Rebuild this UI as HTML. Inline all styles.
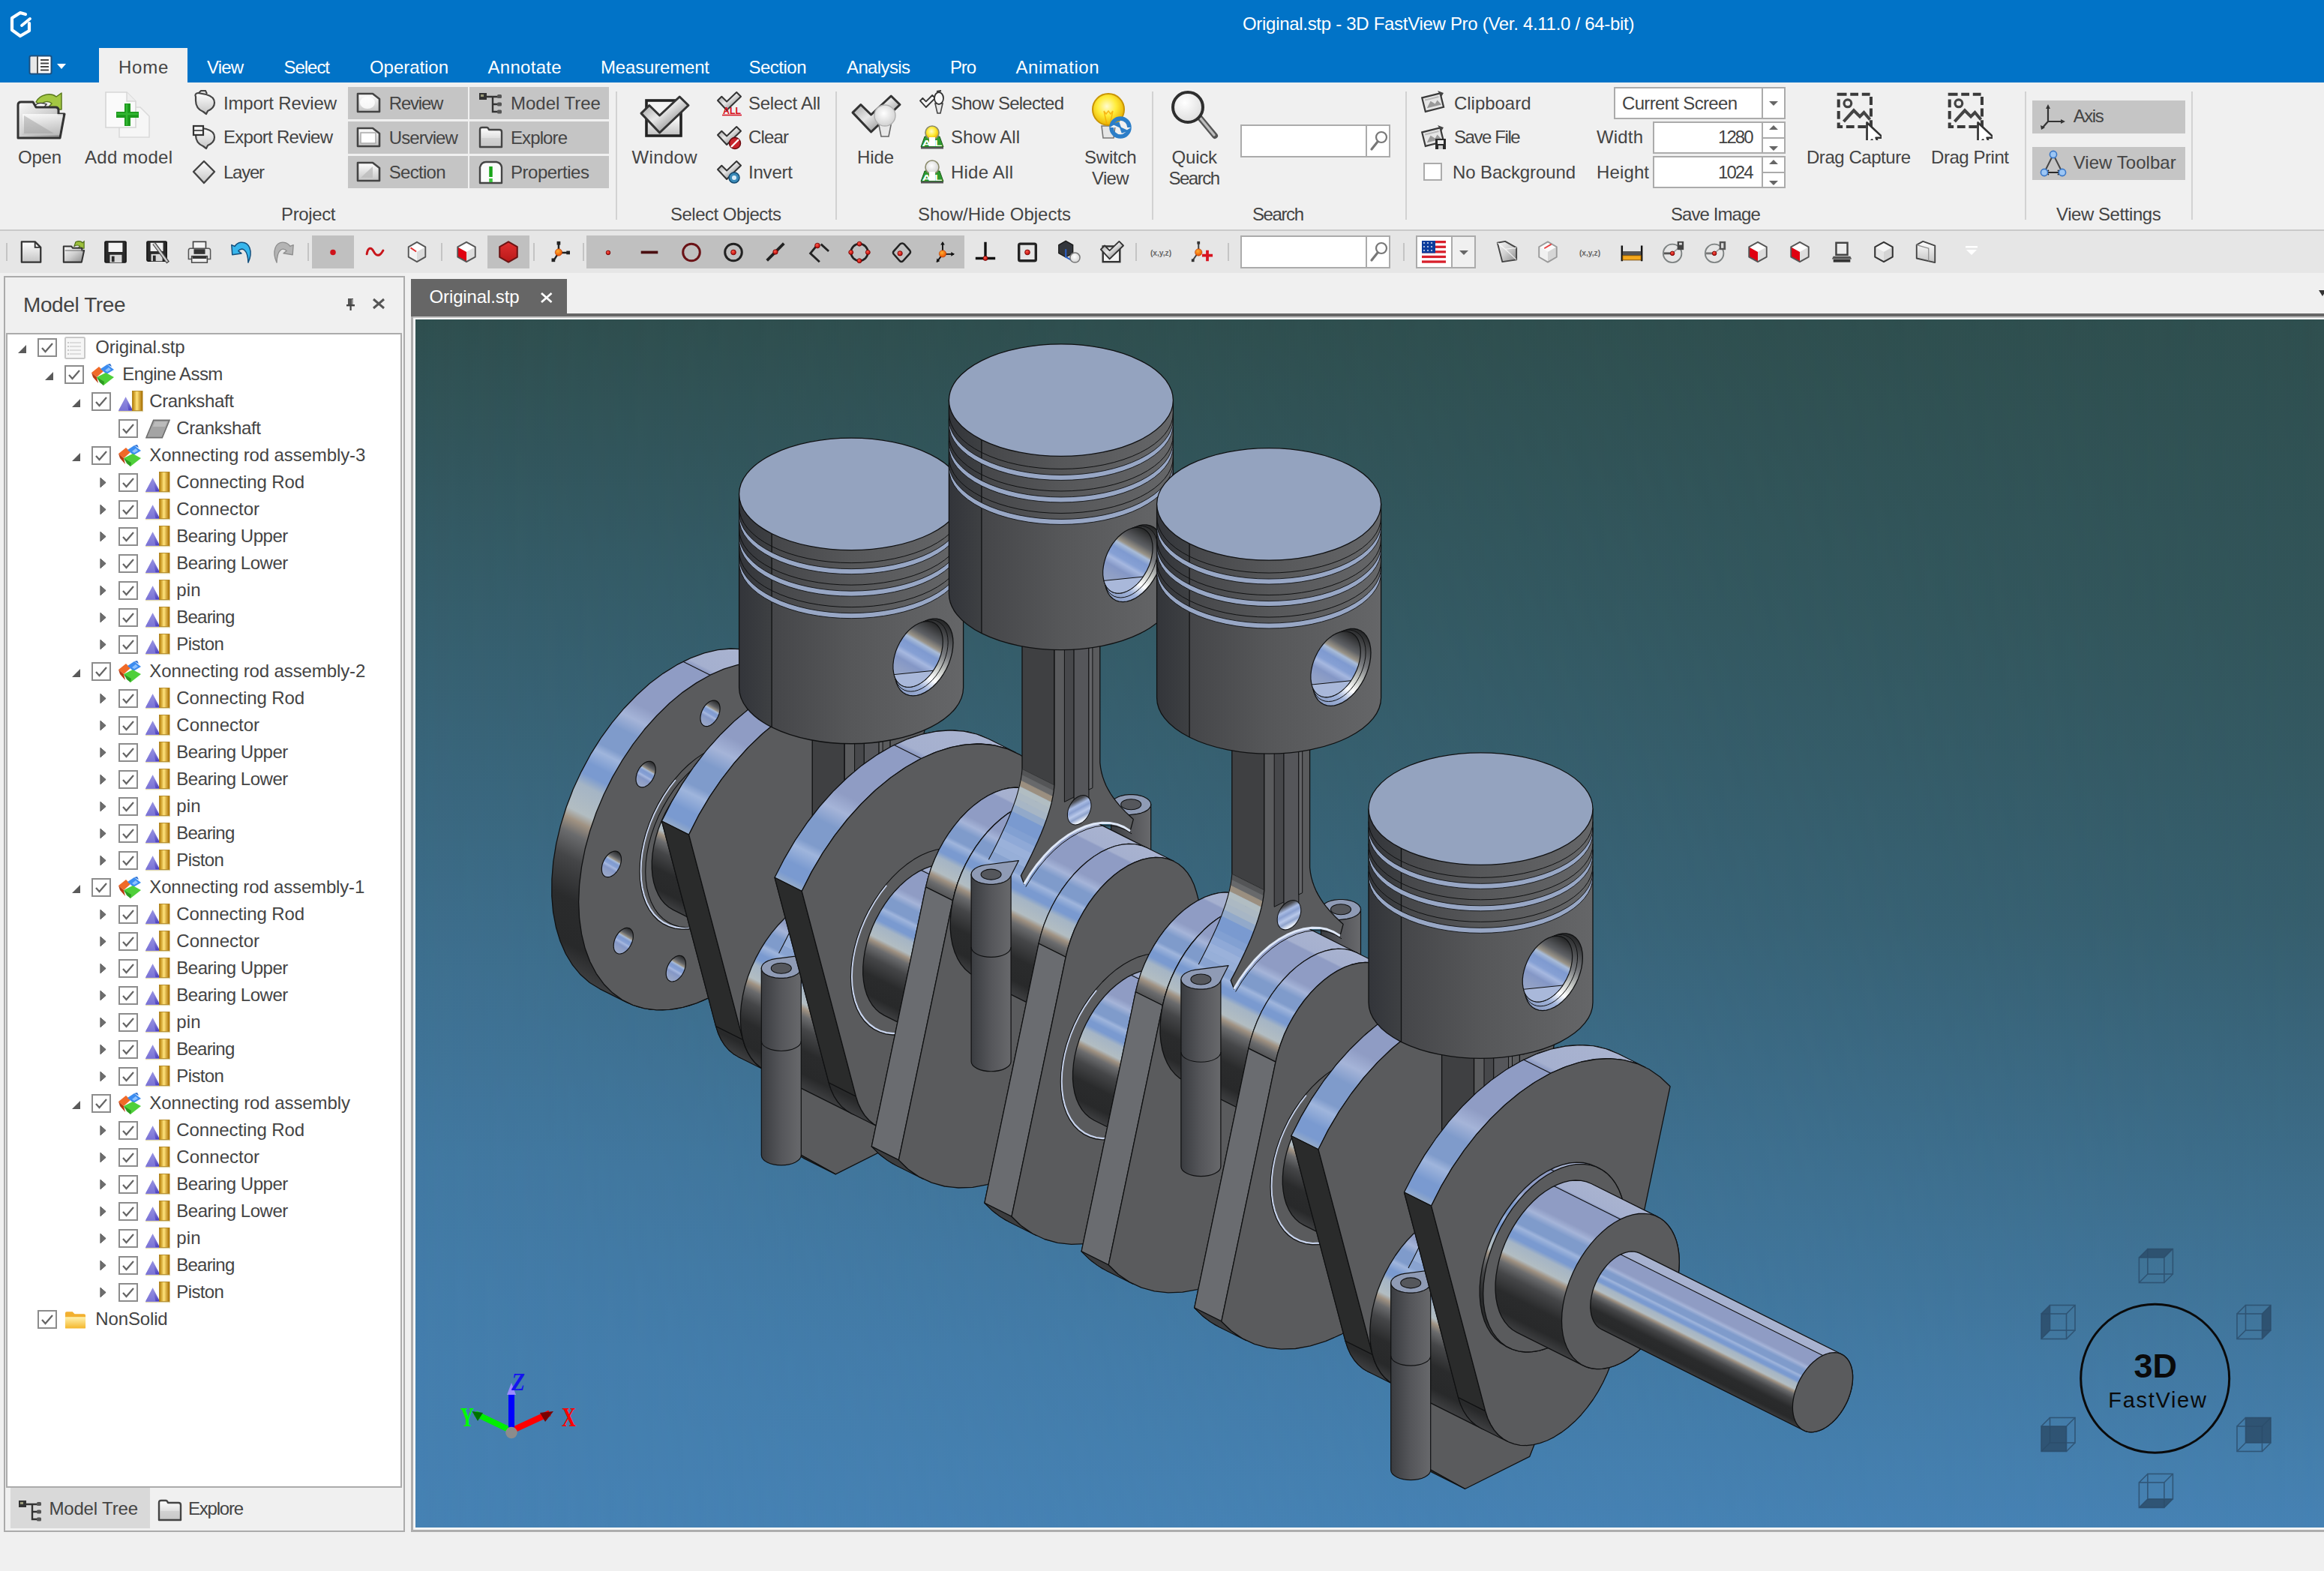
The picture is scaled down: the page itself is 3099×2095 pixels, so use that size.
<!DOCTYPE html>
<html><head><meta charset="utf-8"><title>Original.stp - 3D FastView Pro</title>
<style>
html,body{margin:0;padding:0;}
body{width:3099px;height:2095px;position:relative;overflow:hidden;background:#F0F0F0;font-family:"Liberation Sans",sans-serif;}
.t{position:absolute;white-space:nowrap;}
.r{position:absolute;display:block;}
</style></head><body>
<svg width="0" height="0" style="position:absolute"><defs>
<linearGradient id="gG" x1="0" y1="0" x2="1" y2="1"><stop offset="0" stop-color="#fafafa"/><stop offset=".5" stop-color="#cfcfcf"/><stop offset="1" stop-color="#8a8a8a"/></linearGradient>
<linearGradient id="gG2" x1="0" y1="0" x2="0" y2="1"><stop offset="0" stop-color="#ffffff"/><stop offset="1" stop-color="#c4c4c4"/></linearGradient>
<linearGradient id="gCk" x1="0" y1="0" x2="1" y2="1"><stop offset="0" stop-color="#8c8c8c"/><stop offset=".45" stop-color="#e8e8e8"/><stop offset=".75" stop-color="#9a9a9a"/><stop offset="1" stop-color="#d8d8d8"/></linearGradient>
<radialGradient id="gYB" cx=".45" cy=".4" r=".6"><stop offset="0" stop-color="#fffbd0"/><stop offset=".5" stop-color="#ffec3a"/><stop offset="1" stop-color="#e9b000"/></radialGradient>
<radialGradient id="gWB" cx=".45" cy=".4" r=".6"><stop offset="0" stop-color="#ffffff"/><stop offset="1" stop-color="#d2d2d2"/></radialGradient>
<radialGradient id="gRd" cx=".4" cy=".35" r=".7"><stop offset="0" stop-color="#ff5a4a"/><stop offset="1" stop-color="#b00000"/></radialGradient>
<radialGradient id="gOr" cx=".4" cy=".35" r=".7"><stop offset="0" stop-color="#ffb030"/><stop offset="1" stop-color="#e84a00"/></radialGradient>
<radialGradient id="gLens" cx=".4" cy=".35" r=".7"><stop offset="0" stop-color="#ffffff"/><stop offset="1" stop-color="#dcdcdc"/></radialGradient>
<linearGradient id="gFo" x1="0" y1="0" x2="0" y2="1"><stop offset="0" stop-color="#fff3b0"/><stop offset="1" stop-color="#f4b62a"/></linearGradient>
<linearGradient id="gGo" x1="0" y1="0" x2="1" y2="0"><stop offset="0" stop-color="#b07800"/><stop offset=".45" stop-color="#ffe27a"/><stop offset="1" stop-color="#a66c00"/></linearGradient>
<linearGradient id="gPu" x1="0" y1="0" x2="0" y2="1"><stop offset="0" stop-color="#a9a6e6"/><stop offset="1" stop-color="#4b3fc0"/></linearGradient>
<linearGradient id="gHexR" x1="0" y1="0" x2="0" y2="1"><stop offset="0" stop-color="#e03030"/><stop offset="1" stop-color="#b81818"/></linearGradient>
</defs></svg>
<div class="r" style="left:0px;top:0px;width:3099px;height:110px;background:#0173C7;"></div>
<div class="r" style="left:132px;top:64px;width:118px;height:46px;background:#F0F0F0;"></div>
<svg class="r" style="left:12px;top:14px;" width="34" height="38" viewBox="0 0 34 38"><g fill="none" stroke="#fff" stroke-width="4.2" stroke-linejoin="round" stroke-linecap="round">
<path d="M22 5 L15 3 L4 10 V26 L15 34 L27 27 V17"/><path d="M17 20 L28 11" stroke-width="3.8"/></g></svg>
<svg class="r" style="left:38px;top:73px;" width="52" height="28" viewBox="0 0 52 28"><rect x="1.5" y="1.5" width="29" height="24" rx="2" fill="#fff" stroke="#1D4F7E" stroke-width="2"/>
<rect x="3" y="3" width="8" height="21" fill="#e8e8e8"/><path d="M12 2V25" stroke="#555" stroke-width="2"/>
<path d="M16 7H27M16 11.5H27M16 16H27M16 20.5H27" stroke="#444" stroke-width="2"/>
<path d="M38 12H50L44 19Z" fill="#fff"/></svg>
<span class="t" style="left:158.0px;top:74.7px;font-size:24px;line-height:30px;color:#444;letter-spacing:0.79px;">Home</span>
<span class="t" style="left:276.0px;top:74.7px;font-size:24px;line-height:30px;color:#fff;letter-spacing:-0.86px;">View</span>
<span class="t" style="left:378.6px;top:74.7px;font-size:24px;line-height:30px;color:#fff;letter-spacing:-1.06px;">Select</span>
<span class="t" style="left:493.0px;top:74.7px;font-size:24px;line-height:30px;color:#fff;letter-spacing:-0.05px;">Operation</span>
<span class="t" style="left:650.6px;top:74.7px;font-size:24px;line-height:30px;color:#fff;letter-spacing:0.27px;">Annotate</span>
<span class="t" style="left:801.0px;top:74.7px;font-size:24px;line-height:30px;color:#fff;letter-spacing:-0.17px;">Measurement</span>
<span class="t" style="left:998.5px;top:74.7px;font-size:24px;line-height:30px;color:#fff;letter-spacing:-0.51px;">Section</span>
<span class="t" style="left:1129.0px;top:74.7px;font-size:24px;line-height:30px;color:#fff;letter-spacing:-0.62px;">Analysis</span>
<span class="t" style="left:1267.0px;top:74.7px;font-size:24px;line-height:30px;color:#fff;letter-spacing:-1.18px;">Pro</span>
<span class="t" style="left:1354.5px;top:74.7px;font-size:24px;line-height:30px;color:#fff;letter-spacing:0.54px;">Animation</span>
<span class="t" style="left:1657.0px;top:16.7px;font-size:24px;line-height:30px;color:#fff;letter-spacing:-0.30px;">Original.stp - 3D FastView Pro (Ver. 4.11.0 / 64-bit)</span>
<div class="r" style="left:0px;top:306px;width:3099px;height:2px;background:#C9C9C9;"></div>
<div class="r" style="left:821px;top:122px;width:2px;height:171px;background:#D2D2D2;"></div>
<div class="r" style="left:1114px;top:122px;width:2px;height:171px;background:#D2D2D2;"></div>
<div class="r" style="left:1536px;top:122px;width:2px;height:171px;background:#D2D2D2;"></div>
<div class="r" style="left:1874px;top:122px;width:2px;height:171px;background:#D2D2D2;"></div>
<div class="r" style="left:2700px;top:122px;width:2px;height:171px;background:#D2D2D2;"></div>
<div class="r" style="left:2922px;top:122px;width:2px;height:171px;background:#D2D2D2;"></div>
<span class="t" style="left:375.0px;top:270.7px;font-size:24px;line-height:30px;color:#444;letter-spacing:-0.37px;">Project</span>
<span class="t" style="left:894.0px;top:270.7px;font-size:24px;line-height:30px;color:#444;letter-spacing:-0.52px;">Select Objects</span>
<span class="t" style="left:1224.0px;top:270.7px;font-size:24px;line-height:30px;color:#444;letter-spacing:-0.00px;">Show/Hide Objects</span>
<span class="t" style="left:1670.0px;top:270.7px;font-size:24px;line-height:30px;color:#444;letter-spacing:-1.41px;">Search</span>
<span class="t" style="left:2228.0px;top:270.7px;font-size:24px;line-height:30px;color:#444;letter-spacing:-0.92px;">Save Image</span>
<span class="t" style="left:2742.0px;top:270.7px;font-size:24px;line-height:30px;color:#444;letter-spacing:-0.44px;">View Settings</span>
<span class="t" style="left:24.0px;top:194.7px;font-size:24px;line-height:30px;color:#444;letter-spacing:-0.23px;">Open</span>
<span class="t" style="left:113.0px;top:194.7px;font-size:24px;line-height:30px;color:#444;letter-spacing:0.28px;">Add model</span>
<span class="t" style="left:842.6px;top:194.7px;font-size:24px;line-height:30px;color:#444;letter-spacing:0.33px;">Window</span>
<span class="t" style="left:1143.0px;top:194.7px;font-size:24px;line-height:30px;color:#444;letter-spacing:-0.11px;">Hide</span>
<span class="t" style="left:1446.0px;top:194.7px;font-size:24px;line-height:30px;color:#444;letter-spacing:-0.22px;">Switch</span>
<span class="t" style="left:1456.0px;top:222.7px;font-size:24px;line-height:30px;color:#444;letter-spacing:-0.66px;">View</span>
<span class="t" style="left:1562.6px;top:194.7px;font-size:24px;line-height:30px;color:#444;letter-spacing:-0.24px;">Quick</span>
<span class="t" style="left:1558.5px;top:222.7px;font-size:24px;line-height:30px;color:#444;letter-spacing:-1.51px;">Search</span>
<span class="t" style="left:2409.0px;top:194.7px;font-size:24px;line-height:30px;color:#444;letter-spacing:-0.46px;">Drag Capture</span>
<span class="t" style="left:2575.0px;top:194.7px;font-size:24px;line-height:30px;color:#444;letter-spacing:-0.45px;">Drag Print</span>
<span class="t" style="left:298.0px;top:122.7px;font-size:24px;line-height:30px;color:#444;letter-spacing:-0.20px;">Import Review</span>
<span class="t" style="left:298.0px;top:168.2px;font-size:24px;line-height:30px;color:#444;letter-spacing:-0.73px;">Export Review</span>
<span class="t" style="left:298.0px;top:214.7px;font-size:24px;line-height:30px;color:#444;letter-spacing:-1.26px;">Layer</span>
<div class="r" style="left:464px;top:116px;width:160px;height:43px;background:#C5C5C5;"></div>
<div class="r" style="left:626px;top:116px;width:186px;height:43px;background:#C5C5C5;"></div>
<span class="t" style="left:518.8px;top:122.7px;font-size:24px;line-height:30px;color:#444;letter-spacing:-1.21px;">Review</span>
<span class="t" style="left:681.0px;top:122.7px;font-size:24px;line-height:30px;color:#444;letter-spacing:-0.01px;">Model Tree</span>
<div class="r" style="left:464px;top:162px;width:160px;height:43px;background:#C5C5C5;"></div>
<div class="r" style="left:626px;top:162px;width:186px;height:43px;background:#C5C5C5;"></div>
<span class="t" style="left:518.8px;top:168.7px;font-size:24px;line-height:30px;color:#444;letter-spacing:-0.95px;">Userview</span>
<span class="t" style="left:681.0px;top:168.7px;font-size:24px;line-height:30px;color:#444;letter-spacing:-0.90px;">Explore</span>
<div class="r" style="left:464px;top:208px;width:160px;height:43px;background:#C5C5C5;"></div>
<div class="r" style="left:626px;top:208px;width:186px;height:43px;background:#C5C5C5;"></div>
<span class="t" style="left:518.8px;top:214.7px;font-size:24px;line-height:30px;color:#444;letter-spacing:-0.72px;">Section</span>
<span class="t" style="left:681.0px;top:214.7px;font-size:24px;line-height:30px;color:#444;letter-spacing:-0.49px;">Properties</span>
<span class="t" style="left:998.0px;top:122.7px;font-size:24px;line-height:30px;color:#444;letter-spacing:-0.30px;">Select All</span>
<span class="t" style="left:998.0px;top:168.2px;font-size:24px;line-height:30px;color:#444;letter-spacing:-0.84px;">Clear</span>
<span class="t" style="left:998.0px;top:214.7px;font-size:24px;line-height:30px;color:#444;letter-spacing:-0.21px;">Invert</span>
<span class="t" style="left:1268.0px;top:122.7px;font-size:24px;line-height:30px;color:#444;letter-spacing:-0.76px;">Show Selected</span>
<span class="t" style="left:1268.0px;top:168.2px;font-size:24px;line-height:30px;color:#444;letter-spacing:-0.01px;">Show All</span>
<span class="t" style="left:1268.0px;top:214.7px;font-size:24px;line-height:30px;color:#444;letter-spacing:0.23px;">Hide All</span>
<span class="t" style="left:1939.0px;top:122.7px;font-size:24px;line-height:30px;color:#444;letter-spacing:-0.03px;">Clipboard</span>
<span class="t" style="left:1939.0px;top:168.2px;font-size:24px;line-height:30px;color:#444;letter-spacing:-1.42px;">Save File</span>
<span class="t" style="left:1937.0px;top:214.7px;font-size:24px;line-height:30px;color:#444;letter-spacing:-0.12px;">No Background</span>
<span class="t" style="left:2129.0px;top:168.2px;font-size:24px;line-height:30px;color:#444;letter-spacing:0.16px;">Width</span>
<span class="t" style="left:2129.0px;top:214.7px;font-size:24px;line-height:30px;color:#444;letter-spacing:0.13px;">Height</span>
<div class="r" style="left:2710px;top:134px;width:204px;height:43.5px;background:#C5C5C5;"></div>
<div class="r" style="left:2710px;top:196px;width:204px;height:43.5px;background:#C5C5C5;"></div>
<span class="t" style="left:2764.7px;top:140.4px;font-size:24px;line-height:30px;color:#444;letter-spacing:-1.45px;">Axis</span>
<span class="t" style="left:2764.7px;top:202.3px;font-size:24px;line-height:30px;color:#444;letter-spacing:0.04px;">View Toolbar</span>
<div class="r" style="left:1654px;top:166px;width:200px;height:43.5px;background:#fff;box-sizing:border-box;border:2px solid #ABABAB;"></div>
<div class="r" style="left:1821px;top:166px;width:2px;height:43.5px;background:#ABABAB;"></div>
<div class="r" style="left:2152px;top:116px;width:229px;height:43px;background:#fff;box-sizing:border-box;border:2px solid #ABABAB;"></div>
<div class="r" style="left:2349px;top:116px;width:2px;height:43px;background:#ABABAB;"></div>
<span class="t" style="left:2163.0px;top:122.7px;font-size:24px;line-height:30px;color:#444;letter-spacing:-0.67px;">Current Screen</span>
<div class="r" style="left:2204px;top:162px;width:177px;height:43px;background:#fff;box-sizing:border-box;border:2px solid #ABABAB;"></div>
<div class="r" style="left:2349px;top:162px;width:2px;height:43px;background:#ABABAB;"></div>
<div class="r" style="left:2204px;top:208px;width:177px;height:43px;background:#fff;box-sizing:border-box;border:2px solid #ABABAB;"></div>
<div class="r" style="left:2349px;top:208px;width:2px;height:43px;background:#ABABAB;"></div>
<div class="r" style="left:2349px;top:183px;width:32px;height:2px;background:#ABABAB;"></div>
<div class="r" style="left:2349px;top:229px;width:32px;height:2px;background:#ABABAB;"></div>
<span class="t" style="left:2291.0px;top:168.2px;font-size:24px;line-height:30px;color:#444;letter-spacing:-1.96px;">1280</span>
<span class="t" style="left:2291.0px;top:214.7px;font-size:24px;line-height:30px;color:#444;letter-spacing:-1.96px;">1024</span>
<div class="r" style="left:1898px;top:217px;width:25px;height:24px;background:#fff;box-sizing:border-box;border:2px solid #ABABAB;"></div>
<svg class="r" style="left:2349px;top:116px;" width="32" height="135" viewBox="0 0 32 135"><path d="M10 19 H22 L16 25 Z" fill="#666"/><path d="M10 58H22L16 52Z M10 80H22L16 86Z M10 104H22L16 98Z M10 126H22L16 132Z" fill="#666" transform="translate(0,-1)"/></svg>
<svg class="r" style="left:1823px;top:170px;" width="30" height="36" viewBox="0 0 30 36"><circle cx="19" cy="13" r="7" fill="#fdfdfd" stroke="#777" stroke-width="2.2"/><path d="M14 19L6 29" stroke="#777" stroke-width="3.2" stroke-linecap="round"/></svg>
<div class="r" style="left:0px;top:308px;width:3099px;height:56px;background:#E6E6E6;"></div>
<div class="r" style="left:416px;top:314px;width:56px;height:43.5px;background:#C0C0C0;"></div>
<div class="r" style="left:650px;top:314px;width:56px;height:43.5px;background:#C0C0C0;"></div>
<div class="r" style="left:782px;top:314px;width:504px;height:43.5px;background:#C0C0C0;"></div>
<div class="r" style="left:8px;top:324px;width:2px;height:24px;background:#C4C4C4;"></div>
<div class="r" style="left:410px;top:324px;width:2px;height:24px;background:#C4C4C4;"></div>
<div class="r" style="left:588px;top:324px;width:2px;height:24px;background:#C4C4C4;"></div>
<div class="r" style="left:711px;top:324px;width:2px;height:24px;background:#C4C4C4;"></div>
<div class="r" style="left:777px;top:324px;width:2px;height:24px;background:#C4C4C4;"></div>
<div class="r" style="left:1514px;top:324px;width:2px;height:24px;background:#C4C4C4;"></div>
<div class="r" style="left:1637px;top:324px;width:2px;height:24px;background:#C4C4C4;"></div>
<div class="r" style="left:1871px;top:324px;width:2px;height:24px;background:#C4C4C4;"></div>
<svg class="r" style="left:26px;top:320px;overflow:visible" width="32" height="32" viewBox="-1 -1 34 34"><path d="M2 1.5H21L29 9.5V30.5H2Z" fill="url(#gG2)" stroke="#333" stroke-width="2.4" stroke-linejoin="round"/><path d="M21 1.5V9.5H29" fill="none" stroke="#333" stroke-width="2"/></svg>
<svg class="r" style="left:82px;top:320px;overflow:visible" width="32" height="32" viewBox="-1 -1 34 34"><path d="M19 2C23 0 27 1 29 3L31 1V11H22L25 8C23 6 20 6 17 8Z" fill="#9CBF3C" stroke="#4a6a14" stroke-width="1.2"/><path d="M2 30.5V8H13L15 10.5H28V14H31L27.5 30.5Z" fill="url(#gG)" stroke="#333" stroke-width="2.2" stroke-linejoin="round"/><path d="M4 14H30" stroke="#777" stroke-width="1.2"/></svg>
<svg class="r" style="left:138px;top:320px;overflow:visible" width="32" height="32" viewBox="-1 -1 34 34"><rect x="1" y="1" width="30" height="30" rx="1.5" fill="#2a2a2a" stroke="#111" stroke-width="1.5"/><rect x="6" y="3" width="20" height="13" fill="#f4f4f4"/><rect x="8" y="20" width="17" height="11" fill="#d8d8d8"/><rect x="10.5" y="22" width="4" height="8" fill="#2a2a2a"/></svg>
<svg class="r" style="left:194px;top:320px;overflow:visible" width="32" height="32" viewBox="-1 -1 34 34"><rect x="1" y="1" width="28" height="28" rx="1.5" fill="#2a2a2a" stroke="#111" stroke-width="1.5"/><rect x="6" y="3" width="18" height="12" fill="#f0f0f0"/><rect x="7" y="19" width="16" height="10" fill="#d8d8d8"/><rect x="9.5" y="21" width="4" height="8" fill="#2a2a2a"/><path d="M11 4L31 31" stroke="#444" stroke-width="5"/><path d="M11 4L30 30" stroke="#cfcfcf" stroke-width="2.5"/></svg>
<svg class="r" style="left:250px;top:320px;overflow:visible" width="32" height="32" viewBox="-1 -1 34 34"><rect x="7" y="1.5" width="18" height="12" fill="#f4f4f4" stroke="#444" stroke-width="1.8"/><path d="M3 11H29Q31.5 11 31.5 14V26H0.5V14Q0.5 11 3 11Z" fill="#e2e2e2" stroke="#555" stroke-width="1.6"/><rect x="8" y="12" width="16" height="7" fill="#333"/><rect x="5" y="22" width="22" height="9" fill="#f0f0f0" stroke="#444" stroke-width="1.6"/><rect x="6" y="22" width="20" height="3.5" fill="#333"/></svg>
<svg class="r" style="left:306px;top:320px;overflow:visible" width="32" height="32" viewBox="-1 -1 34 34"><path d="M2 6L3 20L16 18L11.5 14.5C17 9 25 12 25.5 31C33 15 27 1 15 2.5C11 3 8.5 5 6.5 8Z" fill="#38B6EC" stroke="#14507E" stroke-width="1.6" stroke-linejoin="round"/></svg>
<svg class="r" style="left:362px;top:320px;overflow:visible" width="32" height="32" viewBox="-1 -1 34 34"><path d="M30 6L29 20L16 18L20.5 14.5C15 9 7 12 6.5 31C-1 15 5 1 17 2.5C21 3 23.5 5 25.5 8Z" fill="#b4b4b4" stroke="#8e8e8e" stroke-width="1.4" stroke-linejoin="round"/></svg>
<svg class="r" style="left:428px;top:320px;overflow:visible" width="32" height="32" viewBox="-1 -1 34 34"><circle cx="16" cy="16.5" r="4" fill="#D0121A"/></svg>
<svg class="r" style="left:484px;top:320px;overflow:visible" width="32" height="32" viewBox="-1 -1 34 34"><path d="M4.5 19C6 9 11 9 14 15S22 24 27.5 14" fill="none" stroke="#C8151B" stroke-width="3.2" stroke-linecap="round"/></svg>
<svg class="r" style="left:540px;top:320px;overflow:visible" width="32" height="32" viewBox="-1 -1 34 34"><polygon points="16.0,2.0 28.0,9.0 16.0,16.0 4.0,9.0" fill="#ffffff"/><polygon points="4.0,9.0 16.0,16.0 16.0,30.0 4.0,23.0" fill="#f4f4f4"/><polygon points="16.0,16.0 28.0,9.0 28.0,23.0 16.0,30.0" fill="#dcdcdc"/><polygon points="16.0,2.0 28.0,9.0 28.0,23.0 16.0,30.0 4.0,23.0 4.0,9.0" fill="none" stroke="#555" stroke-width="2" stroke-linejoin="round"/><path d="M7 10L15 15.5" stroke="#E03030" stroke-width="2"/></svg>
<svg class="r" style="left:606px;top:320px;overflow:visible" width="32" height="32" viewBox="-1 -1 34 34"><polygon points="16.0,2.0 28.5,9.0 16.0,16.0 3.5,9.0" fill="#ffffff"/><polygon points="3.5,9.0 16.0,16.0 16.0,30.0 3.5,23.0" fill="#E00010"/><polygon points="16.0,16.0 28.5,9.0 28.5,23.0 16.0,30.0" fill="#dedede"/><polygon points="16.0,2.0 28.5,9.0 28.5,23.0 16.0,30.0 3.5,23.0 3.5,9.0" fill="none" stroke="#555" stroke-width="2" stroke-linejoin="round"/></svg>
<svg class="r" style="left:662px;top:320px;overflow:visible" width="32" height="32" viewBox="-1 -1 34 34"><polygon points="16.0,1.5 28.5,8.8 28.5,23.2 16.0,30.5 3.5,23.2 3.5,8.8" fill="url(#gHexR)" stroke="#6c1414" stroke-width="2.2" stroke-linejoin="round"/></svg>
<svg class="r" style="left:728px;top:320px;overflow:visible" width="32" height="32" viewBox="-1 -1 34 34"><path d="M17 17V4M17 17H32M17 17L10 28" stroke="#222" stroke-width="2.6"/><rect x="14.5" y="1" width="5" height="5" fill="#222"/><rect x="28" y="14.5" width="5" height="5" fill="#222"/><rect x="7" y="25" width="5" height="5" fill="#222"/><circle cx="17" cy="16.5" r="5" fill="url(#gOr)" stroke="#b03000" stroke-width=".6"/></svg>
<svg class="r" style="left:795px;top:320px;overflow:visible" width="32" height="32" viewBox="-1 -1 34 34"><circle cx="16" cy="17" r="3" fill="url(#gRd)" stroke="#6a0000" stroke-width=".8"/></svg>
<svg class="r" style="left:850px;top:320px;overflow:visible" width="32" height="32" viewBox="-1 -1 34 34"><path d="M4 16.5H28" stroke="#4a0e10" stroke-width="4"/></svg>
<svg class="r" style="left:906px;top:320px;overflow:visible" width="32" height="32" viewBox="-1 -1 34 34"><circle cx="16" cy="16.5" r="12" fill="none" stroke="#6a1216" stroke-width="3.2"/></svg>
<svg class="r" style="left:962px;top:320px;overflow:visible" width="32" height="32" viewBox="-1 -1 34 34"><circle cx="16" cy="16.5" r="12" fill="none" stroke="#222" stroke-width="3.2"/><circle cx="16" cy="16.5" r="3.6" fill="url(#gRd)" stroke="#6a0000" stroke-width=".8"/></svg>
<svg class="r" style="left:1018px;top:320px;overflow:visible" width="32" height="32" viewBox="-1 -1 34 34"><path d="M4 28L28 4" stroke="#222" stroke-width="4"/><circle cx="16" cy="16" r="3.4" fill="url(#gRd)" stroke="#6a0000" stroke-width=".8"/></svg>
<svg class="r" style="left:1074px;top:320px;overflow:visible" width="32" height="32" viewBox="-1 -1 34 34"><path d="M19 30L6 18L15 7M21 5L32 15" fill="none" stroke="#222" stroke-width="3"/><circle cx="16" cy="7" r="3.6" fill="url(#gRd)" stroke="#6a0000" stroke-width=".8"/></svg>
<svg class="r" style="left:1130px;top:320px;overflow:visible" width="32" height="32" viewBox="-1 -1 34 34"><circle cx="16" cy="16.5" r="12" fill="none" stroke="#222" stroke-width="2.8"/><circle cx="16" cy="4.5" r="3.2" fill="url(#gRd)" stroke="#6a0000" stroke-width=".8"/><circle cx="16" cy="28.5" r="3.2" fill="url(#gRd)" stroke="#6a0000" stroke-width=".8"/><circle cx="4" cy="16.5" r="3.2" fill="url(#gRd)" stroke="#6a0000" stroke-width=".8"/><circle cx="28" cy="16.5" r="3.2" fill="url(#gRd)" stroke="#6a0000" stroke-width=".8"/></svg>
<svg class="r" style="left:1186px;top:320px;overflow:visible" width="32" height="32" viewBox="-1 -1 34 34"><path d="M16 4Q18 3 20 5L28 14Q29.5 16 28 18L18 29Q16 30.5 14 29L5 19Q3.5 17 5 15L14 5Q15 4 16 4Z" fill="none" stroke="#222" stroke-width="2.6"/><circle cx="14" cy="18" r="3.4" fill="url(#gRd)" stroke="#6a0000" stroke-width=".8"/></svg>
<svg class="r" style="left:1241px;top:320px;overflow:visible" width="32" height="32" viewBox="-1 -1 34 34"><path d="M16 19V3M16 19H32M16 19L8 30" stroke="#111" stroke-width="2"/><path d="M13 6L16 1L19 6M28 16L33 19L28 22M8 25L7 31L12 29" fill="#111"/><circle cx="16" cy="18.5" r="5" fill="url(#gOr)" stroke="#b03000" stroke-width=".6"/></svg>
<svg class="r" style="left:1298px;top:320px;overflow:visible" width="32" height="32" viewBox="-1 -1 34 34"><path d="M16 2V25M2 25H30" stroke="#111" stroke-width="3.6"/><circle cx="16" cy="25" r="3.2" fill="url(#gRd)" stroke="#6a0000" stroke-width=".8"/></svg>
<svg class="r" style="left:1354px;top:320px;overflow:visible" width="32" height="32" viewBox="-1 -1 34 34"><rect x="4" y="4.5" width="24" height="24" rx="2" fill="none" stroke="#222" stroke-width="3.6"/><circle cx="16" cy="16.5" r="3.6" fill="url(#gRd)" stroke="#6a0000" stroke-width=".8"/></svg>
<svg class="r" style="left:1409px;top:320px;overflow:visible" width="32" height="32" viewBox="-1 -1 34 34"><polygon points="12.0,0.5 22.0,6.2 22.0,17.8 12.0,23.5 2.0,17.8 2.0,6.2" fill="#33363c" stroke="#1b1b1b" stroke-width="1.5"/><path d="M12 12V23L24 30" fill="none" stroke="#2a60c8" stroke-width="2.2"/><circle cx="25" cy="24" r="7" fill="url(#gWB)" stroke="#777" stroke-width="1.6"/></svg>
<svg class="r" style="left:1466px;top:320px;overflow:visible" width="32" height="32" viewBox="-1 -1 34 34"><rect x="4" y="8" width="24" height="22" fill="#f4f4f4" stroke="#333" stroke-width="2.6"/><polygon points="1.0,12.5 6.5,7.0 13.5,14.0 27.0,1.0 33.0,7.0 13.5,26.0" fill="url(#gCk)" stroke="#333" stroke-width="2" stroke-linejoin="round"/></svg>
<svg class="r" style="left:1532px;top:320px;overflow:visible" width="32" height="32" viewBox="-1 -1 34 34"><text x="16" y="21" font-size="11.5" font-weight="bold" font-family="Liberation Sans,sans-serif" fill="#666" text-anchor="middle" textLength="30" lengthAdjust="spacingAndGlyphs">(x,y,z)</text></svg>
<svg class="r" style="left:1586px;top:320px;overflow:visible" width="32" height="32" viewBox="-1 -1 34 34"><path d="M12 16V2M12 16L3 29" stroke="#444" stroke-width="2.2"/><rect x="10" y="1" width="4" height="4" fill="#333"/><rect x="2" y="26" width="4" height="4" fill="#333"/><circle cx="12" cy="16.5" r="5" fill="url(#gOr)" stroke="#b03000" stroke-width=".6"/><path d="M17 21H32M24.5 13.5V29" stroke="#D81420" stroke-width="4"/></svg>
<svg class="r" style="left:1993px;top:320px;overflow:visible" width="32" height="32" viewBox="-1 -1 34 34"><path d="M3 3L14 1L30 10V27L10 30Z" fill="url(#gG)" stroke="#444" stroke-width="2" stroke-linejoin="round"/><path d="M3 3L14 12L30 27M14 12L30 10" fill="none" stroke="#fff" stroke-width="1.2" opacity=".8"/></svg>
<svg class="r" style="left:2048px;top:320px;overflow:visible" width="32" height="32" viewBox="-1 -1 34 34"><polygon points="16.0,1.5 28.5,8.8 16.0,16.0 3.5,8.8" fill="#fafafa"/><polygon points="3.5,8.8 16.0,16.0 16.0,30.5 3.5,23.2" fill="#f0f0f0"/><polygon points="16.0,16.0 28.5,8.8 28.5,23.2 16.0,30.5" fill="#d6d6d6"/><polygon points="16.0,1.5 28.5,8.8 28.5,23.2 16.0,30.5 3.5,23.2 3.5,8.8" fill="none" stroke="#9a9a9a" stroke-width="2" stroke-linejoin="round"/><path d="M11 11L21 5" stroke="#E84040" stroke-width="2"/></svg>
<svg class="r" style="left:2104px;top:320px;overflow:visible" width="32" height="32" viewBox="-1 -1 34 34"><text x="16" y="21" font-size="11.5" font-weight="bold" font-family="Liberation Sans,sans-serif" fill="#666" text-anchor="middle" textLength="30" lengthAdjust="spacingAndGlyphs">(x,y,z)</text></svg>
<svg class="r" style="left:2160px;top:320px;overflow:visible" width="32" height="32" viewBox="-1 -1 34 34"><path d="M2 7V29M30 7V29" stroke="#111" stroke-width="2.6"/><rect x="3" y="15" width="26" height="6" fill="#555"/><rect x="3" y="21" width="26" height="6.5" fill="#F5A81C" stroke="#7a4a00" stroke-width="1"/></svg>
<svg class="r" style="left:2216px;top:320px;overflow:visible" width="32" height="32" viewBox="-1 -1 34 34"><circle cx="14" cy="18" r="13" fill="none" stroke="#7d8282" stroke-width="2"/><path d="M2 18H14" stroke="#555" stroke-width="3"/><path d="M14 18L25 8" stroke="#999" stroke-width="1.5"/><circle cx="14" cy="18" r="3" fill="url(#gRd)" stroke="#6a0000" stroke-width=".8"/><rect x="21" y="1" width="9" height="12" fill="#444"/><rect x="23.5" y="3" width="4" height="3" fill="#ddd"/></svg>
<svg class="r" style="left:2272px;top:320px;overflow:visible" width="32" height="32" viewBox="-1 -1 34 34"><circle cx="14" cy="18" r="13" fill="none" stroke="#7d8282" stroke-width="2"/><path d="M2 18H14" stroke="#777" stroke-width="3"/><path d="M14 18L25 8" stroke="#999" stroke-width="1.5"/><circle cx="14" cy="18" r="3" fill="url(#gRd)" stroke="#6a0000" stroke-width=".8"/><rect x="21" y="1" width="9" height="12" fill="#555"/><rect x="23.5" y="3.5" width="3.5" height="7" fill="#ddd"/></svg>
<svg class="r" style="left:2328px;top:320px;overflow:visible" width="32" height="32" viewBox="-1 -1 34 34"><polygon points="16.0,2.0 28.5,9.0 16.0,16.0 3.5,9.0" fill="#ffffff"/><polygon points="3.5,9.0 16.0,16.0 16.0,30.0 3.5,23.0" fill="#E00010"/><polygon points="16.0,16.0 28.5,9.0 28.5,23.0 16.0,30.0" fill="#dedede"/><polygon points="16.0,2.0 28.5,9.0 28.5,23.0 16.0,30.0 3.5,23.0 3.5,9.0" fill="none" stroke="#555" stroke-width="2" stroke-linejoin="round"/></svg>
<svg class="r" style="left:2384px;top:320px;overflow:visible" width="32" height="32" viewBox="-1 -1 34 34"><polygon points="16.0,2.0 28.5,9.0 16.0,16.0 3.5,9.0" fill="#ffffff"/><polygon points="3.5,9.0 16.0,16.0 16.0,30.0 3.5,23.0" fill="#E00010"/><polygon points="16.0,16.0 28.5,9.0 28.5,23.0 16.0,30.0" fill="#dedede"/><polygon points="16.0,2.0 28.5,9.0 28.5,23.0 16.0,30.0 3.5,23.0 3.5,9.0" fill="none" stroke="#555" stroke-width="2" stroke-linejoin="round"/></svg>
<svg class="r" style="left:2440px;top:320px;overflow:visible" width="32" height="32" viewBox="-1 -1 34 34"><rect x="8" y="3" width="16" height="17" fill="#ececec" stroke="#444" stroke-width="2.6"/><path d="M4 22H28L30 26H2Z" fill="#555"/><rect x="4" y="26.500" width="24" height="4" fill="#333"/></svg>
<svg class="r" style="left:2496px;top:320px;overflow:visible" width="32" height="32" viewBox="-1 -1 34 34"><polygon points="16.0,2.0 28.5,9.0 16.0,16.0 3.5,9.0" fill="#f6f6f6"/><polygon points="3.5,9.0 16.0,16.0 16.0,30.0 3.5,23.0" fill="#e4e4e4"/><polygon points="16.0,16.0 28.5,9.0 28.5,23.0 16.0,30.0" fill="#d4d4d4"/><polygon points="16.0,2.0 28.5,9.0 28.5,23.0 16.0,30.0 3.5,23.0 3.5,9.0" fill="none" stroke="#333" stroke-width="2.2" stroke-linejoin="round"/></svg>
<svg class="r" style="left:2552px;top:320px;overflow:visible" width="32" height="32" viewBox="-1 -1 34 34"><path d="M3 6L12 1L29 7V31L3 25Z" fill="url(#gG2)" stroke="#444" stroke-width="2" stroke-linejoin="round"/><path d="M3 6L20 11V29" fill="none" stroke="#888" stroke-width="1.2"/></svg>
<div class="r" style="left:1654px;top:314px;width:200px;height:43.5px;background:#fff;box-sizing:border-box;border:2px solid #ABABAB;"></div>
<div class="r" style="left:1821px;top:314px;width:2px;height:43.5px;background:#ABABAB;"></div>
<svg class="r" style="left:1823px;top:318px;" width="30" height="36" viewBox="0 0 30 36"><circle cx="19" cy="13" r="7" fill="#fdfdfd" stroke="#777" stroke-width="2.2"/><path d="M14 19L6 29" stroke="#777" stroke-width="3.2" stroke-linecap="round"/></svg>
<div class="r" style="left:1888px;top:314px;width:80px;height:43.5px;background:#fff;box-sizing:border-box;border:2px solid #ABABAB;"></div>
<div class="r" style="left:1935px;top:314px;width:2px;height:43.5px;background:#ABABAB;"></div>
<div class="r" style="left:1937px;top:316px;width:29px;height:39.5px;background:#F0F0F0;"></div>
<svg class="r" style="left:1896px;top:321px;" width="32" height="30" viewBox="0 0 32 30"><rect x="0" y="0" width="32" height="30" fill="#fff"/><rect x="0" y="0" width="32" height="3.3" fill="#D8202C"/><rect x="0" y="6.6" width="32" height="3.3" fill="#D8202C"/><rect x="0" y="13.2" width="32" height="3.3" fill="#D8202C"/><rect x="0" y="19.8" width="32" height="3.3" fill="#D8202C"/><rect x="0" y="26.4" width="32" height="3.3" fill="#D8202C"/><rect x="0" y="0" width="18" height="16.5" fill="#0B3C9C"/><circle cx="3" cy="3" r="1.1" fill="#fff" opacity=".8"/><circle cx="3" cy="8" r="1.1" fill="#fff" opacity=".8"/><circle cx="3" cy="13" r="1.1" fill="#fff" opacity=".8"/><circle cx="8" cy="3" r="1.1" fill="#fff" opacity=".8"/><circle cx="8" cy="8" r="1.1" fill="#fff" opacity=".8"/><circle cx="8" cy="13" r="1.1" fill="#fff" opacity=".8"/><circle cx="13" cy="3" r="1.1" fill="#fff" opacity=".8"/><circle cx="13" cy="8" r="1.1" fill="#fff" opacity=".8"/><circle cx="13" cy="13" r="1.1" fill="#fff" opacity=".8"/></svg>
<svg class="r" style="left:1937px;top:316px;" width="30" height="40" viewBox="0 0 30 40"><path d="M9 18 H21 L15 24 Z" fill="#666"/></svg>
<svg class="r" style="left:2620px;top:326px;" width="18" height="16" viewBox="0 0 18 16"><path d="M1 2H17V4.5H1ZM2 7H16L9 14Z" fill="#fff"/></svg>
<svg class="r" style="left:22px;top:122px;" width="66" height="66" viewBox="0 0 66 66"><path d="M26 14C31 4 45 1 53 7L60 2V24H40L47 16C43 12 36 13 32 18Z" fill="#A4C843" stroke="#5b7a1d" stroke-width="1.5" stroke-linejoin="round"/>
<path d="M24 19Q30 13 40 17L36 22H24Z" fill="#fff" stroke="#444" stroke-width="1.5"/>
<path d="M2 62V18Q2 14 6 14H22L26 21H52Q56 21 56 25V30H64L58 62Z" fill="url(#gG)" stroke="#333" stroke-width="3" stroke-linejoin="round"/>
<path d="M8 30H62L57 58H8Z" fill="url(#gG2)" opacity=".75"/><path d="M10 32L50 56H10Z" fill="#9a9a9a" opacity=".45"/></svg>
<svg class="r" style="left:139px;top:121px;" width="64" height="64" viewBox="0 0 64 64"><path d="M20 22H48L60 34V62H20Z" fill="#f6f6f6" stroke="#dadada" stroke-width="1.6"/>
<path d="M2 2H30L42 14V49H2Z" fill="#fafafa" stroke="#d6d6d6" stroke-width="1.6"/><path d="M30 2V14H42" fill="#eee" stroke="#d6d6d6" stroke-width="1.4"/>
<path d="M16 32H46M31 17V47" stroke="#1D9A1D" stroke-width="8"/><path d="M17 31H45M30 18V46" stroke="#3CC43C" stroke-width="2.5" opacity=".7"/></svg>
<svg class="r" style="left:256px;top:120px;" width="34" height="34" viewBox="0 0 34 34"><path d="M8 5L12 1H18L20 5" fill="#ddd" stroke="#444" stroke-width="2"/><path d="M5 9Q3 5 8 4L19 6Q30 9 30 17Q30 24 21 28L19 32L15 29Q5 25 5 14Z" fill="url(#gG2)" stroke="#444" stroke-width="2.2" stroke-linejoin="round"/></svg>
<svg class="r" style="left:256px;top:166px;" width="34" height="34" viewBox="0 0 34 34"><path d="M5 9Q3 5 8 4L19 6Q30 9 30 17Q30 24 21 28L19 32L15 29Q5 25 5 14Z" fill="url(#gG2)" stroke="#444" stroke-width="2.2" stroke-linejoin="round"/><rect x="2" y="2" width="13" height="12" fill="#f4f4f4" stroke="#333" stroke-width="2.2"/><path d="M2 8H15" stroke="#333" stroke-width="1.6"/></svg>
<svg class="r" style="left:256px;top:213px;" width="34" height="34" viewBox="0 0 34 34"><path d="M16 2L30 16L16 31L2 16Z" fill="url(#gG2)" stroke="#444" stroke-width="2.4" stroke-linejoin="round"/></svg>
<svg class="r" style="left:475px;top:123px;" width="34" height="30" viewBox="0 0 34 30"><path d="M2 2H22L31 9V26H2Z" fill="url(#gG2)" stroke="#444" stroke-width="2.6" stroke-linejoin="round"/><ellipse cx="15" cy="14" rx="10" ry="8" fill="#fff" opacity=".8"/></svg>
<svg class="r" style="left:475px;top:169px;" width="34" height="30" viewBox="0 0 34 30"><path d="M2 2H22L31 9V26H2Z" fill="url(#gG2)" stroke="#444" stroke-width="2.6" stroke-linejoin="round"/><rect x="6" y="8" width="20" height="14" fill="#fff" stroke="#aaa" stroke-width="1.5"/></svg>
<svg class="r" style="left:475px;top:215px;" width="34" height="30" viewBox="0 0 34 30"><path d="M2 2H22L31 9V26H2Z" fill="url(#gG2)" stroke="#444" stroke-width="2.6" stroke-linejoin="round"/><path d="M6 22L22 7V22Z" fill="#bbb" opacity=".8"/></svg>
<svg class="r" style="left:638px;top:123px;" width="34" height="32" viewBox="0 0 34 32"><rect x="1" y="1" width="10" height="9" fill="#333"/><rect x="3" y="3" width="4" height="3" fill="#9a9a7a"/><path d="M11 6H19V26H26M19 6H26M19 16H26" fill="none" stroke="#333" stroke-width="2.4"/><rect x="25" y="3" width="6" height="5" rx="1.5" fill="#555"/><rect x="25" y="13.5" width="6" height="5" rx="1.5" fill="#555"/><rect x="25" y="23.500" width="6" height="5" rx="1.5" fill="#555"/></svg>
<svg class="r" style="left:638px;top:168px;" width="34" height="32" viewBox="0 0 34 32"><path d="M2 28V5Q2 2 5 2H11Q13 2 14 5H28Q31 5 31 8V28Z" fill="url(#gG2)" stroke="#444" stroke-width="2.4" stroke-linejoin="round"/><path d="M4 16H29V26H4Z" fill="#c9c9c9" opacity=".6"/></svg>
<svg class="r" style="left:638px;top:214px;" width="34" height="32" viewBox="0 0 34 32"><path d="M2 30V9Q4 2 10 2H24Q30 3 31 9V30Z" fill="#fbfbfb" stroke="#444" stroke-width="2.4" stroke-linejoin="round"/><path d="M16.5 8V22" stroke="#18A418" stroke-width="4.5"/><rect x="14.2" y="24" width="4.6" height="5" fill="#3CC43C"/></svg>
<svg class="r" style="left:852px;top:126px;" width="70" height="60" viewBox="0 0 70 60"><rect x="10" y="8" width="46" height="47" fill="#f2f2f2" stroke="#222" stroke-width="3.6"/><path d="M12 30H54V53H12Z" fill="url(#gG2)"/><polygon points="3.0,25.1 13.8,14.5 27.6,28.0 54.2,3.0 66.0,14.5 27.6,51.0" fill="url(#gCk)" stroke="#333" stroke-width="3" stroke-linejoin="round"/></svg>
<svg class="r" style="left:955px;top:120px;" width="36" height="36" viewBox="0 0 36 36"><polygon points="2.0,14.0 7.3,8.8 14.1,15.5 27.2,3.0 33.0,8.8 14.1,27.0" fill="url(#gCk)" stroke="#333" stroke-width="2" stroke-linejoin="round"/><text x="9" y="32" font-size="13" font-weight="bold" font-family="Liberation Sans,sans-serif" fill="#D8101C" textLength="24" lengthAdjust="spacingAndGlyphs">ALL</text><path d="M8 33.5H34" stroke="#D8101C" stroke-width="1.6"/></svg>
<svg class="r" style="left:955px;top:166px;" width="36" height="36" viewBox="0 0 36 36"><polygon points="2.0,14.0 7.3,8.8 14.1,15.5 27.2,3.0 33.0,8.8 14.1,27.0" fill="url(#gCk)" stroke="#333" stroke-width="2" stroke-linejoin="round"/><circle cx="25" cy="25" r="7.5" fill="#c8242c" stroke="#6a0a10" stroke-width="1.5"/><path d="M20 30L30 20" stroke="#fff" stroke-width="2.4"/></svg>
<svg class="r" style="left:955px;top:212px;" width="36" height="36" viewBox="0 0 36 36"><polygon points="2.0,14.0 7.3,8.8 14.1,15.5 27.2,3.0 33.0,8.8 14.1,27.0" fill="url(#gCk)" stroke="#333" stroke-width="2" stroke-linejoin="round"/><circle cx="24" cy="25" r="7" fill="#3a8ab8" stroke="#134a70" stroke-width="1.5"/><circle cx="24" cy="25" r="3" fill="#d8ecf8"/></svg>
<svg class="r" style="left:1134px;top:124px;" width="70" height="62" viewBox="0 0 70 62"><polygon points="3.0,26.1 13.8,15.5 27.6,29.0 54.2,4.0 66.0,15.5 27.6,52.0" fill="url(#gCk)" stroke="#333" stroke-width="3" stroke-linejoin="round"/><path d="M37 38L41 58H51L55 38Z" fill="#e8e8e8" stroke="#666" stroke-width="1.6"/><circle cx="46" cy="30" r="14" fill="url(#gWB)" stroke="#b0b0b0" stroke-width="1.4"/></svg>
<svg class="r" style="left:1226px;top:120px;" width="36" height="36" viewBox="0 0 36 36"><polygon points="1.0,14.4 4.4,10.8 8.8,15.3 17.2,7.0 21.0,10.8 8.8,23.0" fill="#f4f4f4" stroke="#333" stroke-width="1.8" stroke-linejoin="round"/><path d="M21 18L24 31H28L31 18Z" fill="#e8e8e8" stroke="#444" stroke-width="1.6"/><ellipse cx="26" cy="11" rx="6" ry="8" fill="#f8f8f8" stroke="#333" stroke-width="1.8"/><path d="M23 2L29 1" stroke="#333" stroke-width="2"/></svg>
<svg class="r" style="left:1225px;top:166px;" width="36" height="36" viewBox="0 0 36 36"><path d="M3 30L8 16H28L33 30Z" fill="#2E9A2E" stroke="#1a5a1a" stroke-width="1"/><rect x="3" y="30" width="30" height="2.5" fill="#555"/><circle cx="18" cy="11" r="9" fill="url(#gYB)" stroke="#8a8a6a" stroke-width="1.6"/><rect x="14" y="17" width="8" height="12" fill="#fff"/><text x="4.5" y="29" font-size="11" font-weight="bold" font-family="Liberation Sans,sans-serif" fill="#fff" textLength="27" lengthAdjust="spacingAndGlyphs">A L</text></svg>
<svg class="r" style="left:1225px;top:212px;" width="36" height="36" viewBox="0 0 36 36"><path d="M3 30L8 16H28L33 30Z" fill="#2E9A2E" stroke="#1a5a1a" stroke-width="1"/><rect x="3" y="30" width="30" height="2.5" fill="#555"/><circle cx="18" cy="11" r="9" fill="url(#gWB)" stroke="#8a8a6a" stroke-width="1.6"/><rect x="14" y="17" width="8" height="12" fill="#fff"/><text x="4.5" y="29" font-size="11" font-weight="bold" font-family="Liberation Sans,sans-serif" fill="#fff" textLength="27" lengthAdjust="spacingAndGlyphs">A L</text></svg>
<svg class="r" style="left:1452px;top:122px;" width="60" height="66" viewBox="0 0 60 66"><path d="M17 46L19 62H33L35 46Z" fill="#e6e6e6" stroke="#777" stroke-width="1.6"/><circle cx="26" cy="24" r="21" fill="url(#gYB)" stroke="#c99400" stroke-width="2"/><path d="M20 26L24 44M32 26L28 44M20 26L23 30L26 26L29 30L32 26" fill="none" stroke="#f6a800" stroke-width="1.4" opacity=".8"/><circle cx="42" cy="48" r="12" fill="none" stroke="#2C7EC8" stroke-width="5.5"/><path d="M28 48H40V40Z M56 48H44V56Z" fill="#F0F0F0"/><path d="M33 40L43 40L43 50Z" fill="#2C7EC8" transform="rotate(-20 42 48)"/><path d="M51 56L41 56L41 46Z" fill="#2C7EC8" transform="rotate(-20 42 48)"/></svg>
<svg class="r" style="left:1560px;top:119px;" width="66" height="68" viewBox="0 0 66 68"><path d="M40 38L60 62" stroke="#555" stroke-width="8" stroke-linecap="round"/><path d="M41 39L59 61" stroke="#bdbdbd" stroke-width="3.4" stroke-linecap="round"/><circle cx="24" cy="24" r="20" fill="url(#gLens)" stroke="#2e2e2e" stroke-width="4"/></svg>
<svg class="r" style="left:1895px;top:120px;" width="36" height="36" viewBox="0 0 36 36"><g transform="rotate(-14 16 16)"><rect x="3" y="7" width="25" height="19" fill="#e6e6e6" stroke="#3a3a3a" stroke-width="2.2"/><path d="M6 22L13 14L18 19L22 15L26 22Z" fill="#999"/><path d="M6 11H25" stroke="#bbb" stroke-width="2"/></g><path d="M22 1L30 4L27 9Z" fill="#444"/></svg>
<svg class="r" style="left:1895px;top:166px;" width="36" height="36" viewBox="0 0 36 36"><g transform="rotate(-14 16 16)"><rect x="3" y="7" width="25" height="19" fill="#e6e6e6" stroke="#3a3a3a" stroke-width="2.2"/><path d="M6 22L13 14L18 19L22 15L26 22Z" fill="#999"/><path d="M6 11H25" stroke="#bbb" stroke-width="2"/></g><path d="M22 1L30 4L27 9Z" fill="#444"/><rect x="19" y="19" width="14" height="14" fill="#2a2a2a"/><rect x="22" y="21" width="8" height="5" fill="#eee"/><rect x="23" y="28" width="6" height="5" fill="#ccc"/></svg>
<svg class="r" style="left:2449px;top:123px;" width="60" height="64" viewBox="0 0 44.4 47.4"><rect x="2" y="2" width="32" height="32" fill="none" stroke="#3a3a3a" stroke-width="3" stroke-dasharray="8 3.5"/><circle cx="11" cy="11" r="3.6" fill="none" stroke="#444" stroke-width="2.4"/><path d="M7 29L17 18L23 24L27 20L33 27" fill="none" stroke="#444" stroke-width="3"/><path d="M30 30V52L35 47L39 56L43 54L39 45H46Z" fill="#fff" stroke="#333" stroke-width="2" stroke-linejoin="round"/></svg>
<svg class="r" style="left:2597px;top:123px;" width="60" height="64" viewBox="0 0 44.4 47.4"><rect x="2" y="2" width="32" height="32" fill="none" stroke="#3a3a3a" stroke-width="3" stroke-dasharray="8 3.5"/><circle cx="11" cy="11" r="3.6" fill="none" stroke="#444" stroke-width="2.4"/><path d="M7 29L17 18L23 24L27 20L33 27" fill="none" stroke="#444" stroke-width="3"/><path d="M30 30V52L35 47L39 56L43 54L39 45H46Z" fill="#fff" stroke="#333" stroke-width="2" stroke-linejoin="round"/></svg>
<svg class="r" style="left:2720px;top:138px;" width="36" height="36" viewBox="0 0 36 36"><path d="M11 24V4M11 24H32M11 24L3 33" fill="none" stroke="#333" stroke-width="2.2"/><path d="M8 7L11 1L14 7ZM28 21L34 24L28 27ZM1 29L2 35L7 32Z" fill="#333"/></svg>
<svg class="r" style="left:2720px;top:200px;" width="36" height="36" viewBox="0 0 36 36"><path d="M18 6L6 30H30Z" fill="none" stroke="#444" stroke-width="2"/><path d="M10 30H26M12 27L8 30L12 33M24 27L28 30L24 33" fill="none" stroke="#222" stroke-width="1.6"/><circle cx="18" cy="6" r="4.6" fill="#9CC6F4" stroke="#3A78C8" stroke-width="1.6"/><circle cx="6" cy="30" r="4.6" fill="#9CC6F4" stroke="#3A78C8" stroke-width="1.6"/><circle cx="30" cy="30" r="4.6" fill="#9CC6F4" stroke="#3A78C8" stroke-width="1.6"/></svg>
<div class="r" style="left:5px;top:368px;width:535px;height:1675px;background:#F0F0F0;box-sizing:border-box;border:2px solid #ABABAB;"></div>
<span class="t" style="left:31.0px;top:388.8px;font-size:28px;line-height:35px;color:#444;letter-spacing:-0.39px;">Model Tree</span>
<svg class="r" style="left:460px;top:397px;" width="16" height="18" viewBox="0 0 16 18"><path d="M4 1H11V9H4Z" fill="#555"/><rect x="2" y="9" width="11" height="2.4" fill="#444"/><rect x="6.5" y="11" width="2.2" height="6" fill="#444"/><rect x="9" y="2" width="2" height="7" fill="#999"/></svg>
<svg class="r" style="left:496px;top:397px;" width="19" height="16" viewBox="0 0 19 16"><path d="M2 2L16 14M16 2L2 14" stroke="#555" stroke-width="3"/></svg>
<div class="r" style="left:8px;top:444px;width:528px;height:1540px;background:#fff;box-sizing:border-box;border:2px solid #ABABAB;"></div>
<svg width="0" height="0" style="position:absolute"><defs>
<symbol id="cb" viewBox="0 0 26 25"><rect x="1" y="1" width="24" height="23" fill="#fff" stroke="#8c8c8c" stroke-width="2"/><path d="M6 13L10.500 18L20 7" fill="none" stroke="#666" stroke-width="2.3"/></symbol>
<symbol id="exo" viewBox="0 0 14 14"><path d="M12 1V12H1Z" fill="#5a5a5a"/></symbol>
<symbol id="exc" viewBox="0 0 10 16"><path d="M1 1L9 8L1 15Z" fill="#6e6e6e" stroke="#555" stroke-width="1"/></symbol>
<symbol id="idoc" viewBox="0 0 28 30"><rect x="1" y="1" width="26" height="28" rx="1.5" fill="#f6f6f6" stroke="#c8c8c8" stroke-width="2"/><path d="M7 8H22M7 13H22M7 18H22M7 23H22" stroke="#d4d4d4" stroke-width="1.6"/><path d="M4 8H6M4 13H6M4 18H6M4 23H6" stroke="#bbb" stroke-width="1.6"/></symbol>
<symbol id="iasm" viewBox="0 0 32 30"><path d="M1 12L11 4L17 10L8 18Z" fill="#F06A28"/><path d="M1 12L8 18L10 26L3 18Z" fill="#B83A10"/><path d="M13 7L22 1L31 8L21 14Z" fill="#3B8CF0"/><path d="M22 1L26 0L28 4" fill="#2a6ed0"/><path d="M8 18L20 12L31 18L17 29Z" fill="#4FD03A"/><path d="M17 29L12 25L8 18L18 24Z" fill="#2C9A20"/><path d="M19 9L24 5L27 8L22 11Z" fill="#8EC2FF"/></symbol>
<symbol id="iprt" viewBox="0 0 34 30"><path d="M10 8L20 27H0Z" fill="url(#gPu)"/><path d="M10 8L14 27H0Z" fill="#8d88de" opacity=".7"/><rect x="19" y="0" width="14" height="27" fill="url(#gGo)"/><rect x="19" y="0" width="14" height="27" fill="none" stroke="#a87a10" stroke-width=".8"/><path d="M0 28H34" stroke="#e0d8b0" stroke-width="1.5"/></symbol>
<symbol id="ibody" viewBox="0 0 34 28"><path d="M11 2H33L23 26H1Z" fill="#a4a4a4" stroke="#6e6e6e" stroke-width="1.6"/><path d="M13 4H30L27 11H10Z" fill="#c4c4c4" opacity=".7"/></symbol>
<symbol id="ifold" viewBox="0 0 30 26"><path d="M1 24V4Q1 2 3 2H11L14 5H27Q29 5 29 7V24Z" fill="#F2B030"/><path d="M1 9H29V24Q29 25 28 25H2Q1 25 1 24Z" fill="url(#gFo)"/></symbol>
</defs></svg>
<span class="t" style="left:127.3px;top:447.7px;font-size:24px;line-height:30px;color:#444;letter-spacing:-0.18px;">Original.stp</span>
<span class="t" style="left:163.3px;top:483.7px;font-size:24px;line-height:30px;color:#444;letter-spacing:-0.61px;">Engine Assm</span>
<span class="t" style="left:199.3px;top:519.7px;font-size:24px;line-height:30px;color:#444;letter-spacing:-0.39px;">Crankshaft</span>
<span class="t" style="left:235.3px;top:555.7px;font-size:24px;line-height:30px;color:#444;letter-spacing:-0.39px;">Crankshaft</span>
<span class="t" style="left:199.3px;top:591.7px;font-size:24px;line-height:30px;color:#444;letter-spacing:-0.12px;">Xonnecting rod assembly-3</span>
<span class="t" style="left:235.3px;top:627.7px;font-size:24px;line-height:30px;color:#444;letter-spacing:-0.10px;">Connecting Rod</span>
<span class="t" style="left:235.3px;top:663.7px;font-size:24px;line-height:30px;color:#444;letter-spacing:-0.00px;">Connector</span>
<span class="t" style="left:235.3px;top:699.7px;font-size:24px;line-height:30px;color:#444;letter-spacing:-0.48px;">Bearing Upper</span>
<span class="t" style="left:235.3px;top:735.7px;font-size:24px;line-height:30px;color:#444;letter-spacing:-0.48px;">Bearing Lower</span>
<span class="t" style="left:235.3px;top:771.7px;font-size:24px;line-height:30px;color:#444;letter-spacing:0.14px;">pin</span>
<span class="t" style="left:235.3px;top:807.7px;font-size:24px;line-height:30px;color:#444;letter-spacing:-0.79px;">Bearing</span>
<span class="t" style="left:235.3px;top:843.7px;font-size:24px;line-height:30px;color:#444;letter-spacing:-0.62px;">Piston</span>
<span class="t" style="left:199.3px;top:879.7px;font-size:24px;line-height:30px;color:#444;letter-spacing:-0.12px;">Xonnecting rod assembly-2</span>
<span class="t" style="left:235.3px;top:915.7px;font-size:24px;line-height:30px;color:#444;letter-spacing:-0.10px;">Connecting Rod</span>
<span class="t" style="left:235.3px;top:951.7px;font-size:24px;line-height:30px;color:#444;letter-spacing:-0.00px;">Connector</span>
<span class="t" style="left:235.3px;top:987.7px;font-size:24px;line-height:30px;color:#444;letter-spacing:-0.48px;">Bearing Upper</span>
<span class="t" style="left:235.3px;top:1023.7px;font-size:24px;line-height:30px;color:#444;letter-spacing:-0.48px;">Bearing Lower</span>
<span class="t" style="left:235.3px;top:1059.7px;font-size:24px;line-height:30px;color:#444;letter-spacing:0.14px;">pin</span>
<span class="t" style="left:235.3px;top:1095.7px;font-size:24px;line-height:30px;color:#444;letter-spacing:-0.79px;">Bearing</span>
<span class="t" style="left:235.3px;top:1131.7px;font-size:24px;line-height:30px;color:#444;letter-spacing:-0.62px;">Piston</span>
<span class="t" style="left:199.3px;top:1167.7px;font-size:24px;line-height:30px;color:#444;letter-spacing:-0.16px;">Xonnecting rod assembly-1</span>
<span class="t" style="left:235.3px;top:1203.7px;font-size:24px;line-height:30px;color:#444;letter-spacing:-0.10px;">Connecting Rod</span>
<span class="t" style="left:235.3px;top:1239.7px;font-size:24px;line-height:30px;color:#444;letter-spacing:-0.00px;">Connector</span>
<span class="t" style="left:235.3px;top:1275.7px;font-size:24px;line-height:30px;color:#444;letter-spacing:-0.48px;">Bearing Upper</span>
<span class="t" style="left:235.3px;top:1311.7px;font-size:24px;line-height:30px;color:#444;letter-spacing:-0.48px;">Bearing Lower</span>
<span class="t" style="left:235.3px;top:1347.7px;font-size:24px;line-height:30px;color:#444;letter-spacing:0.14px;">pin</span>
<span class="t" style="left:235.3px;top:1383.7px;font-size:24px;line-height:30px;color:#444;letter-spacing:-0.79px;">Bearing</span>
<span class="t" style="left:235.3px;top:1419.7px;font-size:24px;line-height:30px;color:#444;letter-spacing:-0.62px;">Piston</span>
<span class="t" style="left:199.3px;top:1455.7px;font-size:24px;line-height:30px;color:#444;letter-spacing:-0.08px;">Xonnecting rod assembly</span>
<span class="t" style="left:235.3px;top:1491.7px;font-size:24px;line-height:30px;color:#444;letter-spacing:-0.10px;">Connecting Rod</span>
<span class="t" style="left:235.3px;top:1527.7px;font-size:24px;line-height:30px;color:#444;letter-spacing:-0.00px;">Connector</span>
<span class="t" style="left:235.3px;top:1563.7px;font-size:24px;line-height:30px;color:#444;letter-spacing:-0.48px;">Bearing Upper</span>
<span class="t" style="left:235.3px;top:1599.7px;font-size:24px;line-height:30px;color:#444;letter-spacing:-0.48px;">Bearing Lower</span>
<span class="t" style="left:235.3px;top:1635.7px;font-size:24px;line-height:30px;color:#444;letter-spacing:0.14px;">pin</span>
<span class="t" style="left:235.3px;top:1671.7px;font-size:24px;line-height:30px;color:#444;letter-spacing:-0.79px;">Bearing</span>
<span class="t" style="left:235.3px;top:1707.7px;font-size:24px;line-height:30px;color:#444;letter-spacing:-0.62px;">Piston</span>
<span class="t" style="left:127.3px;top:1743.7px;font-size:24px;line-height:30px;color:#444;letter-spacing:-0.14px;">NonSolid</span>
<svg class="r" style="left:0px;top:440px;" width="540" height="1545" viewBox="0 440 540 1545"><use href="#exo" x="23" y="459" width="14" height="14"/><use href="#cb" x="50" y="451" width="26" height="25"/><use href="#idoc" x="86" y="449.0" width="28" height="30"/><use href="#exo" x="59" y="495" width="14" height="14"/><use href="#cb" x="86" y="487" width="26" height="25"/><use href="#iasm" x="121" y="485.0" width="32" height="30"/><use href="#exo" x="95" y="531" width="14" height="14"/><use href="#cb" x="122" y="523" width="26" height="25"/><use href="#iprt" x="158" y="521.0" width="33" height="30"/><use href="#cb" x="158" y="559" width="26" height="25"/><use href="#ibody" x="194" y="558.0" width="33" height="28"/><use href="#exo" x="95" y="603" width="14" height="14"/><use href="#cb" x="122" y="595" width="26" height="25"/><use href="#iasm" x="157" y="593.0" width="32" height="30"/><use href="#exc" x="133" y="636" width="9" height="15"/><use href="#cb" x="158" y="631" width="26" height="25"/><use href="#iprt" x="194" y="629.0" width="33" height="30"/><use href="#exc" x="133" y="672" width="9" height="15"/><use href="#cb" x="158" y="667" width="26" height="25"/><use href="#iprt" x="194" y="665.0" width="33" height="30"/><use href="#exc" x="133" y="708" width="9" height="15"/><use href="#cb" x="158" y="703" width="26" height="25"/><use href="#iprt" x="194" y="701.0" width="33" height="30"/><use href="#exc" x="133" y="744" width="9" height="15"/><use href="#cb" x="158" y="739" width="26" height="25"/><use href="#iprt" x="194" y="737.0" width="33" height="30"/><use href="#exc" x="133" y="780" width="9" height="15"/><use href="#cb" x="158" y="775" width="26" height="25"/><use href="#iprt" x="194" y="773.0" width="33" height="30"/><use href="#exc" x="133" y="816" width="9" height="15"/><use href="#cb" x="158" y="811" width="26" height="25"/><use href="#iprt" x="194" y="809.0" width="33" height="30"/><use href="#exc" x="133" y="852" width="9" height="15"/><use href="#cb" x="158" y="847" width="26" height="25"/><use href="#iprt" x="194" y="845.0" width="33" height="30"/><use href="#exo" x="95" y="891" width="14" height="14"/><use href="#cb" x="122" y="883" width="26" height="25"/><use href="#iasm" x="157" y="881.0" width="32" height="30"/><use href="#exc" x="133" y="924" width="9" height="15"/><use href="#cb" x="158" y="919" width="26" height="25"/><use href="#iprt" x="194" y="917.0" width="33" height="30"/><use href="#exc" x="133" y="960" width="9" height="15"/><use href="#cb" x="158" y="955" width="26" height="25"/><use href="#iprt" x="194" y="953.0" width="33" height="30"/><use href="#exc" x="133" y="996" width="9" height="15"/><use href="#cb" x="158" y="991" width="26" height="25"/><use href="#iprt" x="194" y="989.0" width="33" height="30"/><use href="#exc" x="133" y="1032" width="9" height="15"/><use href="#cb" x="158" y="1027" width="26" height="25"/><use href="#iprt" x="194" y="1025.0" width="33" height="30"/><use href="#exc" x="133" y="1068" width="9" height="15"/><use href="#cb" x="158" y="1063" width="26" height="25"/><use href="#iprt" x="194" y="1061.0" width="33" height="30"/><use href="#exc" x="133" y="1104" width="9" height="15"/><use href="#cb" x="158" y="1099" width="26" height="25"/><use href="#iprt" x="194" y="1097.0" width="33" height="30"/><use href="#exc" x="133" y="1140" width="9" height="15"/><use href="#cb" x="158" y="1135" width="26" height="25"/><use href="#iprt" x="194" y="1133.0" width="33" height="30"/><use href="#exo" x="95" y="1179" width="14" height="14"/><use href="#cb" x="122" y="1171" width="26" height="25"/><use href="#iasm" x="157" y="1169.0" width="32" height="30"/><use href="#exc" x="133" y="1212" width="9" height="15"/><use href="#cb" x="158" y="1207" width="26" height="25"/><use href="#iprt" x="194" y="1205.0" width="33" height="30"/><use href="#exc" x="133" y="1248" width="9" height="15"/><use href="#cb" x="158" y="1243" width="26" height="25"/><use href="#iprt" x="194" y="1241.0" width="33" height="30"/><use href="#exc" x="133" y="1284" width="9" height="15"/><use href="#cb" x="158" y="1279" width="26" height="25"/><use href="#iprt" x="194" y="1277.0" width="33" height="30"/><use href="#exc" x="133" y="1320" width="9" height="15"/><use href="#cb" x="158" y="1315" width="26" height="25"/><use href="#iprt" x="194" y="1313.0" width="33" height="30"/><use href="#exc" x="133" y="1356" width="9" height="15"/><use href="#cb" x="158" y="1351" width="26" height="25"/><use href="#iprt" x="194" y="1349.0" width="33" height="30"/><use href="#exc" x="133" y="1392" width="9" height="15"/><use href="#cb" x="158" y="1387" width="26" height="25"/><use href="#iprt" x="194" y="1385.0" width="33" height="30"/><use href="#exc" x="133" y="1428" width="9" height="15"/><use href="#cb" x="158" y="1423" width="26" height="25"/><use href="#iprt" x="194" y="1421.0" width="33" height="30"/><use href="#exo" x="95" y="1467" width="14" height="14"/><use href="#cb" x="122" y="1459" width="26" height="25"/><use href="#iasm" x="157" y="1457.0" width="32" height="30"/><use href="#exc" x="133" y="1500" width="9" height="15"/><use href="#cb" x="158" y="1495" width="26" height="25"/><use href="#iprt" x="194" y="1493.0" width="33" height="30"/><use href="#exc" x="133" y="1536" width="9" height="15"/><use href="#cb" x="158" y="1531" width="26" height="25"/><use href="#iprt" x="194" y="1529.0" width="33" height="30"/><use href="#exc" x="133" y="1572" width="9" height="15"/><use href="#cb" x="158" y="1567" width="26" height="25"/><use href="#iprt" x="194" y="1565.0" width="33" height="30"/><use href="#exc" x="133" y="1608" width="9" height="15"/><use href="#cb" x="158" y="1603" width="26" height="25"/><use href="#iprt" x="194" y="1601.0" width="33" height="30"/><use href="#exc" x="133" y="1644" width="9" height="15"/><use href="#cb" x="158" y="1639" width="26" height="25"/><use href="#iprt" x="194" y="1637.0" width="33" height="30"/><use href="#exc" x="133" y="1680" width="9" height="15"/><use href="#cb" x="158" y="1675" width="26" height="25"/><use href="#iprt" x="194" y="1673.0" width="33" height="30"/><use href="#exc" x="133" y="1716" width="9" height="15"/><use href="#cb" x="158" y="1711" width="26" height="25"/><use href="#iprt" x="194" y="1709.0" width="33" height="30"/><use href="#cb" x="50" y="1747" width="26" height="25"/><use href="#ifold" x="86" y="1747" width="29" height="26"/></svg>
<div class="r" style="left:14px;top:1984px;width:186px;height:54px;background:#D9D9D9;"></div>
<svg class="r" style="left:24px;top:2000px;" width="34" height="32" viewBox="0 0 34 32"><rect x="1" y="1" width="10" height="9" fill="#333"/><rect x="3" y="3" width="4" height="3" fill="#9a9a7a"/><path d="M11 6H19V26H26M19 6H26M19 16H26" fill="none" stroke="#333" stroke-width="2.4"/><rect x="25" y="3" width="6" height="5" rx="1.5" fill="#555"/><rect x="25" y="13.5" width="6" height="5" rx="1.5" fill="#555"/><rect x="25" y="23.500" width="6" height="5" rx="1.5" fill="#555"/></svg>
<span class="t" style="left:65.4px;top:1997.3px;font-size:24px;line-height:30px;color:#444;letter-spacing:-0.16px;">Model Tree</span>
<svg class="r" style="left:210px;top:1999px;" width="34" height="32" viewBox="0 0 34 32"><path d="M2 28V5Q2 2 5 2H11Q13 2 14 5H28Q31 5 31 8V28Z" fill="url(#gG2)" stroke="#444" stroke-width="2.4" stroke-linejoin="round"/><path d="M4 16H29V26H4Z" fill="#c9c9c9" opacity=".6"/></svg>
<span class="t" style="left:251.0px;top:1997.3px;font-size:24px;line-height:30px;color:#444;letter-spacing:-1.23px;">Explore</span>
<div class="r" style="left:548px;top:372px;width:208px;height:46px;background:#666;"></div>
<span class="t" style="left:572.5px;top:380.7px;font-size:24px;line-height:30px;color:#fff;letter-spacing:-0.12px;">Original.stp</span>
<svg class="r" style="left:720px;top:389px;" width="19" height="17" viewBox="0 0 19 17"><path d="M2 2L15.500 14M15.500 2L2 14" stroke="#fff" stroke-width="2.8"/></svg>
<div class="r" style="left:548px;top:418px;width:2551px;height:4px;background:#666;"></div>
<div class="r" style="left:548px;top:422px;width:2551px;height:1621px;background:#ADADAD;"></div>
<div class="r" style="left:551px;top:422px;width:2548px;height:2px;background:#C4C4C4;"></div>
<div class="r" style="left:551px;top:424px;width:2548px;height:1616px;background:#F6F6F6;"></div>
<svg class="r" style="left:3088px;top:384px;" width="11" height="12" viewBox="0 0 11 12"><path d="M4 3H14L9 11Z" fill="#333"/></svg>
<svg class="r" style="left:554px;top:426px;" width="2545" height="1611" viewBox="554 426 2545 1611"><defs>
<linearGradient id="bgL" x1="0" y1="0" x2="0" y2="1"><stop offset="0" stop-color="#2f4f4f"/><stop offset="0.25" stop-color="#365f6e"/><stop offset="0.5" stop-color="#3d6e8c"/><stop offset="0.7" stop-color="#4279a2"/><stop offset="0.85" stop-color="#447ead"/><stop offset="1" stop-color="#4682b4"/></linearGradient>
<linearGradient id="bgR" x1="0" y1="0" x2="0" y2="1"><stop offset="0" stop-color="#2f4f4f"/><stop offset="0.25" stop-color="#32555a"/><stop offset="0.5" stop-color="#365e6d"/><stop offset="0.75" stop-color="#3e7090"/><stop offset="0.9" stop-color="#437ba6"/><stop offset="1" stop-color="#4682b4"/></linearGradient>
<linearGradient id="bgM" x1="0" y1="0" x2="1" y2="0"><stop offset="0" stop-color="#000"/><stop offset="1" stop-color="#fff"/></linearGradient>
<mask id="mR" maskUnits="userSpaceOnUse" x="554" y="426" width="2545" height="1611"><rect x="554" y="426" width="2545" height="1611" fill="url(#bgM)"/></mask>
</defs>
<rect x="554" y="426" width="2545" height="1611" fill="url(#bgL)"/>
<rect x="554" y="426" width="2545" height="1611" fill="url(#bgR)" mask="url(#mR)"/><defs><linearGradient id="gHole" x1="0" y1="0" x2="1" y2="1"><stop offset="0" stop-color="#3a3b3d"/><stop offset=".3" stop-color="#8ea4d2"/><stop offset=".5" stop-color="#dfe8f8"/><stop offset=".62" stop-color="#8ea4d2"/><stop offset="1" stop-color="#5a6478"/></linearGradient><linearGradient id="gV" gradientUnits="objectBoundingBox" x1="0" y1="0" x2="1" y2="0"><stop offset="0" stop-color="#33353a"/><stop offset=".145" stop-color="#3e4043"/><stop offset=".146" stop-color="#454649"/><stop offset=".5" stop-color="#565759"/><stop offset="1" stop-color="#656668"/></linearGradient>
<linearGradient id="gT" x1="0" y1="0" x2="1" y2="0"><stop offset="0" stop-color="#3a3c40"/><stop offset=".5" stop-color="#55565a"/><stop offset="1" stop-color="#68696c"/></linearGradient>
<linearGradient id="gPin" x1="0" y1="0" x2="1" y2="1"><stop offset="0" stop-color="#2c2d2f"/><stop offset=".22" stop-color="#4a4c52"/><stop offset=".36" stop-color="#a9bce4"/><stop offset=".46" stop-color="#8aa0d0"/><stop offset=".58" stop-color="#b8c8ea"/><stop offset=".68" stop-color="#8fa3cc"/><stop offset=".8" stop-color="#e8eef8"/><stop offset="1" stop-color="#9aa9c8"/></linearGradient><linearGradient id="gHoC" x1=".75" y1="0" x2=".3" y2="1"><stop offset="0" stop-color="#252627"/><stop offset=".35" stop-color="#77797d"/><stop offset=".55" stop-color="#c9ccc8"/><stop offset=".7" stop-color="#ffffff"/><stop offset=".85" stop-color="#9fb2da"/><stop offset="1" stop-color="#8fa1c8"/></linearGradient>
<linearGradient id="gHoB" x1=".72" y1="0" x2=".28" y2="1"><stop offset="0" stop-color="#2a2b2c"/><stop offset=".2" stop-color="#5e6064"/><stop offset=".3" stop-color="#9a9488"/><stop offset=".34" stop-color="#a9bcd8"/><stop offset=".42" stop-color="#7f9ad0"/><stop offset=".52" stop-color="#86a0d4"/><stop offset=".58" stop-color="#a6b8e0"/><stop offset=".68" stop-color="#8497c6"/><stop offset=".8" stop-color="#8f9fc6"/><stop offset="1" stop-color="#9aa8c8"/></linearGradient><linearGradient id="ag0" gradientUnits="userSpaceOnUse" x1="1057.9" y1="893.2" x2="836.1" y2="1336.8"><stop offset="0" stop-color="#a9b3d0"/><stop offset="0.1" stop-color="#a5b0cf"/><stop offset="0.11" stop-color="#8f9cc4"/><stop offset="0.27" stop-color="#8f9cc4"/><stop offset="0.31" stop-color="#a5b4d8"/><stop offset="0.35" stop-color="#7f9bcb"/><stop offset="0.41" stop-color="#7f9bcb"/><stop offset="0.43" stop-color="#9fb5dc"/><stop offset="0.47" stop-color="#7a9ad0"/><stop offset="0.5" stop-color="#7a9ad0"/><stop offset="0.53" stop-color="#a5b5c5"/><stop offset="0.6" stop-color="#b2bdc2"/><stop offset="0.625" stop-color="#a09282"/><stop offset="0.66" stop-color="#6a6b6d"/><stop offset="0.72" stop-color="#454648"/><stop offset="0.82" stop-color="#2a2b2c"/><stop offset="0.93" stop-color="#28292a"/><stop offset="1" stop-color="#3e3f41"/></linearGradient><linearGradient id="ag1" gradientUnits="userSpaceOnUse" x1="996.2" y1="1016.6" x2="897.8" y2="1213.4"><stop offset="0" stop-color="#a9b3d0"/><stop offset="0.1" stop-color="#a5b0cf"/><stop offset="0.11" stop-color="#8f9cc4"/><stop offset="0.27" stop-color="#8f9cc4"/><stop offset="0.31" stop-color="#a5b4d8"/><stop offset="0.35" stop-color="#7f9bcb"/><stop offset="0.41" stop-color="#7f9bcb"/><stop offset="0.43" stop-color="#9fb5dc"/><stop offset="0.47" stop-color="#7a9ad0"/><stop offset="0.5" stop-color="#7a9ad0"/><stop offset="0.53" stop-color="#a5b5c5"/><stop offset="0.6" stop-color="#b2bdc2"/><stop offset="0.625" stop-color="#a09282"/><stop offset="0.66" stop-color="#6a6b6d"/><stop offset="0.72" stop-color="#454648"/><stop offset="0.82" stop-color="#2a2b2c"/><stop offset="0.93" stop-color="#28292a"/><stop offset="1" stop-color="#3e3f41"/></linearGradient><linearGradient id="ag2" gradientUnits="userSpaceOnUse" x1="1073.1" y1="862.8" x2="820.9" y2="1367.2"><stop offset="0" stop-color="#a9b3d0"/><stop offset="0.1" stop-color="#a5b0cf"/><stop offset="0.11" stop-color="#8f9cc4"/><stop offset="0.27" stop-color="#8f9cc4"/><stop offset="0.31" stop-color="#a5b4d8"/><stop offset="0.35" stop-color="#7f9bcb"/><stop offset="0.41" stop-color="#7f9bcb"/><stop offset="0.43" stop-color="#9fb5dc"/><stop offset="0.47" stop-color="#7a9ad0"/><stop offset="0.5" stop-color="#7a9ad0"/><stop offset="0.53" stop-color="#a5b5c5"/><stop offset="0.6" stop-color="#b2bdc2"/><stop offset="0.625" stop-color="#a09282"/><stop offset="0.66" stop-color="#6a6b6d"/><stop offset="0.72" stop-color="#454648"/><stop offset="0.82" stop-color="#2a2b2c"/><stop offset="0.93" stop-color="#28292a"/><stop offset="1" stop-color="#3e3f41"/></linearGradient><linearGradient id="ag3" gradientUnits="userSpaceOnUse" x1="1004.2" y1="1133.0" x2="889.8" y2="1362.0"><stop offset="0" stop-color="#a9b3d0"/><stop offset="0.1" stop-color="#a5b0cf"/><stop offset="0.11" stop-color="#8f9cc4"/><stop offset="0.27" stop-color="#8f9cc4"/><stop offset="0.31" stop-color="#a5b4d8"/><stop offset="0.35" stop-color="#7f9bcb"/><stop offset="0.41" stop-color="#7f9bcb"/><stop offset="0.43" stop-color="#9fb5dc"/><stop offset="0.47" stop-color="#7a9ad0"/><stop offset="0.5" stop-color="#7a9ad0"/><stop offset="0.53" stop-color="#a5b5c5"/><stop offset="0.6" stop-color="#b2bdc2"/><stop offset="0.625" stop-color="#a09282"/><stop offset="0.66" stop-color="#6a6b6d"/><stop offset="0.72" stop-color="#454648"/><stop offset="0.82" stop-color="#2a2b2c"/><stop offset="0.93" stop-color="#28292a"/><stop offset="1" stop-color="#3e3f41"/></linearGradient><linearGradient id="ag4" gradientUnits="userSpaceOnUse" x1="1004.2" y1="868.0" x2="889.8" y2="1097.0"><stop offset="0" stop-color="#a9b3d0"/><stop offset="0.1" stop-color="#a5b0cf"/><stop offset="0.11" stop-color="#8f9cc4"/><stop offset="0.27" stop-color="#8f9cc4"/><stop offset="0.31" stop-color="#a5b4d8"/><stop offset="0.35" stop-color="#7f9bcb"/><stop offset="0.41" stop-color="#7f9bcb"/><stop offset="0.43" stop-color="#9fb5dc"/><stop offset="0.47" stop-color="#7a9ad0"/><stop offset="0.5" stop-color="#7a9ad0"/><stop offset="0.53" stop-color="#a5b5c5"/><stop offset="0.6" stop-color="#b2bdc2"/><stop offset="0.625" stop-color="#a09282"/><stop offset="0.66" stop-color="#6a6b6d"/><stop offset="0.72" stop-color="#454648"/><stop offset="0.82" stop-color="#2a2b2c"/><stop offset="0.93" stop-color="#28292a"/><stop offset="1" stop-color="#3e3f41"/></linearGradient><linearGradient id="ag5" gradientUnits="userSpaceOnUse" x1="1006.9" y1="995.1" x2="887.1" y2="1234.9"><stop offset="0" stop-color="#a9b3d0"/><stop offset="0.1" stop-color="#a5b0cf"/><stop offset="0.11" stop-color="#8f9cc4"/><stop offset="0.27" stop-color="#8f9cc4"/><stop offset="0.31" stop-color="#a5b4d8"/><stop offset="0.35" stop-color="#7f9bcb"/><stop offset="0.41" stop-color="#7f9bcb"/><stop offset="0.43" stop-color="#9fb5dc"/><stop offset="0.47" stop-color="#7a9ad0"/><stop offset="0.5" stop-color="#7a9ad0"/><stop offset="0.53" stop-color="#a5b5c5"/><stop offset="0.6" stop-color="#b2bdc2"/><stop offset="0.625" stop-color="#a09282"/><stop offset="0.66" stop-color="#6a6b6d"/><stop offset="0.72" stop-color="#454648"/><stop offset="0.82" stop-color="#2a2b2c"/><stop offset="0.93" stop-color="#28292a"/><stop offset="1" stop-color="#3e3f41"/></linearGradient><linearGradient id="ag6" gradientUnits="userSpaceOnUse" x1="996.6" y1="1015.8" x2="897.4" y2="1214.2"><stop offset="0" stop-color="#a9b3d0"/><stop offset="0.1" stop-color="#a5b0cf"/><stop offset="0.11" stop-color="#8f9cc4"/><stop offset="0.27" stop-color="#8f9cc4"/><stop offset="0.31" stop-color="#a5b4d8"/><stop offset="0.35" stop-color="#7f9bcb"/><stop offset="0.41" stop-color="#7f9bcb"/><stop offset="0.43" stop-color="#9fb5dc"/><stop offset="0.47" stop-color="#7a9ad0"/><stop offset="0.5" stop-color="#7a9ad0"/><stop offset="0.53" stop-color="#a5b5c5"/><stop offset="0.6" stop-color="#b2bdc2"/><stop offset="0.625" stop-color="#a09282"/><stop offset="0.66" stop-color="#6a6b6d"/><stop offset="0.72" stop-color="#454648"/><stop offset="0.82" stop-color="#2a2b2c"/><stop offset="0.93" stop-color="#28292a"/><stop offset="1" stop-color="#3e3f41"/></linearGradient><linearGradient id="ag7" gradientUnits="userSpaceOnUse" x1="972.4" y1="1064.3" x2="921.6" y2="1165.7"><stop offset="0" stop-color="#a9b3d0"/><stop offset="0.1" stop-color="#a5b0cf"/><stop offset="0.11" stop-color="#8f9cc4"/><stop offset="0.27" stop-color="#8f9cc4"/><stop offset="0.31" stop-color="#a5b4d8"/><stop offset="0.35" stop-color="#7f9bcb"/><stop offset="0.41" stop-color="#7f9bcb"/><stop offset="0.43" stop-color="#9fb5dc"/><stop offset="0.47" stop-color="#7a9ad0"/><stop offset="0.5" stop-color="#7a9ad0"/><stop offset="0.53" stop-color="#a5b5c5"/><stop offset="0.6" stop-color="#b2bdc2"/><stop offset="0.625" stop-color="#a09282"/><stop offset="0.66" stop-color="#6a6b6d"/><stop offset="0.72" stop-color="#454648"/><stop offset="0.82" stop-color="#2a2b2c"/><stop offset="0.93" stop-color="#28292a"/><stop offset="1" stop-color="#3e3f41"/></linearGradient></defs><g><path d="M1021.8 875.1L1007.0 869.3L991.2 865.9L974.4 865.0L957.0 866.7L939.1 870.9L920.8 877.6L902.5 886.7L884.2 898.1L866.2 911.6L848.8 927.2L832.0 944.7L816.0 963.8L801.1 984.4L787.4 1006.2L775.1 1029.1L764.2 1052.6L755.0 1076.7L747.5 1100.9L741.7 1125.1L737.8 1149.1L735.9 1172.4L735.8 1194.9L737.6 1216.4L741.4 1236.5L747.0 1255.1L754.4 1272.0L763.5 1286.9L774.2 1299.8L786.4 1310.5L800.0 1318.8L836.1 1336.8L850.9 1342.7L866.8 1346.1L883.5 1346.9L900.9 1345.3L918.9 1341.1L937.1 1334.4L955.5 1325.3L973.7 1313.9L991.7 1300.3L1009.2 1284.7L1026.0 1267.3L1041.9 1248.1L1056.8 1227.5L1070.5 1205.7L1082.8 1182.9L1093.7 1159.4L1102.9 1135.3L1110.5 1111.0L1116.2 1086.8L1120.1 1062.9L1122.1 1039.6L1122.2 1017.0L1120.3 995.6L1116.6 975.5L1111.0 956.9L1103.6 940.0L1094.5 925.0L1083.7 912.1L1071.5 901.5L1057.9 893.2Z" fill="url(#ag0)" stroke="#101112" stroke-width="1.3" stroke-linejoin="round" /><path d="M910.9 882.2L947.0 900.2" fill="none" stroke="#101112" stroke-width="1.1" stroke-linejoin="round" /><path d="M1122.4 1027.3L1121.4 1005.3L1118.5 984.6L1113.8 965.2L1107.2 947.5L1098.9 931.7L1088.9 917.8L1077.3 906.1L1064.3 896.7L1050.1 889.7L1034.7 885.2L1018.3 883.1L1001.2 883.6L983.5 886.7L965.3 892.2L947.0 900.2L928.7 910.6L910.5 923.1L892.8 937.8L875.7 954.5L859.3 972.8L843.9 992.8L829.7 1014.1L816.7 1036.4L805.1 1059.7L795.1 1083.5L786.8 1107.7L780.2 1132.0L775.5 1156.1L772.6 1179.7L771.6 1202.7L772.6 1224.7L775.5 1245.4L780.2 1264.8L786.8 1282.5L795.1 1298.3L805.1 1312.2L816.7 1323.9L829.7 1333.3L843.9 1340.3L859.3 1344.8L875.7 1346.9L892.8 1346.4L910.5 1343.3L928.7 1337.8L947.0 1329.8L965.3 1319.4L983.5 1306.9L1001.2 1292.2L1018.3 1275.5L1034.7 1257.2L1050.1 1237.2L1064.3 1215.9L1077.3 1193.6L1088.9 1170.3L1098.9 1146.5L1107.2 1122.3L1113.8 1098.0L1118.5 1073.9L1121.4 1050.3Z" fill="#5a5b5d" stroke="#101112" stroke-width="1.3" stroke-linejoin="round" /><path d="M960.1 944.8L960.0 943.1L959.8 941.6L959.4 940.1L959.0 938.8L958.3 937.6L957.6 936.6L956.7 935.7L955.8 935.0L954.7 934.5L953.5 934.2L952.3 934.0L951.0 934.1L949.7 934.3L948.4 934.7L947.0 935.3L945.6 936.1L944.3 937.0L943.0 938.1L941.7 939.3L940.5 940.7L939.3 942.2L938.2 943.8L937.3 945.5L936.4 947.2L935.7 949.0L935.0 950.8L934.6 952.6L934.2 954.4L934.0 956.2L933.9 957.9L934.0 959.5L934.2 961.0L934.6 962.5L935.0 963.8L935.7 965.0L936.4 966.0L937.3 966.9L938.2 967.6L939.3 968.1L940.5 968.5L941.7 968.6L943.0 968.6L944.3 968.4L945.6 967.9L947.0 967.3L948.4 966.6L949.7 965.6L951.0 964.5L952.3 963.3L953.5 961.9L954.7 960.4L955.8 958.9L956.7 957.2L957.6 955.4L958.3 953.7L959.0 951.9L959.4 950.1L959.8 948.3L960.0 946.5Z" fill="url(#gHoB)" stroke="#101112" stroke-width="1.2" stroke-linejoin="round" /><path d="M874.2 1026.0L874.1 1024.4L873.9 1022.8L873.5 1021.4L873.0 1020.1L872.4 1018.9L871.7 1017.9L870.8 1017.0L869.8 1016.3L868.8 1015.8L867.6 1015.4L866.4 1015.3L865.1 1015.3L863.8 1015.5L862.5 1015.9L861.1 1016.5L859.7 1017.3L858.4 1018.3L857.1 1019.3L855.8 1020.6L854.6 1022.0L853.4 1023.4L852.3 1025.0L851.4 1026.7L850.5 1028.4L849.8 1030.2L849.1 1032.0L848.7 1033.8L848.3 1035.6L848.1 1037.4L848.0 1039.1L848.1 1040.7L848.3 1042.3L848.7 1043.7L849.1 1045.1L849.8 1046.2L850.5 1047.3L851.4 1048.1L852.3 1048.8L853.4 1049.4L854.6 1049.7L855.8 1049.9L857.1 1049.8L858.4 1049.6L859.7 1049.2L861.1 1048.6L862.5 1047.8L863.8 1046.9L865.1 1045.8L866.4 1044.5L867.6 1043.2L868.8 1041.7L869.8 1040.1L870.8 1038.4L871.7 1036.7L872.4 1034.9L873.0 1033.1L873.5 1031.3L873.9 1029.5L874.1 1027.7Z" fill="url(#gHoB)" stroke="#101112" stroke-width="1.2" stroke-linejoin="round" /><path d="M828.5 1145.8L828.4 1144.2L828.2 1142.7L827.8 1141.2L827.3 1139.9L826.7 1138.7L826.0 1137.7L825.1 1136.8L824.1 1136.1L823.1 1135.6L821.9 1135.2L820.7 1135.1L819.4 1135.1L818.1 1135.4L816.8 1135.8L815.4 1136.4L814.0 1137.1L812.7 1138.1L811.3 1139.2L810.1 1140.4L808.8 1141.8L807.7 1143.3L806.6 1144.9L805.7 1146.5L804.8 1148.3L804.1 1150.0L803.4 1151.8L802.9 1153.7L802.6 1155.4L802.4 1157.2L802.3 1158.9L802.4 1160.6L802.6 1162.1L802.9 1163.6L803.4 1164.9L804.1 1166.1L804.8 1167.1L805.7 1168.0L806.6 1168.7L807.7 1169.2L808.8 1169.5L810.1 1169.7L811.3 1169.6L812.7 1169.4L814.0 1169.0L815.4 1168.4L816.8 1167.6L818.1 1166.7L819.4 1165.6L820.7 1164.4L821.9 1163.0L823.1 1161.5L824.1 1159.9L825.1 1158.2L826.0 1156.5L826.7 1154.7L827.3 1152.9L827.8 1151.1L828.2 1149.3L828.4 1147.6Z" fill="url(#gHoB)" stroke="#101112" stroke-width="1.2" stroke-linejoin="round" /><path d="M844.3 1248.2L844.3 1246.5L844.1 1245.0L843.7 1243.5L843.2 1242.2L842.6 1241.0L841.8 1240.0L841.0 1239.1L840.0 1238.4L839.0 1237.9L837.8 1237.6L836.6 1237.4L835.3 1237.4L834.0 1237.7L832.6 1238.1L831.3 1238.7L829.9 1239.5L828.5 1240.4L827.2 1241.5L825.9 1242.7L824.7 1244.1L823.6 1245.6L822.5 1247.2L821.5 1248.8L820.7 1250.6L819.9 1252.4L819.3 1254.2L818.8 1256.0L818.5 1257.8L818.3 1259.5L818.2 1261.2L818.3 1262.9L818.5 1264.4L818.8 1265.9L819.3 1267.2L819.9 1268.4L820.7 1269.4L821.5 1270.3L822.5 1271.0L823.6 1271.5L824.7 1271.9L825.9 1272.0L827.2 1272.0L828.5 1271.7L829.9 1271.3L831.3 1270.7L832.6 1270.0L834.0 1269.0L835.3 1267.9L836.6 1266.7L837.8 1265.3L839.0 1263.8L840.0 1262.2L841.0 1260.6L841.8 1258.8L842.6 1257.1L843.2 1255.2L843.7 1253.4L844.1 1251.6L844.3 1249.9Z" fill="url(#gHoB)" stroke="#101112" stroke-width="1.2" stroke-linejoin="round" /><path d="M914.4 1285.1L914.3 1283.5L914.1 1281.9L913.7 1280.5L913.2 1279.2L912.6 1278.0L911.9 1277.0L911.0 1276.1L910.0 1275.4L909.0 1274.9L907.8 1274.5L906.6 1274.4L905.3 1274.4L904.0 1274.6L902.7 1275.0L901.3 1275.6L899.9 1276.4L898.6 1277.4L897.2 1278.4L896.0 1279.7L894.8 1281.1L893.6 1282.5L892.5 1284.1L891.6 1285.8L890.7 1287.5L890.0 1289.3L889.3 1291.1L888.8 1292.9L888.5 1294.7L888.3 1296.5L888.2 1298.2L888.3 1299.8L888.5 1301.4L888.8 1302.8L889.3 1304.2L890.0 1305.3L890.7 1306.4L891.6 1307.2L892.5 1307.9L893.6 1308.5L894.8 1308.8L896.0 1309.0L897.2 1308.9L898.6 1308.7L899.9 1308.3L901.3 1307.7L902.7 1306.9L904.0 1306.0L905.3 1304.9L906.6 1303.6L907.8 1302.3L909.0 1300.8L910.0 1299.2L911.0 1297.5L911.9 1295.8L912.6 1294.0L913.2 1292.2L913.7 1290.4L914.1 1288.6L914.3 1286.8Z" fill="url(#gHoB)" stroke="#101112" stroke-width="1.2" stroke-linejoin="round" /><path d="M1005.8 1239.4L1005.7 1237.8L1005.5 1236.2L1005.2 1234.8L1004.7 1233.5L1004.0 1232.3L1003.3 1231.2L1002.4 1230.4L1001.5 1229.7L1000.4 1229.1L999.2 1228.8L998.0 1228.7L996.8 1228.7L995.4 1228.9L994.1 1229.3L992.7 1229.9L991.3 1230.7L990.0 1231.6L988.7 1232.7L987.4 1234.0L986.2 1235.3L985.0 1236.8L984.0 1238.4L983.0 1240.1L982.1 1241.8L981.4 1243.6L980.8 1245.4L980.3 1247.2L979.9 1249.0L979.7 1250.8L979.6 1252.5L979.7 1254.1L979.9 1255.7L980.3 1257.1L980.8 1258.4L981.4 1259.6L982.1 1260.7L983.0 1261.5L984.0 1262.2L985.0 1262.8L986.2 1263.1L987.4 1263.3L988.7 1263.2L990.0 1263.0L991.3 1262.6L992.7 1262.0L994.1 1261.2L995.4 1260.3L996.8 1259.2L998.0 1257.9L999.2 1256.6L1000.4 1255.1L1001.5 1253.5L1002.4 1251.8L1003.3 1250.1L1004.0 1248.3L1004.7 1246.5L1005.2 1244.7L1005.5 1242.9L1005.7 1241.1Z" fill="url(#gHoB)" stroke="#101112" stroke-width="1.2" stroke-linejoin="round" /><path d="M1075.8 1132.4L1075.7 1130.8L1075.5 1129.2L1075.2 1127.8L1074.7 1126.5L1074.1 1125.3L1073.3 1124.3L1072.5 1123.4L1071.5 1122.7L1070.4 1122.2L1069.3 1121.8L1068.1 1121.7L1066.8 1121.7L1065.5 1121.9L1064.1 1122.4L1062.7 1122.9L1061.4 1123.7L1060.0 1124.7L1058.7 1125.8L1057.4 1127.0L1056.2 1128.4L1055.0 1129.9L1054.0 1131.4L1053.0 1133.1L1052.2 1134.8L1051.4 1136.6L1050.8 1138.4L1050.3 1140.2L1049.9 1142.0L1049.7 1143.8L1049.7 1145.5L1049.7 1147.2L1049.9 1148.7L1050.3 1150.1L1050.8 1151.5L1051.4 1152.6L1052.2 1153.7L1053.0 1154.6L1054.0 1155.3L1055.0 1155.8L1056.2 1156.1L1057.4 1156.3L1058.7 1156.2L1060.0 1156.0L1061.4 1155.6L1062.7 1155.0L1064.1 1154.2L1065.5 1153.3L1066.8 1152.2L1068.1 1150.9L1069.3 1149.6L1070.4 1148.1L1071.5 1146.5L1072.5 1144.8L1073.3 1143.1L1074.1 1141.3L1074.7 1139.5L1075.2 1137.7L1075.5 1135.9L1075.7 1134.1Z" fill="url(#gHoB)" stroke="#101112" stroke-width="1.2" stroke-linejoin="round" /><path d="M1091.7 1014.2L1091.6 1012.6L1091.4 1011.0L1091.1 1009.6L1090.6 1008.3L1089.9 1007.1L1089.2 1006.1L1088.3 1005.2L1087.4 1004.5L1086.3 1004.0L1085.2 1003.6L1083.9 1003.5L1082.7 1003.5L1081.3 1003.7L1080.0 1004.2L1078.6 1004.7L1077.2 1005.5L1075.9 1006.5L1074.6 1007.6L1073.3 1008.8L1072.1 1010.2L1070.9 1011.7L1069.9 1013.2L1068.9 1014.9L1068.0 1016.6L1067.3 1018.4L1066.7 1020.2L1066.2 1022.0L1065.8 1023.8L1065.6 1025.6L1065.5 1027.3L1065.6 1029.0L1065.8 1030.5L1066.2 1031.9L1066.7 1033.3L1067.3 1034.4L1068.0 1035.5L1068.9 1036.4L1069.9 1037.1L1070.9 1037.6L1072.1 1037.9L1073.3 1038.1L1074.6 1038.0L1075.9 1037.8L1077.2 1037.4L1078.6 1036.8L1080.0 1036.0L1081.3 1035.1L1082.7 1034.0L1083.9 1032.7L1085.2 1031.4L1086.3 1029.9L1087.4 1028.3L1088.3 1026.6L1089.2 1024.9L1089.9 1023.1L1090.6 1021.3L1091.1 1019.5L1091.4 1017.7L1091.6 1015.9Z" fill="url(#gHoB)" stroke="#101112" stroke-width="1.2" stroke-linejoin="round" /><path d="M1046.0 940.1L1045.9 938.5L1045.7 936.9L1045.3 935.5L1044.9 934.2L1044.2 933.0L1043.5 932.0L1042.6 931.1L1041.7 930.4L1040.6 929.9L1039.4 929.5L1038.2 929.4L1036.9 929.4L1035.6 929.6L1034.3 930.0L1032.9 930.6L1031.5 931.4L1030.2 932.4L1028.9 933.4L1027.6 934.7L1026.4 936.1L1025.2 937.5L1024.2 939.1L1023.2 940.8L1022.3 942.5L1021.6 944.3L1021.0 946.1L1020.5 947.9L1020.1 949.7L1019.9 951.5L1019.8 953.2L1019.9 954.8L1020.1 956.4L1020.5 957.8L1021.0 959.2L1021.6 960.3L1022.3 961.4L1023.2 962.2L1024.2 962.9L1025.2 963.5L1026.4 963.8L1027.6 964.0L1028.9 963.9L1030.2 963.7L1031.5 963.3L1032.9 962.7L1034.3 961.9L1035.6 961.0L1036.9 959.9L1038.2 958.6L1039.4 957.3L1040.6 955.8L1041.7 954.2L1042.6 952.5L1043.5 950.8L1044.2 949.0L1044.9 947.2L1045.3 945.4L1045.7 943.6L1045.9 941.8Z" fill="url(#gHoB)" stroke="#101112" stroke-width="1.2" stroke-linejoin="round" /><path d="M900.7 1039.9L892.6 1050.4L885.0 1061.7L878.2 1073.5L872.1 1085.8L866.8 1098.4L862.4 1111.2L858.9 1124.0L856.4 1136.7L854.9 1149.2L854.4 1161.3L854.9 1172.9L856.4 1183.9L858.9 1194.1L862.4 1203.5L866.8 1211.8L872.1 1219.2L878.2 1225.3L885.0 1230.3L892.6 1234.0L900.7 1236.4L909.3 1237.5L918.4 1237.2L927.7 1235.6L937.3 1232.7L947.0 1228.4L956.7 1223.0L966.3 1216.3L975.6 1208.6L984.7 1199.8L993.3 1190.1L1001.4 1179.6L1009.0 1168.3L1015.8 1156.5L1021.9 1144.2L1027.2 1131.6" fill="none" stroke="#c8d4ee" stroke-width="2.2" stroke-linejoin="round" /><path d="M1041.0 1068.0L1040.5 1056.2L1039.0 1045.1L1036.4 1034.7L1032.9 1025.2L1028.4 1016.7L1023.1 1009.3L1016.9 1003.0L1009.9 997.9L1002.3 994.2L994.0 991.7L985.3 990.7L976.1 990.9L966.6 992.6L956.8 995.5L947.0 999.8L937.2 1005.4L927.4 1012.1L917.9 1020.0L908.7 1028.9L900.0 1038.8L891.7 1049.5L884.1 1060.9L877.1 1072.9L870.9 1085.3L865.6 1098.1L861.1 1111.1L857.6 1124.1L855.0 1137.0L853.5 1149.7L853.0 1162.0L853.5 1173.8L855.0 1184.9L857.6 1195.3L861.1 1204.8L865.6 1213.3L870.9 1220.7L877.1 1227.0L884.1 1232.1L891.7 1235.8L900.0 1238.3L908.7 1239.3L917.9 1239.1L927.4 1237.4L937.2 1234.5L947.0 1230.2L956.8 1224.6L966.6 1217.9L976.1 1210.0L985.3 1201.1L994.0 1191.2L1002.3 1180.5L1009.9 1169.1L1016.9 1157.1L1023.1 1144.7L1028.4 1131.9L1032.9 1118.9L1036.4 1105.9L1039.0 1093.0L1040.5 1080.3L1041.0 1068.0" fill="none" stroke="#101112" stroke-width="1.1" stroke-linejoin="round" /><path d="M1041.8 1071.9L1041.3 1060.5L1039.8 1049.8L1037.3 1039.8L1033.9 1030.7L1029.6 1022.5L1024.5 1015.4L1018.5 1009.3L1011.8 1004.5L1004.4 1000.8L996.5 998.5L988.1 997.4L979.2 997.7L970.1 999.3L960.7 1002.1L951.2 1006.3L941.8 1011.6L932.4 1018.1L923.3 1025.7L914.4 1034.3L906.0 1043.7L898.0 1054.0L890.7 1065.0L884.0 1076.6L878.0 1088.6L872.9 1100.9L868.6 1113.4L865.2 1125.9L862.7 1138.3L861.2 1150.5L860.7 1162.4L861.2 1173.7L862.7 1184.4L865.2 1194.4L868.6 1203.6L872.9 1211.7L878.0 1218.9L884.0 1224.9L890.7 1229.8L898.0 1233.4L906.0 1235.7L914.4 1236.8L923.3 1236.5L932.4 1235.0L941.8 1232.1L951.2 1228.0L960.7 1222.6L970.1 1216.1L979.2 1208.6L988.1 1200.0L996.5 1190.5L1004.4 1180.2L1011.8 1169.2L1018.5 1157.7L1024.5 1145.7L1029.6 1133.4L1033.9 1120.9L1037.3 1108.3L1039.8 1095.9L1041.3 1083.7L1041.8 1071.9" fill="none" stroke="#101112" stroke-width="1.1" stroke-linejoin="round" /><path d="M996.2 1016.6L989.6 1014.0L982.6 1012.5L975.2 1012.1L967.4 1012.9L959.5 1014.7L951.4 1017.7L943.2 1021.7L935.1 1026.8L927.2 1032.8L919.4 1039.7L912.0 1047.5L904.9 1055.9L898.3 1065.1L892.2 1074.8L886.7 1084.9L881.9 1095.3L877.8 1106.0L874.5 1116.8L871.9 1127.5L870.2 1138.1L869.3 1148.5L869.3 1158.4L870.1 1168.0L871.8 1176.9L874.3 1185.1L877.6 1192.6L881.6 1199.3L886.4 1205.0L891.8 1209.7L897.8 1213.4L992.6 1260.8L999.1 1263.4L1006.2 1264.9L1013.6 1265.3L1021.3 1264.5L1029.3 1262.6L1037.4 1259.7L1045.5 1255.6L1053.6 1250.6L1061.6 1244.6L1069.3 1237.7L1076.8 1229.9L1083.9 1221.4L1090.5 1212.3L1096.5 1202.6L1102.0 1192.5L1106.8 1182.0L1110.9 1171.4L1114.3 1160.6L1116.8 1149.9L1118.5 1139.3L1119.4 1128.9L1119.4 1118.9L1118.6 1109.4L1117.0 1100.5L1114.5 1092.2L1111.2 1084.7L1107.2 1078.1L1102.4 1072.4L1097.0 1067.7L1090.9 1064.0Z" fill="url(#ag1)" stroke="#101112" stroke-width="1.3" stroke-linejoin="round" /><path d="M947.0 1019.7L1041.8 1067.1" fill="none" stroke="#101112" stroke-width="1.1" stroke-linejoin="round" /><path d="M1201.0 935.8L1187.9 923.1L1173.2 913.0L1157.1 905.5L1139.8 900.7L1121.4 898.7L1102.3 899.4L1082.5 902.9L1062.2 909.2L1041.8 918.2L1021.3 929.7L1001.1 943.6L981.2 959.9L962.1 978.3L943.7 998.7L926.4 1020.8L910.3 1044.4L895.7 1069.2L882.5 1095.0L882.5 1095.0L954.7 1368.8L954.7 1368.8L957.7 1378.1L961.7 1386.6L966.5 1394.0L972.0 1400.4L978.4 1405.7L985.4 1409.8L993.0 1412.7L1001.1 1414.2L1009.7 1414.6L1018.6 1413.6L1027.8 1411.4L1037.1 1407.9L1046.4 1403.2L1055.7 1397.4L1064.9 1390.5L1073.8 1382.5L1082.4 1373.6L1090.5 1363.9L1098.1 1353.4L1105.1 1342.3L1111.5 1330.7L1117.0 1318.7L1121.8 1306.5L1125.8 1294.1L1128.8 1281.8L1128.8 1281.8L1201.0 935.8Z" fill="none" stroke="#101112" stroke-width="1.3" stroke-linejoin="round" /><path d="M1167.9 910.1L1151.7 903.7L1134.4 899.8L1116.2 898.6L1097.3 900.0L1077.8 904.2L1057.9 910.9L1037.9 920.2L1017.8 931.9L998.1 945.9L978.8 962.2L960.1 980.4L942.2 1000.5L925.4 1022.3L909.7 1045.4L895.4 1069.7L882.5 1095.0L918.6 1113.1L931.4 1087.8L945.8 1063.4L961.4 1040.3L978.3 1018.5L996.1 998.4L1014.8 980.2L1034.1 963.9L1053.9 949.9L1073.9 938.2L1094.0 928.9L1113.8 922.2L1133.4 918.1L1152.3 916.6L1170.5 917.8L1187.8 921.7L1203.9 928.2Z" fill="url(#ag2)" stroke="#101112" stroke-width="1.1" stroke-linejoin="round" /><path d="M1041.8 918.2L1077.8 936.2" fill="none" stroke="#101112" stroke-width="1.1" stroke-linejoin="round" /><path d="M882.5 1095.0L954.7 1368.8L990.8 1386.8L918.6 1113.1Z" fill="#2a2b2b" stroke="#101112" stroke-width="1.2" stroke-linejoin="round" /><path d="M954.7 1368.8L957.7 1378.0L961.5 1386.3L966.1 1393.6L971.6 1400.0L977.7 1405.2L984.5 1409.4L1020.6 1427.4L1013.8 1423.3L1007.6 1418.0L1002.2 1411.7L997.6 1404.3L993.7 1396.0L990.8 1386.8Z" fill="url(#ag3)" stroke="#101112" stroke-width="1.1" stroke-linejoin="round" /><path d="M1237.1 953.8L1223.9 941.1L1209.2 931.0L1193.1 923.5L1175.8 918.7L1157.5 916.7L1138.3 917.4L1118.5 921.0L1098.3 927.2L1077.8 936.2L1057.4 947.7L1037.1 961.7L1017.3 978.0L998.1 996.4L979.8 1016.7L962.5 1038.8L946.4 1062.4L931.7 1087.2L918.6 1113.1L918.6 1113.1L990.8 1386.8L990.8 1386.8L993.8 1396.2L997.7 1404.6L1002.5 1412.1L1008.1 1418.5L1014.4 1423.7L1021.5 1427.8L1029.1 1430.7L1037.2 1432.3L1045.8 1432.6L1054.7 1431.6L1063.8 1429.4L1073.1 1426.0L1082.5 1421.3L1091.8 1415.4L1101.0 1408.5L1109.9 1400.6L1118.4 1391.7L1126.6 1381.9L1134.2 1371.5L1141.2 1360.4L1147.5 1348.8L1153.1 1336.8L1157.9 1324.5L1161.8 1312.2L1164.9 1299.8L1164.9 1299.8L1237.1 953.8Z" fill="#5a5b5d" stroke="#101112" stroke-width="1.3" stroke-linejoin="round" /><path d="M1201.9 1197.9V1447.3A26.5 13.25 0 0 0 1254.9 1447.3V1197.9Z" fill="url(#gT)" stroke="#101112" stroke-width="1.2"/><path d="M1191.7 1216.3L1202.5 1195.1L1204.2 1192.5L1207.0 1190.1L1210.7 1188.0L1215.2 1186.4L1220.2 1185.3L1225.7 1184.7L1231.2 1184.7L1236.6 1185.3L1241.7 1186.4L1246.2 1188.0L1249.9 1190.1L1252.6 1192.5L1254.4 1195.1L1254.9 1197.9L1254.4 1200.6L1252.6 1203.3L1249.9 1205.7L1246.2 1207.7L1241.7 1209.4L1236.6 1210.5Z" fill="#8f9bb5" stroke="#101112" stroke-width="1.2" stroke-linejoin="round" /><ellipse cx="1228.4" cy="1197.9" rx="13.5" ry="7" fill="#55575c" stroke="#101112" stroke-width="1.1"/><path d="M1201.9 1294.9A26.5 13.25 0 0 0 1254.9 1294.9" fill="none" stroke="#101112" stroke-width="1.1"/><path d="M1063.2 1399.0L1063.2 1537.5L1114.2 1565.8L1200.4 1522.6L1209.6 1499.0L1234.4 1443.3L1249.9 1305.6Z" fill="#5a5b5d" stroke="#101112" stroke-width="1.3" stroke-linejoin="round" /><path d="M1020.3 1516.0L1071.2 1544.3L1114.2 1565.8L1063.2 1537.5Z" fill="#2a2b2b" stroke="#101112" stroke-width="1.3" stroke-linejoin="round" /><path d="M1135.1 1198.4L1127.4 1195.4L1119.2 1193.6L1110.6 1193.2L1101.6 1194.1L1092.3 1196.2L1082.9 1199.7L1073.4 1204.4L1064.0 1210.3L1054.7 1217.3L1045.7 1225.3L1037.0 1234.3L1028.8 1244.2L1021.1 1254.8L1014.1 1266.1L1007.7 1277.9L1002.1 1290.0L997.3 1302.4L993.4 1315.0L990.5 1327.5L988.5 1339.8L987.4 1351.8L987.4 1363.5L988.4 1374.5L990.3 1384.9L993.2 1394.5L997.0 1403.2L1001.7 1411.0L1007.2 1417.6L1013.6 1423.1L1020.6 1427.4L1135.1 1484.7L1142.8 1487.7L1151.0 1489.5L1159.6 1489.9L1168.6 1489.0L1177.8 1486.9L1187.3 1483.4L1196.7 1478.7L1206.2 1472.8L1215.4 1465.8L1224.5 1457.8L1233.1 1448.8L1241.4 1438.9L1249.0 1428.3L1256.1 1417.0L1262.5 1405.2L1268.1 1393.1L1272.8 1380.7L1276.7 1368.1L1279.7 1355.6L1281.7 1343.3L1282.7 1331.2L1282.8 1319.6L1281.8 1308.6L1279.9 1298.2L1277.0 1288.6L1273.2 1279.9L1268.5 1272.1L1262.9 1265.5L1256.6 1260.0L1249.6 1255.7Z" fill="url(#ag3)" stroke="#101112" stroke-width="1.3" stroke-linejoin="round" /><path d="M1083.2 886.8L1083.2 1151.1L1126.2 1172.6L1126.2 908.3Z" fill="#3f4042" stroke="#101112" stroke-width="1.3" stroke-linejoin="round" /><path d="M1083.2 1151.1L1082.4 1158.5L1125.4 1180.0L1126.2 1172.6Z" fill="#545557" stroke="#545557" stroke-width="0.8" stroke-linejoin="round" /><path d="M1082.4 1158.5L1081.2 1166.0L1124.1 1187.5L1125.4 1180.0Z" fill="#68696b" stroke="#68696b" stroke-width="0.8" stroke-linejoin="round" /><path d="M1081.2 1166.0L1079.5 1173.8L1122.5 1195.3L1124.1 1187.5Z" fill="#9b8f80" stroke="#9b8f80" stroke-width="0.8" stroke-linejoin="round" /><path d="M1079.5 1173.8L1077.4 1181.7L1120.4 1203.2L1122.5 1195.3Z" fill="#b1bdc2" stroke="#b1bdc2" stroke-width="0.8" stroke-linejoin="round" /><path d="M1077.4 1181.7L1074.9 1189.9L1117.9 1211.4L1120.4 1203.2Z" fill="#acb9c3" stroke="#acb9c3" stroke-width="0.8" stroke-linejoin="round" /><path d="M1074.9 1189.9L1072.1 1198.3L1115.1 1219.7L1117.9 1211.4Z" fill="#a7b6c5" stroke="#a7b6c5" stroke-width="0.8" stroke-linejoin="round" /><path d="M1072.1 1198.3L1068.9 1206.8L1111.9 1228.3L1115.1 1219.7Z" fill="#92a9ca" stroke="#92a9ca" stroke-width="0.8" stroke-linejoin="round" /><path d="M1068.9 1206.8L1065.5 1215.4L1108.4 1236.9L1111.9 1228.3Z" fill="#7a9ad0" stroke="#7a9ad0" stroke-width="0.8" stroke-linejoin="round" /><path d="M1065.5 1215.4L1061.7 1224.3L1104.7 1245.8L1108.4 1236.9Z" fill="#7a9ad0" stroke="#7a9ad0" stroke-width="0.8" stroke-linejoin="round" /><path d="M1061.7 1224.3L1057.6 1233.2L1100.6 1254.7L1104.7 1245.8Z" fill="#82a0d2" stroke="#82a0d2" stroke-width="0.8" stroke-linejoin="round" /><path d="M1057.6 1233.2L1053.3 1242.3L1096.3 1263.8L1100.6 1254.7Z" fill="#8fa9d7" stroke="#8fa9d7" stroke-width="0.8" stroke-linejoin="round" /><path d="M1053.3 1242.3L1048.8 1251.5L1091.8 1273.0L1096.3 1263.8Z" fill="#9ab1da" stroke="#9ab1da" stroke-width="0.8" stroke-linejoin="round" /><path d="M1048.8 1251.5L1044.1 1260.8L1087.1 1282.3L1091.8 1273.0Z" fill="#97afd8" stroke="#97afd8" stroke-width="0.8" stroke-linejoin="round" /><path d="M1044.1 1260.8L1039.2 1270.1L1082.2 1291.6L1087.1 1282.3Z" fill="#89a3d0" stroke="#89a3d0" stroke-width="0.8" stroke-linejoin="round" /><path d="M1039.2 1270.1L1038.6 1271.3L1081.6 1292.8L1082.2 1291.6Z" fill="#8ea9d7" stroke="#8ea9d7" stroke-width="0.8" stroke-linejoin="round" /><path d="M1083.2 1151.1L1082.4 1158.5L1081.2 1166.0L1079.5 1173.8L1077.4 1181.7L1074.9 1189.9L1072.1 1198.3L1068.9 1206.8L1065.5 1215.4L1061.7 1224.3L1057.6 1233.2L1053.3 1242.3L1048.8 1251.5L1044.1 1260.8L1039.2 1270.1L1038.6 1271.3" fill="none" stroke="#101112" stroke-width="1.1" stroke-linejoin="round" /><path d="M1126.2 908.3L1126.2 1172.6L1125.4 1180.0L1124.1 1187.5L1122.5 1195.3L1120.4 1203.2L1117.9 1211.4L1115.1 1219.7L1111.9 1228.3L1108.4 1236.9L1104.7 1245.8L1100.6 1254.7L1096.3 1263.8L1091.8 1273.0L1087.1 1282.3L1082.2 1291.6L1081.6 1292.8L1085.9 1304.0L1094.2 1290.5L1103.3 1277.8L1113.1 1266.1L1123.4 1255.6L1134.2 1246.2L1145.3 1238.3L1156.6 1231.9L1167.8 1227.1L1178.9 1223.9L1189.7 1222.4L1200.1 1222.6L1209.9 1224.5L1219.0 1228.1L1227.3 1233.3L1231.5 1217.8L1231.0 1217.2L1226.1 1212.7L1221.4 1208.2L1216.9 1203.5L1212.6 1198.7L1208.5 1193.8L1204.7 1188.8L1201.2 1183.6L1198.1 1178.3L1195.2 1172.8L1192.8 1167.1L1190.7 1161.2L1189.0 1155.1L1187.8 1148.8L1187.0 1142.2L1187.0 877.9Z" fill="#5a5b5d" stroke="#101112" stroke-width="1.3" stroke-linejoin="round" /><path d="M1085.9 1304.0L1094.2 1290.5L1103.3 1277.8L1113.1 1266.1L1123.4 1255.6L1134.2 1246.2L1145.3 1238.3L1156.6 1231.9L1167.8 1227.1L1178.9 1223.9L1189.7 1222.4L1200.1 1222.6L1209.9 1224.5L1219.0 1228.1L1227.3 1233.3" fill="none" stroke="#dfe8f8" stroke-width="3" stroke-linejoin="round" /><path d="M1088.0 1307.7L1096.3 1294.2L1105.4 1281.5L1115.2 1269.8L1125.5 1259.2L1136.4 1249.9L1147.5 1242.0L1158.7 1235.6L1170.0 1230.7L1181.1 1227.6L1191.9 1226.1L1202.2 1226.3L1212.0 1228.2L1221.1 1231.8L1229.4 1237.0" fill="none" stroke="#101112" stroke-width="1" stroke-linejoin="round" /><path d="M1139.6 901.6L1139.6 1194.5L1152.3 1188.1L1152.3 895.2Z" fill="#47484b" stroke="#101112" stroke-width="1" stroke-linejoin="round" /><path d="M1152.3 895.2L1152.3 1205.5L1162.2 1216.1L1172.1 1195.6L1172.1 885.3Z" fill="#55565a" stroke="#101112" stroke-width="1" stroke-linejoin="round" /><path d="M1172.1 885.3L1172.1 1178.2L1177.1 1175.8L1177.1 882.9Z" fill="#636467" stroke="#101112" stroke-width="1" stroke-linejoin="round" /><ellipse cx="1159.4" cy="1205.4" rx="14" ry="21" fill="url(#gPin)" stroke="#101112" stroke-width="1" transform="rotate(28 1159.4 1205.4)"/><path d="M1015.3 1291.2V1540.6A26.5 13.25 0 0 0 1068.3 1540.6V1291.2Z" fill="url(#gT)" stroke="#101112" stroke-width="1.2"/><path d="M1015.3 1291.2L1015.8 1288.5L1017.5 1285.8L1020.3 1283.4L1024.0 1281.4L1028.5 1279.7L1033.6 1278.6L1078.5 1272.8L1067.7 1294.0L1066.0 1296.6L1063.2 1299.0L1059.5 1301.1L1055.0 1302.7L1049.9 1303.8L1044.5 1304.4L1039.0 1304.4L1033.6 1303.8L1028.5 1302.7L1024.0 1301.1L1020.3 1299.0L1017.5 1296.6L1015.8 1294.0Z" fill="#8f9bb5" stroke="#101112" stroke-width="1.2" stroke-linejoin="round" /><ellipse cx="1041.8" cy="1291.2" rx="13.5" ry="7" fill="#55575c" stroke="#101112" stroke-width="1.1"/><path d="M1015.3 1388.2A26.5 13.25 0 0 0 1068.3 1388.2" fill="none" stroke="#101112" stroke-width="1.1"/><path d="M1351.6 1011.1L1338.5 998.4L1323.8 988.3L1307.7 980.8L1290.4 976.0L1272.1 974.0L1252.9 974.7L1233.1 978.3L1212.8 984.5L1192.4 993.5L1171.9 1005.0L1151.7 1019.0L1131.9 1035.2L1112.7 1053.7L1094.3 1074.0L1077.0 1096.1L1061.0 1119.7L1046.3 1144.5L1033.1 1170.3L1033.1 1170.3L1105.3 1444.1L1105.3 1444.1L1108.4 1453.5L1112.3 1461.9L1117.1 1469.3L1122.7 1475.7L1129.0 1481.0L1136.0 1485.1L1143.6 1488.0L1151.7 1489.6L1160.3 1489.9L1169.2 1488.9L1178.4 1486.7L1187.7 1483.2L1197.0 1478.5L1206.4 1472.7L1215.5 1465.8L1224.4 1457.8L1233.0 1448.9L1241.1 1439.2L1248.7 1428.7L1255.7 1417.6L1262.1 1406.0L1267.7 1394.1L1272.4 1381.8L1276.4 1369.4L1279.4 1357.1L1279.4 1357.1L1351.6 1011.1Z" fill="none" stroke="#101112" stroke-width="1.3" stroke-linejoin="round" /><path d="M1318.5 985.5L1302.3 979.0L1285.1 975.1L1266.9 973.9L1247.9 975.4L1228.4 979.5L1208.5 986.2L1188.5 995.5L1168.5 1007.2L1148.7 1021.2L1129.4 1037.5L1110.7 1055.7L1092.8 1075.8L1076.0 1097.6L1060.3 1120.7L1046.0 1145.1L1033.1 1170.3L1069.2 1188.4L1082.0 1163.1L1096.4 1138.7L1112.0 1115.6L1128.9 1093.9L1146.8 1073.8L1165.4 1055.5L1184.8 1039.3L1204.5 1025.2L1224.5 1013.5L1244.6 1004.2L1264.5 997.5L1284.0 993.4L1302.9 991.9L1321.1 993.1L1338.4 997.0L1354.5 1003.5Z" fill="url(#ag2)" stroke="#101112" stroke-width="1.1" stroke-linejoin="round" /><path d="M1192.4 993.5L1228.4 1011.5" fill="none" stroke="#101112" stroke-width="1.1" stroke-linejoin="round" /><path d="M1033.1 1170.3L1105.3 1444.1L1141.4 1462.2L1069.2 1188.4Z" fill="#2a2b2b" stroke="#101112" stroke-width="1.2" stroke-linejoin="round" /><path d="M1105.3 1444.1L1108.3 1453.3L1112.1 1461.6L1116.8 1468.9L1122.2 1475.3L1128.3 1480.5L1135.1 1484.7L1171.2 1502.7L1164.4 1498.6L1158.2 1493.3L1152.8 1487.0L1148.2 1479.6L1144.4 1471.3L1141.4 1462.2Z" fill="url(#ag3)" stroke="#101112" stroke-width="1.1" stroke-linejoin="round" /><path d="M1387.7 1029.1L1374.5 1016.5L1359.8 1006.3L1343.8 998.8L1326.5 994.0L1308.1 992.0L1288.9 992.8L1269.1 996.3L1248.9 1002.6L1228.4 1011.5L1208.0 1023.0L1187.7 1037.0L1167.9 1053.3L1148.7 1071.7L1130.4 1092.0L1113.1 1114.1L1097.0 1137.7L1082.3 1162.6L1069.2 1188.4L1069.2 1188.4L1141.4 1462.2L1141.4 1462.2L1144.4 1471.5L1148.4 1479.9L1153.1 1487.4L1158.7 1493.8L1165.1 1499.0L1172.1 1503.1L1179.7 1506.0L1187.8 1507.6L1196.4 1507.9L1205.3 1507.0L1214.4 1504.7L1223.8 1501.3L1233.1 1496.6L1242.4 1490.7L1251.6 1483.8L1260.5 1475.9L1269.0 1467.0L1277.2 1457.2L1284.8 1446.8L1291.8 1435.7L1298.1 1424.1L1303.7 1412.1L1308.5 1399.8L1312.4 1387.5L1315.5 1375.1L1315.5 1375.1L1387.7 1029.1Z" fill="#5a5b5d" stroke="#101112" stroke-width="1.3" stroke-linejoin="round" /><path d="M1182.1 1180.6L1174.0 1191.2L1166.4 1202.4L1159.6 1214.2L1153.5 1226.5L1148.2 1239.1L1143.8 1251.9L1140.3 1264.7L1137.8 1277.4L1136.3 1289.9L1135.8 1302.0L1136.3 1313.6L1137.8 1324.6L1140.3 1334.8L1143.8 1344.2L1148.2 1352.5L1153.5 1359.9L1159.6 1366.0L1166.4 1371.0L1174.0 1374.7L1182.1 1377.1L1190.8 1378.2L1199.8 1377.9L1209.2 1376.3L1218.7 1373.4L1228.4 1369.2L1238.1 1363.7L1247.7 1357.1L1257.1 1349.3L1266.1 1340.5L1274.7 1330.8L1282.9 1320.3L1290.4 1309.0L1297.3 1297.2L1303.4 1284.9L1308.7 1272.3" fill="none" stroke="#c8d4ee" stroke-width="2.2" stroke-linejoin="round" /><path d="M1322.5 1208.7L1322.0 1196.9L1320.4 1185.8L1317.9 1175.4L1314.3 1165.9L1309.9 1157.4L1304.5 1150.0L1298.3 1143.7L1291.4 1138.7L1283.7 1134.9L1275.5 1132.5L1266.7 1131.4L1257.5 1131.6L1248.0 1133.3L1238.3 1136.2L1228.4 1140.5L1218.6 1146.1L1208.9 1152.8L1199.4 1160.7L1190.2 1169.6L1181.4 1179.5L1173.2 1190.2L1165.5 1201.6L1158.5 1213.6L1152.3 1226.1L1147.0 1238.8L1142.5 1251.8L1139.0 1264.8L1136.4 1277.8L1134.9 1290.4L1134.4 1302.7L1134.9 1314.5L1136.4 1325.7L1139.0 1336.0L1142.5 1345.5L1147.0 1354.0L1152.3 1361.5L1158.5 1367.7L1165.5 1372.8L1173.2 1376.5L1181.4 1379.0L1190.2 1380.1L1199.4 1379.8L1208.9 1378.2L1218.6 1375.2L1228.4 1370.9L1238.3 1365.3L1248.0 1358.6L1257.5 1350.7L1266.7 1341.8L1275.5 1332.0L1283.7 1321.3L1291.4 1309.8L1298.3 1297.8L1304.5 1285.4L1309.9 1272.6L1314.3 1259.6L1317.9 1246.6L1320.4 1233.7L1322.0 1221.0L1322.5 1208.7" fill="none" stroke="#101112" stroke-width="1.1" stroke-linejoin="round" /><path d="M1277.6 1157.3L1271.1 1154.7L1264.0 1153.2L1256.6 1152.8L1248.9 1153.6L1240.9 1155.4L1232.8 1158.4L1224.7 1162.4L1216.6 1167.5L1208.6 1173.5L1200.8 1180.4L1193.4 1188.2L1186.3 1196.7L1179.7 1205.8L1173.7 1215.5L1168.2 1225.6L1163.4 1236.0L1159.3 1246.7L1155.9 1257.5L1153.4 1268.2L1151.7 1278.8L1150.8 1289.2L1150.7 1299.2L1151.6 1308.7L1153.2 1317.6L1155.7 1325.9L1159.0 1333.3L1163.0 1340.0L1167.8 1345.7L1173.2 1350.4L1179.2 1354.1L1272.4 1400.7L1278.9 1403.3L1286.0 1404.8L1293.4 1405.2L1301.1 1404.4L1309.1 1402.5L1317.2 1399.6L1325.3 1395.5L1333.4 1390.5L1341.4 1384.5L1349.1 1377.6L1356.6 1369.8L1363.7 1361.3L1370.3 1352.2L1376.3 1342.5L1381.8 1332.4L1386.6 1321.9L1390.7 1311.3L1394.1 1300.5L1396.6 1289.8L1398.3 1279.2L1399.2 1268.8L1399.2 1258.8L1398.4 1249.3L1396.8 1240.4L1394.3 1232.1L1391.0 1224.6L1387.0 1218.0L1382.2 1212.3L1376.8 1207.6L1370.7 1203.9Z" fill="url(#ag1)" stroke="#101112" stroke-width="1.3" stroke-linejoin="round" /><path d="M1228.4 1160.4L1321.6 1207.0" fill="none" stroke="#101112" stroke-width="1.1" stroke-linejoin="round" /><path d="M1480.8 1369.6L1408.6 1095.8L1408.6 1095.8L1405.6 1086.5L1401.6 1078.1L1396.9 1070.6L1391.3 1064.2L1384.9 1058.9L1377.9 1054.9L1370.3 1052.0L1362.2 1050.4L1353.6 1050.1L1344.7 1051.0L1335.5 1053.3L1326.2 1056.7L1316.9 1061.4L1307.6 1067.2L1298.4 1074.2L1289.5 1082.1L1280.9 1091.0L1272.8 1100.8L1265.2 1111.2L1258.2 1122.3L1251.8 1133.9L1246.3 1145.9L1241.5 1158.1L1237.6 1170.5L1234.5 1182.9L1234.5 1182.9L1162.3 1528.9L1162.3 1528.9L1175.5 1541.5L1190.2 1551.7L1206.2 1559.2L1223.5 1564.0L1241.9 1566.0L1261.0 1565.2L1280.9 1561.7L1301.1 1555.4L1321.6 1546.5L1342.0 1535.0L1362.3 1521.0L1382.1 1504.7L1401.2 1486.3L1419.6 1465.9L1436.9 1443.9L1453.0 1420.3L1467.7 1395.4L1480.8 1369.6Z" fill="none" stroke="#101112" stroke-width="1.3" stroke-linejoin="round" /><path d="M1378.8 1055.3L1371.2 1052.3L1363.1 1050.5L1354.5 1050.1L1345.6 1050.9L1336.4 1053.0L1327.0 1056.4L1317.6 1061.0L1308.2 1066.8L1299.0 1073.7L1290.0 1081.7L1281.4 1090.5L1273.2 1100.3L1265.5 1110.8L1258.4 1122.0L1252.0 1133.6L1246.4 1145.7L1241.5 1158.0L1237.6 1170.4L1234.5 1182.9L1270.6 1200.9L1273.6 1188.5L1277.6 1176.0L1282.4 1163.7L1288.1 1151.7L1294.5 1140.0L1301.5 1128.8L1309.2 1118.3L1317.4 1108.6L1326.1 1099.7L1335.1 1091.7L1344.3 1084.8L1353.7 1079.0L1363.1 1074.4L1372.4 1071.0L1381.6 1068.9L1390.6 1068.1L1399.1 1068.5L1407.3 1070.3L1414.9 1073.3Z" fill="url(#ag4)" stroke="#101112" stroke-width="1.1" stroke-linejoin="round" /><path d="M1234.5 1182.9L1162.3 1528.9L1198.4 1546.9L1270.6 1200.9Z" fill="#6a6c70" stroke="#101112" stroke-width="1.2" stroke-linejoin="round" /><path d="M1162.3 1528.9L1172.4 1539.0L1183.5 1547.5L1195.4 1554.5L1231.5 1572.5L1219.6 1565.5L1208.5 1557.0L1198.4 1546.9Z" fill="url(#ag2)" stroke="#101112" stroke-width="1.1" stroke-linejoin="round" /><path d="M1516.9 1387.7L1444.7 1113.9L1444.7 1113.9L1441.6 1104.5L1437.7 1096.1L1432.9 1088.6L1427.3 1082.2L1421.0 1077.0L1414.0 1072.9L1406.4 1070.0L1398.2 1068.4L1389.7 1068.1L1380.8 1069.1L1371.6 1071.3L1362.3 1074.8L1352.9 1079.4L1343.6 1085.3L1334.5 1092.2L1325.6 1100.2L1317.0 1109.1L1308.9 1118.8L1301.3 1129.3L1294.2 1140.3L1287.9 1152.0L1282.3 1163.9L1277.5 1176.2L1273.6 1188.5L1270.6 1200.9L1270.6 1200.9L1198.4 1546.9L1198.4 1546.9L1211.5 1559.6L1226.2 1569.7L1242.3 1577.2L1259.6 1582.0L1277.9 1584.0L1297.1 1583.3L1316.9 1579.7L1337.2 1573.5L1357.6 1564.5L1378.1 1553.0L1398.3 1539.0L1418.1 1522.8L1437.3 1504.3L1455.6 1484.0L1472.9 1461.9L1489.0 1438.3L1503.7 1413.5L1516.9 1387.7Z" fill="#5a5b5d" stroke="#101112" stroke-width="1.3" stroke-linejoin="round" /><path d="M1481.7 1072.8V1322.2A26.5 13.25 0 0 0 1534.7 1322.2V1072.8Z" fill="url(#gT)" stroke="#101112" stroke-width="1.2"/><path d="M1471.5 1091.2L1482.3 1070.0L1484.0 1067.4L1486.8 1065.0L1490.5 1062.9L1495.0 1061.3L1500.0 1060.2L1505.5 1059.6L1511.0 1059.6L1516.4 1060.2L1521.5 1061.3L1526.0 1062.9L1529.7 1065.0L1532.4 1067.4L1534.2 1070.0L1534.7 1072.8L1534.2 1075.5L1532.4 1078.2L1529.7 1080.6L1526.0 1082.6L1521.5 1084.3L1516.4 1085.4Z" fill="#8f9bb5" stroke="#101112" stroke-width="1.2" stroke-linejoin="round" /><ellipse cx="1508.2" cy="1072.8" rx="13.5" ry="7" fill="#55575c" stroke="#101112" stroke-width="1.1"/><path d="M1481.7 1169.8A26.5 13.25 0 0 0 1534.7 1169.8" fill="none" stroke="#101112" stroke-width="1.1"/><path d="M1414.9 1073.3L1407.2 1070.3L1399.0 1068.5L1390.4 1068.1L1381.4 1069.0L1372.1 1071.1L1362.7 1074.6L1353.2 1079.3L1343.8 1085.1L1334.5 1092.2L1325.5 1100.2L1316.9 1109.2L1308.6 1119.1L1300.9 1129.7L1293.9 1141.0L1287.5 1152.8L1281.9 1164.9L1277.1 1177.3L1273.3 1189.8L1270.3 1202.3L1268.3 1214.7L1267.3 1226.7L1267.2 1238.4L1268.2 1249.4L1270.1 1259.8L1273.0 1269.4L1276.8 1278.1L1281.5 1285.9L1287.1 1292.5L1293.4 1298.0L1300.4 1302.3L1414.9 1359.6L1422.6 1362.6L1430.8 1364.4L1439.4 1364.8L1448.4 1363.9L1457.7 1361.8L1467.1 1358.3L1476.5 1353.6L1486.0 1347.7L1495.2 1340.7L1504.3 1332.7L1512.9 1323.7L1521.2 1313.8L1528.8 1303.2L1535.9 1291.9L1542.3 1280.1L1547.9 1268.0L1552.7 1255.6L1556.5 1243.0L1559.5 1230.5L1561.5 1218.2L1562.5 1206.1L1562.6 1194.5L1561.6 1183.5L1559.7 1173.1L1556.8 1163.5L1553.0 1154.7L1548.3 1147.0L1542.7 1140.4L1536.4 1134.9L1529.4 1130.6Z" fill="url(#ag4)" stroke="#101112" stroke-width="1.3" stroke-linejoin="round" /><path d="M1363.0 761.6L1363.0 1026.0L1406.0 1047.5L1406.0 783.1Z" fill="#3f4042" stroke="#101112" stroke-width="1.3" stroke-linejoin="round" /><path d="M1363.0 1026.0L1362.2 1033.4L1405.2 1054.9L1406.0 1047.5Z" fill="#545557" stroke="#545557" stroke-width="0.8" stroke-linejoin="round" /><path d="M1362.2 1033.4L1361.0 1040.9L1403.9 1062.4L1405.2 1054.9Z" fill="#68696b" stroke="#68696b" stroke-width="0.8" stroke-linejoin="round" /><path d="M1361.0 1040.9L1359.3 1048.7L1402.3 1070.2L1403.9 1062.4Z" fill="#9b8f80" stroke="#9b8f80" stroke-width="0.8" stroke-linejoin="round" /><path d="M1359.3 1048.7L1357.2 1056.6L1400.2 1078.1L1402.3 1070.2Z" fill="#b1bdc2" stroke="#b1bdc2" stroke-width="0.8" stroke-linejoin="round" /><path d="M1357.2 1056.6L1354.8 1064.8L1397.7 1086.3L1400.2 1078.1Z" fill="#acb9c3" stroke="#acb9c3" stroke-width="0.8" stroke-linejoin="round" /><path d="M1354.8 1064.8L1351.9 1073.1L1394.9 1094.6L1397.7 1086.3Z" fill="#a7b6c5" stroke="#a7b6c5" stroke-width="0.8" stroke-linejoin="round" /><path d="M1351.9 1073.1L1348.7 1081.7L1391.7 1103.2L1394.9 1094.6Z" fill="#92a9ca" stroke="#92a9ca" stroke-width="0.8" stroke-linejoin="round" /><path d="M1348.7 1081.7L1345.3 1090.3L1388.3 1111.8L1391.7 1103.2Z" fill="#7a9ad0" stroke="#7a9ad0" stroke-width="0.8" stroke-linejoin="round" /><path d="M1345.3 1090.3L1341.5 1099.2L1384.5 1120.6L1388.3 1111.8Z" fill="#7a9ad0" stroke="#7a9ad0" stroke-width="0.8" stroke-linejoin="round" /><path d="M1341.5 1099.2L1337.4 1108.1L1380.4 1129.6L1384.5 1120.6Z" fill="#82a0d2" stroke="#82a0d2" stroke-width="0.8" stroke-linejoin="round" /><path d="M1337.4 1108.1L1333.1 1117.2L1376.1 1138.7L1380.4 1129.6Z" fill="#8fa9d7" stroke="#8fa9d7" stroke-width="0.8" stroke-linejoin="round" /><path d="M1333.1 1117.2L1328.6 1126.4L1371.6 1147.9L1376.1 1138.7Z" fill="#9ab1da" stroke="#9ab1da" stroke-width="0.8" stroke-linejoin="round" /><path d="M1328.6 1126.4L1323.9 1135.7L1366.9 1157.2L1371.6 1147.9Z" fill="#97afd8" stroke="#97afd8" stroke-width="0.8" stroke-linejoin="round" /><path d="M1323.9 1135.7L1319.0 1145.0L1362.0 1166.5L1366.9 1157.2Z" fill="#89a3d0" stroke="#89a3d0" stroke-width="0.8" stroke-linejoin="round" /><path d="M1319.0 1145.0L1318.4 1146.2L1361.4 1167.7L1362.0 1166.5Z" fill="#8ea9d7" stroke="#8ea9d7" stroke-width="0.8" stroke-linejoin="round" /><path d="M1363.0 1026.0L1362.2 1033.4L1361.0 1040.9L1359.3 1048.7L1357.2 1056.6L1354.8 1064.8L1351.9 1073.1L1348.7 1081.7L1345.3 1090.3L1341.5 1099.2L1337.4 1108.1L1333.1 1117.2L1328.6 1126.4L1323.9 1135.7L1319.0 1145.0L1318.4 1146.2" fill="none" stroke="#101112" stroke-width="1.1" stroke-linejoin="round" /><path d="M1406.0 783.1L1406.0 1047.5L1405.2 1054.9L1403.9 1062.4L1402.3 1070.2L1400.2 1078.1L1397.7 1086.3L1394.9 1094.6L1391.7 1103.2L1388.3 1111.8L1384.5 1120.6L1380.4 1129.6L1376.1 1138.7L1371.6 1147.9L1366.9 1157.2L1362.0 1166.5L1361.4 1167.7L1365.7 1178.9L1374.0 1165.4L1383.1 1152.7L1392.9 1141.0L1403.2 1130.4L1414.0 1121.1L1425.1 1113.2L1436.4 1106.8L1447.6 1102.0L1458.7 1098.8L1469.6 1097.3L1479.9 1097.5L1489.7 1099.4L1498.8 1103.0L1507.1 1108.2L1511.3 1092.7L1510.8 1092.1L1505.9 1087.6L1501.2 1083.1L1496.7 1078.4L1492.4 1073.6L1488.3 1068.7L1484.5 1063.7L1481.0 1058.5L1477.9 1053.2L1475.0 1047.7L1472.6 1042.0L1470.5 1036.1L1468.8 1030.0L1467.6 1023.7L1466.8 1017.1L1466.8 752.7Z" fill="#5a5b5d" stroke="#101112" stroke-width="1.3" stroke-linejoin="round" /><path d="M1365.7 1178.9L1374.0 1165.4L1383.1 1152.7L1392.9 1141.0L1403.2 1130.4L1414.0 1121.1L1425.1 1113.2L1436.4 1106.8L1447.6 1102.0L1458.7 1098.8L1469.6 1097.3L1479.9 1097.5L1489.7 1099.4L1498.8 1103.0L1507.1 1108.2" fill="none" stroke="#dfe8f8" stroke-width="3" stroke-linejoin="round" /><path d="M1367.8 1182.6L1376.1 1169.1L1385.2 1156.4L1395.0 1144.7L1405.4 1134.1L1416.2 1124.8L1427.3 1116.9L1438.5 1110.5L1449.8 1105.6L1460.9 1102.4L1471.7 1100.9L1482.0 1101.2L1491.8 1103.1L1500.9 1106.7L1509.2 1111.9" fill="none" stroke="#101112" stroke-width="1" stroke-linejoin="round" /><path d="M1419.4 776.4L1419.4 1069.4L1432.1 1063.0L1432.1 770.1Z" fill="#47484b" stroke="#101112" stroke-width="1" stroke-linejoin="round" /><path d="M1432.1 770.1L1432.1 1080.4L1442.0 1091.0L1451.9 1070.5L1451.9 760.2Z" fill="#55565a" stroke="#101112" stroke-width="1" stroke-linejoin="round" /><path d="M1451.9 760.2L1451.9 1053.1L1456.9 1050.7L1456.9 757.7Z" fill="#636467" stroke="#101112" stroke-width="1" stroke-linejoin="round" /><ellipse cx="1439.2" cy="1080.3" rx="14" ry="21" fill="url(#gPin)" stroke="#101112" stroke-width="1" transform="rotate(28 1439.2 1080.3)"/><path d="M1295.1 1166.1V1415.5A26.5 13.25 0 0 0 1348.1 1415.5V1166.1Z" fill="url(#gT)" stroke="#101112" stroke-width="1.2"/><path d="M1295.1 1166.1L1295.6 1163.4L1297.3 1160.7L1300.1 1158.3L1303.8 1156.3L1308.3 1154.6L1313.4 1153.5L1358.3 1147.7L1347.5 1168.9L1345.8 1171.5L1343.0 1173.9L1339.3 1176.0L1334.8 1177.6L1329.7 1178.7L1324.3 1179.3L1318.8 1179.3L1313.4 1178.7L1308.3 1177.6L1303.8 1176.0L1300.1 1173.9L1297.3 1171.5L1295.6 1168.9Z" fill="#8f9bb5" stroke="#101112" stroke-width="1.2" stroke-linejoin="round" /><ellipse cx="1321.6" cy="1166.1" rx="13.5" ry="7" fill="#55575c" stroke="#101112" stroke-width="1.1"/><path d="M1295.1 1263.1A26.5 13.25 0 0 0 1348.1 1263.1" fill="none" stroke="#101112" stroke-width="1.1"/><path d="M1631.4 1444.9L1559.2 1171.1L1559.2 1171.1L1556.2 1161.8L1552.2 1153.4L1547.5 1145.9L1541.9 1139.5L1535.5 1134.2L1528.5 1130.2L1520.9 1127.3L1512.8 1125.7L1504.2 1125.4L1495.3 1126.3L1486.2 1128.6L1476.8 1132.0L1467.5 1136.7L1458.2 1142.6L1449.0 1149.5L1440.1 1157.4L1431.6 1166.3L1423.4 1176.1L1415.8 1186.5L1408.8 1197.6L1402.5 1209.2L1396.9 1221.2L1392.1 1233.5L1388.2 1245.8L1385.1 1258.2L1385.1 1258.2L1312.9 1604.2L1312.9 1604.2L1326.1 1616.8L1340.8 1627.0L1356.8 1634.5L1374.1 1639.3L1392.5 1641.3L1411.7 1640.5L1431.5 1637.0L1451.7 1630.7L1472.2 1621.8L1492.6 1610.3L1512.9 1596.3L1532.7 1580.0L1551.9 1561.6L1570.2 1541.2L1587.5 1519.2L1603.6 1495.6L1618.3 1470.7L1631.4 1444.9Z" fill="none" stroke="#101112" stroke-width="1.3" stroke-linejoin="round" /><path d="M1529.4 1130.6L1521.8 1127.6L1513.7 1125.8L1505.1 1125.4L1496.2 1126.2L1487.0 1128.3L1477.6 1131.7L1468.2 1136.3L1458.8 1142.1L1449.6 1149.0L1440.6 1157.0L1432.0 1165.9L1423.8 1175.6L1416.1 1186.1L1409.0 1197.3L1402.6 1208.9L1397.0 1221.0L1392.1 1233.3L1388.2 1245.7L1385.1 1258.2L1421.2 1276.2L1424.3 1263.8L1428.2 1251.3L1433.0 1239.0L1438.7 1227.0L1445.1 1215.3L1452.1 1204.1L1459.8 1193.6L1468.0 1183.9L1476.7 1175.0L1485.7 1167.0L1494.9 1160.1L1504.3 1154.3L1513.7 1149.7L1523.0 1146.3L1532.2 1144.2L1541.2 1143.4L1549.8 1143.8L1557.9 1145.6L1565.5 1148.6Z" fill="url(#ag4)" stroke="#101112" stroke-width="1.1" stroke-linejoin="round" /><path d="M1385.1 1258.2L1312.9 1604.2L1349.0 1622.2L1421.2 1276.2Z" fill="#6a6c70" stroke="#101112" stroke-width="1.2" stroke-linejoin="round" /><path d="M1312.9 1604.2L1323.0 1614.3L1334.1 1622.8L1346.1 1629.8L1382.1 1647.8L1370.2 1640.9L1359.1 1632.3L1349.0 1622.2Z" fill="url(#ag2)" stroke="#101112" stroke-width="1.1" stroke-linejoin="round" /><path d="M1667.5 1463.0L1595.3 1189.2L1595.3 1189.2L1592.2 1179.8L1588.3 1171.4L1583.5 1163.9L1577.9 1157.5L1571.6 1152.3L1564.6 1148.2L1557.0 1145.3L1548.9 1143.7L1540.3 1143.4L1531.4 1144.4L1522.2 1146.6L1512.9 1150.1L1503.6 1154.7L1494.2 1160.6L1485.1 1167.5L1476.2 1175.5L1467.6 1184.4L1459.5 1194.1L1451.9 1204.6L1444.9 1215.7L1438.5 1227.3L1432.9 1239.2L1428.2 1251.5L1424.2 1263.8L1421.2 1276.2L1421.2 1276.2L1349.0 1622.2L1349.0 1622.2L1362.1 1634.9L1376.8 1645.0L1392.9 1652.5L1410.2 1657.3L1428.5 1659.3L1447.7 1658.6L1467.5 1655.0L1487.8 1648.8L1508.2 1639.8L1528.7 1628.3L1548.9 1614.3L1568.7 1598.1L1587.9 1579.6L1606.3 1559.3L1623.6 1537.2L1639.6 1513.6L1654.3 1488.8L1667.5 1463.0Z" fill="#5a5b5d" stroke="#101112" stroke-width="1.3" stroke-linejoin="round" /><path d="M1461.9 1320.5L1453.8 1331.1L1446.3 1342.3L1439.4 1354.1L1433.3 1366.4L1428.0 1379.0L1423.6 1391.8L1420.1 1404.6L1417.6 1417.3L1416.1 1429.8L1415.6 1441.9L1416.1 1453.5L1417.6 1464.5L1420.1 1474.7L1423.6 1484.1L1428.0 1492.4L1433.3 1499.8L1439.4 1505.9L1446.3 1510.9L1453.8 1514.6L1461.9 1517.0L1470.6 1518.1L1479.6 1517.8L1489.0 1516.2L1498.6 1513.3L1508.2 1509.1L1517.9 1503.6L1527.5 1497.0L1536.9 1489.2L1545.9 1480.4L1554.5 1470.7L1562.7 1460.2L1570.2 1448.9L1577.1 1437.1L1583.2 1424.8L1588.5 1412.2" fill="none" stroke="#c8d4ee" stroke-width="2.2" stroke-linejoin="round" /><path d="M1602.3 1348.6L1601.8 1336.8L1600.2 1325.7L1597.7 1315.3L1594.1 1305.8L1589.7 1297.3L1584.3 1289.9L1578.1 1283.6L1571.2 1278.6L1563.5 1274.8L1555.3 1272.4L1546.5 1271.3L1537.3 1271.5L1527.8 1273.2L1518.1 1276.1L1508.2 1280.4L1498.4 1286.0L1488.7 1292.7L1479.2 1300.6L1470.0 1309.5L1461.2 1319.4L1453.0 1330.1L1445.3 1341.5L1438.3 1353.5L1432.1 1366.0L1426.8 1378.7L1422.3 1391.7L1418.8 1404.7L1416.2 1417.7L1414.7 1430.3L1414.2 1442.6L1414.7 1454.4L1416.2 1465.6L1418.8 1475.9L1422.3 1485.4L1426.8 1493.9L1432.1 1501.4L1438.3 1507.6L1445.3 1512.7L1453.0 1516.4L1461.2 1518.9L1470.0 1520.0L1479.2 1519.7L1488.7 1518.1L1498.4 1515.1L1508.2 1510.8L1518.1 1505.2L1527.8 1498.5L1537.3 1490.6L1546.5 1481.7L1555.3 1471.9L1563.5 1461.2L1571.2 1449.7L1578.1 1437.7L1584.3 1425.3L1589.7 1412.5L1594.1 1399.5L1597.7 1386.5L1600.2 1373.6L1601.8 1360.9L1602.3 1348.6" fill="none" stroke="#101112" stroke-width="1.1" stroke-linejoin="round" /><path d="M1557.4 1297.2L1550.9 1294.6L1543.8 1293.1L1536.4 1292.7L1528.7 1293.5L1520.7 1295.3L1512.6 1298.3L1504.5 1302.3L1496.4 1307.4L1488.4 1313.4L1480.7 1320.3L1473.2 1328.1L1466.1 1336.6L1459.5 1345.7L1453.5 1355.4L1448.0 1365.5L1443.2 1375.9L1439.1 1386.6L1435.7 1397.4L1433.2 1408.1L1431.5 1418.7L1430.6 1429.1L1430.5 1439.1L1431.4 1448.6L1433.0 1457.5L1435.5 1465.8L1438.8 1473.2L1442.8 1479.9L1447.6 1485.6L1453.0 1490.3L1459.0 1494.0L1552.2 1540.6L1558.7 1543.2L1565.8 1544.7L1573.2 1545.1L1580.9 1544.3L1588.9 1542.4L1597.0 1539.5L1605.1 1535.4L1613.2 1530.4L1621.2 1524.4L1628.9 1517.5L1636.4 1509.7L1643.5 1501.2L1650.1 1492.1L1656.1 1482.4L1661.6 1472.3L1666.4 1461.8L1670.5 1451.2L1673.9 1440.4L1676.4 1429.7L1678.1 1419.1L1679.0 1408.7L1679.1 1398.7L1678.2 1389.2L1676.6 1380.3L1674.1 1372.0L1670.8 1364.5L1666.8 1357.9L1662.0 1352.2L1656.6 1347.5L1650.6 1343.8Z" fill="url(#ag1)" stroke="#101112" stroke-width="1.3" stroke-linejoin="round" /><path d="M1508.2 1300.3L1601.4 1346.9" fill="none" stroke="#101112" stroke-width="1.1" stroke-linejoin="round" /><path d="M1760.6 1509.5L1688.4 1235.7L1688.4 1235.7L1685.4 1226.4L1681.4 1218.0L1676.7 1210.5L1671.1 1204.1L1664.7 1198.8L1657.7 1194.8L1650.1 1191.9L1642.0 1190.3L1633.4 1190.0L1624.5 1190.9L1615.3 1193.2L1606.0 1196.6L1596.7 1201.3L1587.4 1207.1L1578.2 1214.1L1569.3 1222.0L1560.7 1230.9L1552.6 1240.7L1545.0 1251.1L1538.0 1262.2L1531.7 1273.8L1526.1 1285.8L1521.3 1298.0L1517.4 1310.4L1514.3 1322.8L1514.3 1322.8L1442.1 1668.8L1442.1 1668.8L1455.3 1681.4L1470.0 1691.6L1486.0 1699.1L1503.3 1703.9L1521.7 1705.9L1540.8 1705.1L1560.7 1701.6L1580.9 1695.3L1601.4 1686.4L1621.8 1674.9L1642.1 1660.9L1661.9 1644.6L1681.0 1626.2L1699.4 1605.8L1716.7 1583.8L1732.8 1560.2L1747.5 1535.3L1760.6 1509.5Z" fill="none" stroke="#101112" stroke-width="1.3" stroke-linejoin="round" /><path d="M1658.6 1195.2L1651.0 1192.2L1642.9 1190.4L1634.3 1190.0L1625.4 1190.8L1616.2 1192.9L1606.8 1196.3L1597.4 1200.9L1588.0 1206.7L1578.8 1213.6L1569.8 1221.6L1561.2 1230.4L1553.0 1240.2L1545.3 1250.7L1538.2 1261.9L1531.8 1273.5L1526.2 1285.6L1521.3 1297.9L1517.4 1310.3L1514.3 1322.8L1550.4 1340.8L1553.4 1328.4L1557.4 1315.9L1562.2 1303.6L1567.9 1291.6L1574.3 1279.9L1581.3 1268.7L1589.0 1258.2L1597.2 1248.5L1605.9 1239.6L1614.9 1231.6L1624.1 1224.7L1633.5 1218.9L1642.9 1214.3L1652.2 1210.9L1661.4 1208.8L1670.4 1208.0L1678.9 1208.4L1687.1 1210.2L1694.7 1213.2Z" fill="url(#ag4)" stroke="#101112" stroke-width="1.1" stroke-linejoin="round" /><path d="M1514.3 1322.8L1442.1 1668.8L1478.2 1686.8L1550.4 1340.8Z" fill="#6a6c70" stroke="#101112" stroke-width="1.2" stroke-linejoin="round" /><path d="M1442.1 1668.8L1452.2 1678.9L1463.3 1687.4L1475.2 1694.4L1511.3 1712.4L1499.4 1705.4L1488.3 1696.9L1478.2 1686.8Z" fill="url(#ag2)" stroke="#101112" stroke-width="1.1" stroke-linejoin="round" /><path d="M1796.7 1527.6L1724.5 1253.8L1724.5 1253.8L1721.4 1244.4L1717.5 1236.0L1712.7 1228.5L1707.1 1222.1L1700.8 1216.9L1693.8 1212.8L1686.2 1209.9L1678.0 1208.3L1669.5 1208.0L1660.6 1209.0L1651.4 1211.2L1642.1 1214.7L1632.7 1219.3L1623.4 1225.2L1614.3 1232.1L1605.4 1240.1L1596.8 1249.0L1588.7 1258.7L1581.1 1269.2L1574.0 1280.2L1567.7 1291.8L1562.1 1303.8L1557.3 1316.1L1553.4 1328.4L1550.4 1340.8L1550.4 1340.8L1478.2 1686.8L1478.2 1686.8L1491.3 1699.5L1506.0 1709.6L1522.1 1717.1L1539.4 1721.9L1557.7 1723.9L1576.9 1723.2L1596.7 1719.6L1617.0 1713.4L1637.4 1704.4L1657.9 1692.9L1678.1 1678.9L1697.9 1662.7L1717.1 1644.2L1735.4 1623.9L1752.7 1601.8L1768.8 1578.2L1783.5 1553.4L1796.7 1527.6Z" fill="#5a5b5d" stroke="#101112" stroke-width="1.3" stroke-linejoin="round" /><path d="M1761.5 1212.7V1462.1A26.5 13.25 0 0 0 1814.5 1462.1V1212.7Z" fill="url(#gT)" stroke="#101112" stroke-width="1.2"/><path d="M1751.3 1231.1L1762.1 1209.9L1763.8 1207.3L1766.6 1204.9L1770.3 1202.8L1774.8 1201.2L1779.8 1200.1L1785.3 1199.5L1790.8 1199.5L1796.2 1200.1L1801.3 1201.2L1805.8 1202.8L1809.5 1204.9L1812.2 1207.3L1814.0 1209.9L1814.5 1212.7L1814.0 1215.4L1812.2 1218.1L1809.5 1220.5L1805.8 1222.5L1801.3 1224.2L1796.2 1225.3Z" fill="#8f9bb5" stroke="#101112" stroke-width="1.2" stroke-linejoin="round" /><ellipse cx="1788.0" cy="1212.7" rx="13.5" ry="7" fill="#55575c" stroke="#101112" stroke-width="1.1"/><path d="M1761.5 1309.7A26.5 13.25 0 0 0 1814.5 1309.7" fill="none" stroke="#101112" stroke-width="1.1"/><path d="M1694.7 1213.2L1687.0 1210.2L1678.8 1208.4L1670.2 1208.0L1661.2 1208.9L1651.9 1211.0L1642.5 1214.5L1633.0 1219.2L1623.6 1225.0L1614.3 1232.1L1605.3 1240.1L1596.7 1249.1L1588.4 1259.0L1580.7 1269.6L1573.7 1280.9L1567.3 1292.7L1561.7 1304.8L1556.9 1317.2L1553.1 1329.7L1550.1 1342.2L1548.1 1354.6L1547.1 1366.6L1547.0 1378.3L1548.0 1389.3L1549.9 1399.7L1552.8 1409.3L1556.6 1418.0L1561.3 1425.8L1566.9 1432.4L1573.2 1437.9L1580.2 1442.2L1694.7 1499.5L1702.4 1502.5L1710.6 1504.3L1719.2 1504.7L1728.2 1503.8L1737.5 1501.7L1746.9 1498.2L1756.3 1493.5L1765.8 1487.6L1775.0 1480.6L1784.1 1472.6L1792.7 1463.6L1801.0 1453.7L1808.7 1443.1L1815.7 1431.8L1822.1 1420.0L1827.7 1407.9L1832.5 1395.5L1836.3 1382.9L1839.3 1370.4L1841.3 1358.1L1842.3 1346.0L1842.4 1334.4L1841.4 1323.4L1839.5 1313.0L1836.6 1303.4L1832.8 1294.6L1828.1 1286.9L1822.5 1280.3L1816.2 1274.8L1809.2 1270.5Z" fill="url(#ag4)" stroke="#101112" stroke-width="1.3" stroke-linejoin="round" /><path d="M1642.8 901.5L1642.8 1165.9L1685.8 1187.4L1685.8 923.0Z" fill="#3f4042" stroke="#101112" stroke-width="1.3" stroke-linejoin="round" /><path d="M1642.8 1165.9L1642.0 1173.3L1685.0 1194.8L1685.8 1187.4Z" fill="#545557" stroke="#545557" stroke-width="0.8" stroke-linejoin="round" /><path d="M1642.0 1173.3L1640.8 1180.8L1683.8 1202.3L1685.0 1194.8Z" fill="#68696b" stroke="#68696b" stroke-width="0.8" stroke-linejoin="round" /><path d="M1640.8 1180.8L1639.1 1188.6L1682.1 1210.1L1683.8 1202.3Z" fill="#9b8f80" stroke="#9b8f80" stroke-width="0.8" stroke-linejoin="round" /><path d="M1639.1 1188.6L1637.0 1196.5L1680.0 1218.0L1682.1 1210.1Z" fill="#b1bdc2" stroke="#b1bdc2" stroke-width="0.8" stroke-linejoin="round" /><path d="M1637.0 1196.5L1634.6 1204.7L1677.5 1226.2L1680.0 1218.0Z" fill="#acb9c3" stroke="#acb9c3" stroke-width="0.8" stroke-linejoin="round" /><path d="M1634.6 1204.7L1631.7 1213.0L1674.7 1234.5L1677.5 1226.2Z" fill="#a7b6c5" stroke="#a7b6c5" stroke-width="0.8" stroke-linejoin="round" /><path d="M1631.7 1213.0L1628.6 1221.6L1671.5 1243.1L1674.7 1234.5Z" fill="#92a9ca" stroke="#92a9ca" stroke-width="0.8" stroke-linejoin="round" /><path d="M1628.6 1221.6L1625.1 1230.2L1668.1 1251.7L1671.5 1243.1Z" fill="#7a9ad0" stroke="#7a9ad0" stroke-width="0.8" stroke-linejoin="round" /><path d="M1625.1 1230.2L1621.3 1239.1L1664.3 1260.5L1668.1 1251.7Z" fill="#7a9ad0" stroke="#7a9ad0" stroke-width="0.8" stroke-linejoin="round" /><path d="M1621.3 1239.1L1617.2 1248.0L1660.2 1269.5L1664.3 1260.5Z" fill="#82a0d2" stroke="#82a0d2" stroke-width="0.8" stroke-linejoin="round" /><path d="M1617.2 1248.0L1612.9 1257.1L1655.9 1278.6L1660.2 1269.5Z" fill="#8fa9d7" stroke="#8fa9d7" stroke-width="0.8" stroke-linejoin="round" /><path d="M1612.9 1257.1L1608.4 1266.3L1651.4 1287.8L1655.9 1278.6Z" fill="#9ab1da" stroke="#9ab1da" stroke-width="0.8" stroke-linejoin="round" /><path d="M1608.4 1266.3L1603.7 1275.6L1646.7 1297.1L1651.4 1287.8Z" fill="#97afd8" stroke="#97afd8" stroke-width="0.8" stroke-linejoin="round" /><path d="M1603.7 1275.6L1598.8 1284.9L1641.8 1306.4L1646.7 1297.1Z" fill="#89a3d0" stroke="#89a3d0" stroke-width="0.8" stroke-linejoin="round" /><path d="M1598.8 1284.9L1598.2 1286.1L1641.2 1307.6L1641.8 1306.4Z" fill="#8ea9d7" stroke="#8ea9d7" stroke-width="0.8" stroke-linejoin="round" /><path d="M1642.8 1165.9L1642.0 1173.3L1640.8 1180.8L1639.1 1188.6L1637.0 1196.5L1634.6 1204.7L1631.7 1213.0L1628.6 1221.6L1625.1 1230.2L1621.3 1239.1L1617.2 1248.0L1612.9 1257.1L1608.4 1266.3L1603.7 1275.6L1598.8 1284.9L1598.2 1286.1" fill="none" stroke="#101112" stroke-width="1.1" stroke-linejoin="round" /><path d="M1685.8 923.0L1685.8 1187.4L1685.0 1194.8L1683.8 1202.3L1682.1 1210.1L1680.0 1218.0L1677.5 1226.2L1674.7 1234.5L1671.5 1243.1L1668.1 1251.7L1664.3 1260.5L1660.2 1269.5L1655.9 1278.6L1651.4 1287.8L1646.7 1297.1L1641.8 1306.4L1641.2 1307.6L1645.5 1318.8L1653.8 1305.3L1662.9 1292.6L1672.7 1280.9L1683.0 1270.3L1693.8 1261.0L1704.9 1253.1L1716.2 1246.7L1727.4 1241.9L1738.5 1238.7L1749.4 1237.2L1759.7 1237.4L1769.5 1239.3L1778.6 1242.9L1786.9 1248.1L1791.1 1232.6L1790.6 1232.0L1785.7 1227.5L1781.0 1223.0L1776.5 1218.3L1772.2 1213.5L1768.1 1208.6L1764.3 1203.6L1760.8 1198.4L1757.7 1193.1L1754.8 1187.6L1752.4 1181.9L1750.3 1176.0L1748.6 1169.9L1747.4 1163.6L1746.6 1157.0L1746.6 892.6Z" fill="#5a5b5d" stroke="#101112" stroke-width="1.3" stroke-linejoin="round" /><path d="M1645.5 1318.8L1653.8 1305.3L1662.9 1292.6L1672.7 1280.9L1683.0 1270.3L1693.8 1261.0L1704.9 1253.1L1716.2 1246.7L1727.4 1241.9L1738.5 1238.7L1749.4 1237.2L1759.7 1237.4L1769.5 1239.3L1778.6 1242.9L1786.9 1248.1" fill="none" stroke="#dfe8f8" stroke-width="3" stroke-linejoin="round" /><path d="M1647.6 1322.5L1655.9 1309.0L1665.0 1296.3L1674.8 1284.6L1685.2 1274.0L1696.0 1264.7L1707.1 1256.8L1718.3 1250.4L1729.6 1245.5L1740.7 1242.3L1751.5 1240.8L1761.8 1241.1L1771.6 1243.0L1780.7 1246.6L1789.0 1251.8" fill="none" stroke="#101112" stroke-width="1" stroke-linejoin="round" /><path d="M1699.2 916.3L1699.2 1209.3L1712.0 1202.9L1712.0 910.0Z" fill="#47484b" stroke="#101112" stroke-width="1" stroke-linejoin="round" /><path d="M1712.0 910.0L1712.0 1220.3L1721.9 1230.9L1731.8 1210.4L1731.8 900.1Z" fill="#55565a" stroke="#101112" stroke-width="1" stroke-linejoin="round" /><path d="M1731.8 900.1L1731.8 1193.0L1736.7 1190.6L1736.7 897.6Z" fill="#636467" stroke="#101112" stroke-width="1" stroke-linejoin="round" /><ellipse cx="1719.0" cy="1220.2" rx="14" ry="21" fill="url(#gPin)" stroke="#101112" stroke-width="1" transform="rotate(28 1719.0 1220.2)"/><path d="M1574.9 1306.0V1555.4A26.5 13.25 0 0 0 1627.9 1555.4V1306.0Z" fill="url(#gT)" stroke="#101112" stroke-width="1.2"/><path d="M1574.9 1306.0L1575.4 1303.3L1577.2 1300.6L1579.9 1298.2L1583.6 1296.2L1588.1 1294.5L1593.2 1293.4L1638.1 1287.6L1627.3 1308.8L1625.6 1311.4L1622.8 1313.8L1619.1 1315.9L1614.6 1317.5L1609.5 1318.6L1604.1 1319.2L1598.6 1319.2L1593.2 1318.6L1588.1 1317.5L1583.6 1315.9L1579.9 1313.8L1577.2 1311.4L1575.4 1308.8Z" fill="#8f9bb5" stroke="#101112" stroke-width="1.2" stroke-linejoin="round" /><ellipse cx="1601.4" cy="1306.0" rx="13.5" ry="7" fill="#55575c" stroke="#101112" stroke-width="1.1"/><path d="M1574.9 1403.0A26.5 13.25 0 0 0 1627.9 1403.0" fill="none" stroke="#101112" stroke-width="1.1"/><path d="M1911.2 1584.8L1839.0 1311.0L1839.0 1311.0L1836.0 1301.7L1832.1 1293.3L1827.3 1285.8L1821.7 1279.4L1815.3 1274.1L1808.3 1270.1L1800.7 1267.2L1792.6 1265.6L1784.0 1265.3L1775.1 1266.2L1766.0 1268.5L1756.7 1271.9L1747.3 1276.6L1738.0 1282.5L1728.8 1289.4L1719.9 1297.3L1711.4 1306.2L1703.2 1316.0L1695.6 1326.4L1688.6 1337.5L1682.3 1349.1L1676.7 1361.1L1671.9 1373.4L1668.0 1385.7L1664.9 1398.1L1664.9 1398.1L1592.7 1744.1L1592.7 1744.1L1605.9 1756.7L1620.6 1766.9L1636.7 1774.4L1654.0 1779.2L1672.3 1781.2L1691.5 1780.4L1711.3 1776.9L1731.5 1770.6L1752.0 1761.7L1772.4 1750.2L1792.7 1736.2L1812.5 1719.9L1831.7 1701.5L1850.0 1681.1L1867.3 1659.1L1883.4 1635.5L1898.1 1610.6L1911.2 1584.8Z" fill="none" stroke="#101112" stroke-width="1.3" stroke-linejoin="round" /><path d="M1809.2 1270.5L1801.6 1267.5L1793.5 1265.7L1784.9 1265.3L1776.0 1266.1L1766.8 1268.2L1757.4 1271.6L1748.0 1276.2L1738.6 1282.0L1729.4 1288.9L1720.4 1296.9L1711.8 1305.8L1703.6 1315.5L1695.9 1326.0L1688.8 1337.2L1682.4 1348.8L1676.8 1360.9L1672.0 1373.2L1668.0 1385.6L1664.9 1398.1L1701.0 1416.1L1704.1 1403.7L1708.0 1391.2L1712.8 1378.9L1718.5 1366.9L1724.9 1355.2L1732.0 1344.0L1739.6 1333.5L1747.8 1323.8L1756.5 1314.9L1765.5 1306.9L1774.7 1300.0L1784.1 1294.2L1793.5 1289.6L1802.8 1286.2L1812.0 1284.1L1821.0 1283.3L1829.6 1283.7L1837.7 1285.5L1845.3 1288.5Z" fill="url(#ag4)" stroke="#101112" stroke-width="1.1" stroke-linejoin="round" /><path d="M1664.9 1398.1L1592.7 1744.1L1628.8 1762.1L1701.0 1416.1Z" fill="#6a6c70" stroke="#101112" stroke-width="1.2" stroke-linejoin="round" /><path d="M1592.7 1744.1L1602.8 1754.2L1613.9 1762.7L1625.9 1769.7L1661.9 1787.7L1650.0 1780.8L1638.9 1772.2L1628.8 1762.1Z" fill="url(#ag2)" stroke="#101112" stroke-width="1.1" stroke-linejoin="round" /><path d="M1947.3 1602.9L1875.1 1329.1L1875.1 1329.1L1872.0 1319.7L1868.1 1311.3L1863.3 1303.8L1857.7 1297.4L1851.4 1292.2L1844.4 1288.1L1836.8 1285.2L1828.7 1283.6L1820.1 1283.3L1811.2 1284.3L1802.0 1286.5L1792.7 1290.0L1783.4 1294.6L1774.1 1300.5L1764.9 1307.4L1756.0 1315.4L1747.4 1324.3L1739.3 1334.0L1731.7 1344.5L1724.7 1355.6L1718.3 1367.2L1712.7 1379.1L1708.0 1391.4L1704.0 1403.7L1701.0 1416.1L1701.0 1416.1L1628.8 1762.1L1628.8 1762.1L1641.9 1774.8L1656.6 1784.9L1672.7 1792.4L1690.0 1797.2L1708.3 1799.2L1727.5 1798.5L1747.3 1794.9L1767.6 1788.7L1788.0 1779.7L1808.5 1768.2L1828.7 1754.2L1848.6 1738.0L1867.7 1719.5L1886.1 1699.2L1903.4 1677.1L1919.4 1653.5L1934.1 1628.7L1947.3 1602.9Z" fill="#5a5b5d" stroke="#101112" stroke-width="1.3" stroke-linejoin="round" /><path d="M1741.7 1460.4L1733.6 1471.0L1726.1 1482.2L1719.2 1494.0L1713.1 1506.3L1707.8 1518.9L1703.4 1531.7L1699.9 1544.5L1697.4 1557.2L1695.9 1569.7L1695.4 1581.8L1695.9 1593.4L1697.4 1604.4L1699.9 1614.6L1703.4 1624.0L1707.8 1632.3L1713.1 1639.7L1719.2 1645.8L1726.1 1650.8L1733.6 1654.5L1741.7 1656.9L1750.4 1658.0L1759.4 1657.7L1768.8 1656.1L1778.4 1653.2L1788.0 1649.0L1797.7 1643.5L1807.3 1636.9L1816.7 1629.1L1825.7 1620.3L1834.4 1610.6L1842.5 1600.1L1850.0 1588.8L1856.9 1577.0L1863.0 1564.7L1868.3 1552.1" fill="none" stroke="#c8d4ee" stroke-width="2.2" stroke-linejoin="round" /><path d="M1882.1 1488.5L1881.6 1476.7L1880.0 1465.6L1877.5 1455.2L1874.0 1445.7L1869.5 1437.2L1864.1 1429.8L1857.9 1423.5L1851.0 1418.5L1843.3 1414.7L1835.1 1412.3L1826.3 1411.2L1817.1 1411.4L1807.6 1413.1L1797.9 1416.0L1788.0 1420.3L1778.2 1425.9L1768.5 1432.6L1759.0 1440.5L1749.8 1449.4L1741.0 1459.3L1732.8 1470.0L1725.1 1481.4L1718.1 1493.4L1712.0 1505.9L1706.6 1518.6L1702.1 1531.6L1698.6 1544.6L1696.0 1557.6L1694.5 1570.2L1694.0 1582.5L1694.5 1594.3L1696.0 1605.5L1698.6 1615.8L1702.1 1625.3L1706.6 1633.8L1712.0 1641.3L1718.1 1647.5L1725.1 1652.6L1732.8 1656.3L1741.0 1658.8L1749.8 1659.9L1759.0 1659.6L1768.5 1658.0L1778.2 1655.0L1788.0 1650.7L1797.9 1645.1L1807.6 1638.4L1817.1 1630.5L1826.3 1621.6L1835.1 1611.8L1843.3 1601.1L1851.0 1589.6L1857.9 1577.6L1864.1 1565.2L1869.5 1552.4L1874.0 1539.4L1877.5 1526.4L1880.0 1513.5L1881.6 1500.8L1882.1 1488.5" fill="none" stroke="#101112" stroke-width="1.1" stroke-linejoin="round" /><path d="M1837.2 1437.1L1830.7 1434.5L1823.6 1433.0L1816.2 1432.6L1808.5 1433.4L1800.5 1435.2L1792.4 1438.2L1784.3 1442.2L1776.2 1447.3L1768.2 1453.3L1760.5 1460.2L1753.0 1468.0L1745.9 1476.5L1739.3 1485.6L1733.3 1495.3L1727.8 1505.4L1723.0 1515.8L1718.9 1526.5L1715.5 1537.3L1713.0 1548.0L1711.3 1558.6L1710.4 1569.0L1710.3 1579.0L1711.2 1588.5L1712.8 1597.4L1715.3 1605.7L1718.6 1613.1L1722.6 1619.8L1727.4 1625.5L1732.8 1630.2L1738.8 1633.9L1832.0 1680.5L1838.5 1683.1L1845.6 1684.6L1853.0 1685.0L1860.7 1684.2L1868.7 1682.3L1876.8 1679.4L1884.9 1675.3L1893.0 1670.3L1901.0 1664.3L1908.7 1657.4L1916.2 1649.6L1923.3 1641.1L1929.9 1632.0L1935.9 1622.3L1941.4 1612.2L1946.2 1601.7L1950.3 1591.1L1953.7 1580.3L1956.2 1569.6L1957.9 1559.0L1958.8 1548.6L1958.9 1538.6L1958.0 1529.1L1956.4 1520.2L1953.9 1511.9L1950.6 1504.4L1946.6 1497.8L1941.8 1492.1L1936.4 1487.4L1930.4 1483.7Z" fill="url(#ag1)" stroke="#101112" stroke-width="1.3" stroke-linejoin="round" /><path d="M1788.0 1440.2L1881.2 1486.8" fill="none" stroke="#101112" stroke-width="1.1" stroke-linejoin="round" /><path d="M2040.4 1355.5L2027.3 1342.8L2012.6 1332.7L1996.5 1325.2L1979.2 1320.4L1960.9 1318.4L1941.7 1319.1L1921.9 1322.6L1901.6 1328.9L1881.2 1337.9L1860.7 1349.4L1840.5 1363.3L1820.6 1379.6L1801.5 1398.0L1783.1 1418.4L1765.8 1440.5L1749.8 1464.1L1735.1 1488.9L1721.9 1514.7L1721.9 1514.7L1794.1 1788.5L1794.1 1788.5L1797.2 1797.8L1801.1 1806.3L1805.9 1813.7L1811.5 1820.1L1817.8 1825.4L1824.8 1829.5L1832.4 1832.3L1840.5 1833.9L1849.1 1834.3L1858.0 1833.3L1867.2 1831.1L1876.5 1827.6L1885.8 1822.9L1895.1 1817.1L1904.3 1810.2L1913.2 1802.2L1921.8 1793.3L1929.9 1783.6L1937.5 1773.1L1944.5 1762.0L1950.9 1750.4L1956.5 1738.4L1961.2 1726.2L1965.2 1713.8L1968.2 1701.5L1968.2 1701.5L2040.4 1355.5Z" fill="none" stroke="#101112" stroke-width="1.3" stroke-linejoin="round" /><path d="M2007.3 1329.8L1991.1 1323.4L1973.9 1319.5L1955.7 1318.3L1936.7 1319.7L1917.2 1323.9L1897.3 1330.6L1877.3 1339.9L1857.3 1351.6L1837.5 1365.6L1818.2 1381.9L1799.5 1400.1L1781.6 1420.2L1764.8 1442.0L1749.1 1465.1L1734.8 1489.4L1721.9 1514.7L1758.0 1532.8L1770.8 1507.5L1785.2 1483.1L1800.8 1460.0L1817.7 1438.2L1835.6 1418.1L1854.2 1399.9L1873.6 1383.6L1893.3 1369.6L1913.3 1357.9L1933.4 1348.6L1953.2 1341.9L1972.8 1337.8L1991.7 1336.3L2009.9 1337.5L2027.2 1341.4L2043.3 1347.9Z" fill="url(#ag2)" stroke="#101112" stroke-width="1.1" stroke-linejoin="round" /><path d="M1881.2 1337.9L1917.2 1355.9" fill="none" stroke="#101112" stroke-width="1.1" stroke-linejoin="round" /><path d="M1721.9 1514.7L1794.1 1788.5L1830.2 1806.5L1758.0 1532.8Z" fill="#2a2b2b" stroke="#101112" stroke-width="1.2" stroke-linejoin="round" /><path d="M1794.1 1788.5L1797.1 1797.7L1800.9 1806.0L1805.6 1813.3L1811.0 1819.7L1817.1 1824.9L1823.9 1829.1L1860.0 1847.1L1853.2 1843.0L1847.0 1837.7L1841.6 1831.4L1837.0 1824.0L1833.2 1815.7L1830.2 1806.5Z" fill="url(#ag3)" stroke="#101112" stroke-width="1.1" stroke-linejoin="round" /><path d="M2076.5 1373.5L2063.3 1360.8L2048.6 1350.7L2032.5 1343.2L2015.2 1338.4L1996.9 1336.4L1977.7 1337.1L1957.9 1340.7L1937.7 1346.9L1917.2 1355.9L1896.8 1367.4L1876.5 1381.4L1856.7 1397.7L1837.5 1416.1L1819.2 1436.4L1801.9 1458.5L1785.8 1482.1L1771.1 1506.9L1758.0 1532.8L1758.0 1532.8L1830.2 1806.5L1830.2 1806.5L1833.2 1815.9L1837.1 1824.3L1841.9 1831.8L1847.5 1838.2L1853.9 1843.4L1860.9 1847.5L1868.5 1850.4L1876.6 1852.0L1885.2 1852.3L1894.1 1851.3L1903.2 1849.1L1912.5 1845.7L1921.9 1841.0L1931.2 1835.1L1940.4 1828.2L1949.3 1820.3L1957.8 1811.4L1966.0 1801.6L1973.6 1791.2L1980.6 1780.1L1986.9 1768.5L1992.5 1756.5L1997.3 1744.2L2001.2 1731.9L2004.3 1719.5L2004.3 1719.5L2076.5 1373.5Z" fill="#5a5b5d" stroke="#101112" stroke-width="1.3" stroke-linejoin="round" /><path d="M2041.3 1617.6V1867.0A26.5 13.25 0 0 0 2094.3 1867.0V1617.6Z" fill="url(#gT)" stroke="#101112" stroke-width="1.2"/><path d="M2031.1 1636.0L2041.9 1614.8L2043.6 1612.2L2046.4 1609.8L2050.1 1607.7L2054.6 1606.1L2059.7 1605.0L2065.1 1604.4L2070.6 1604.4L2076.0 1605.0L2081.1 1606.1L2085.6 1607.7L2089.3 1609.8L2092.0 1612.2L2093.8 1614.8L2094.3 1617.6L2093.8 1620.3L2092.0 1623.0L2089.3 1625.4L2085.6 1627.4L2081.1 1629.1L2076.0 1630.2Z" fill="#8f9bb5" stroke="#101112" stroke-width="1.2" stroke-linejoin="round" /><ellipse cx="2067.8" cy="1617.6" rx="13.5" ry="7" fill="#55575c" stroke="#101112" stroke-width="1.1"/><path d="M2041.3 1714.6A26.5 13.25 0 0 0 2094.3 1714.6" fill="none" stroke="#101112" stroke-width="1.1"/><path d="M1902.7 1818.7L1902.7 1957.2L1953.6 1985.5L2039.8 1942.3L2049.0 1918.7L2073.8 1863.0L2089.3 1725.3Z" fill="#5a5b5d" stroke="#101112" stroke-width="1.3" stroke-linejoin="round" /><path d="M1859.7 1935.7L1910.6 1964.0L1953.6 1985.5L1902.7 1957.2Z" fill="#2a2b2b" stroke="#101112" stroke-width="1.3" stroke-linejoin="round" /><path d="M1974.5 1618.1L1966.8 1615.1L1958.6 1613.3L1950.0 1612.9L1941.0 1613.8L1931.7 1615.9L1922.3 1619.4L1912.9 1624.1L1903.4 1630.0L1894.2 1637.0L1885.1 1645.0L1876.5 1654.0L1868.2 1663.9L1860.5 1674.5L1853.5 1685.8L1847.1 1697.6L1841.5 1709.7L1836.7 1722.1L1832.9 1734.7L1829.9 1747.2L1827.9 1759.5L1826.9 1771.5L1826.8 1783.2L1827.8 1794.2L1829.7 1804.6L1832.6 1814.2L1836.4 1822.9L1841.1 1830.7L1846.7 1837.3L1853.0 1842.8L1860.0 1847.1L1974.5 1904.4L1982.2 1907.4L1990.4 1909.2L1999.0 1909.6L2008.0 1908.7L2017.3 1906.6L2026.7 1903.1L2036.2 1898.4L2045.6 1892.5L2054.9 1885.5L2063.9 1877.5L2072.5 1868.5L2080.8 1858.6L2088.5 1848.0L2095.5 1836.7L2101.9 1824.9L2107.5 1812.8L2112.3 1800.4L2116.1 1787.8L2119.1 1775.3L2121.1 1763.0L2122.1 1750.9L2122.2 1739.3L2121.2 1728.3L2119.3 1717.9L2116.4 1708.3L2112.6 1699.6L2107.9 1691.8L2102.3 1685.2L2096.0 1679.7L2089.0 1675.4Z" fill="url(#ag3)" stroke="#101112" stroke-width="1.3" stroke-linejoin="round" /><path d="M1922.6 1306.5L1922.6 1570.8L1965.6 1592.3L1965.6 1328.0Z" fill="#3f4042" stroke="#101112" stroke-width="1.3" stroke-linejoin="round" /><path d="M1922.6 1570.8L1921.8 1578.2L1964.8 1599.7L1965.6 1592.3Z" fill="#545557" stroke="#545557" stroke-width="0.8" stroke-linejoin="round" /><path d="M1921.8 1578.2L1920.6 1585.7L1963.6 1607.2L1964.8 1599.7Z" fill="#68696b" stroke="#68696b" stroke-width="0.8" stroke-linejoin="round" /><path d="M1920.6 1585.7L1918.9 1593.5L1961.9 1615.0L1963.6 1607.2Z" fill="#9b8f80" stroke="#9b8f80" stroke-width="0.8" stroke-linejoin="round" /><path d="M1918.9 1593.5L1916.8 1601.4L1959.8 1622.9L1961.9 1615.0Z" fill="#b1bdc2" stroke="#b1bdc2" stroke-width="0.8" stroke-linejoin="round" /><path d="M1916.8 1601.4L1914.4 1609.6L1957.4 1631.1L1959.8 1622.9Z" fill="#acb9c3" stroke="#acb9c3" stroke-width="0.8" stroke-linejoin="round" /><path d="M1914.4 1609.6L1911.5 1617.9L1954.5 1639.4L1957.4 1631.1Z" fill="#a7b6c5" stroke="#a7b6c5" stroke-width="0.8" stroke-linejoin="round" /><path d="M1911.5 1617.9L1908.4 1626.5L1951.3 1648.0L1954.5 1639.4Z" fill="#92a9ca" stroke="#92a9ca" stroke-width="0.8" stroke-linejoin="round" /><path d="M1908.4 1626.5L1904.9 1635.1L1947.9 1656.6L1951.3 1648.0Z" fill="#7a9ad0" stroke="#7a9ad0" stroke-width="0.8" stroke-linejoin="round" /><path d="M1904.9 1635.1L1901.1 1644.0L1944.1 1665.5L1947.9 1656.6Z" fill="#7a9ad0" stroke="#7a9ad0" stroke-width="0.8" stroke-linejoin="round" /><path d="M1901.1 1644.0L1897.0 1652.9L1940.0 1674.4L1944.1 1665.5Z" fill="#82a0d2" stroke="#82a0d2" stroke-width="0.8" stroke-linejoin="round" /><path d="M1897.0 1652.9L1892.7 1662.0L1935.7 1683.5L1940.0 1674.4Z" fill="#8fa9d7" stroke="#8fa9d7" stroke-width="0.8" stroke-linejoin="round" /><path d="M1892.7 1662.0L1888.2 1671.2L1931.2 1692.7L1935.7 1683.5Z" fill="#9ab1da" stroke="#9ab1da" stroke-width="0.8" stroke-linejoin="round" /><path d="M1888.2 1671.2L1883.5 1680.5L1926.5 1702.0L1931.2 1692.7Z" fill="#97afd8" stroke="#97afd8" stroke-width="0.8" stroke-linejoin="round" /><path d="M1883.5 1680.5L1878.6 1689.8L1921.6 1711.3L1926.5 1702.0Z" fill="#89a3d0" stroke="#89a3d0" stroke-width="0.8" stroke-linejoin="round" /><path d="M1878.6 1689.8L1878.1 1691.0L1921.0 1712.5L1921.6 1711.3Z" fill="#8ea9d7" stroke="#8ea9d7" stroke-width="0.8" stroke-linejoin="round" /><path d="M1922.6 1570.8L1921.8 1578.2L1920.6 1585.7L1918.9 1593.5L1916.8 1601.4L1914.4 1609.6L1911.5 1617.9L1908.4 1626.5L1904.9 1635.1L1901.1 1644.0L1897.0 1652.9L1892.7 1662.0L1888.2 1671.2L1883.5 1680.5L1878.6 1689.8L1878.1 1691.0" fill="none" stroke="#101112" stroke-width="1.1" stroke-linejoin="round" /><path d="M1965.6 1328.0L1965.6 1592.3L1964.8 1599.7L1963.6 1607.2L1961.9 1615.0L1959.8 1622.9L1957.4 1631.1L1954.5 1639.4L1951.3 1648.0L1947.9 1656.6L1944.1 1665.5L1940.0 1674.4L1935.7 1683.5L1931.2 1692.7L1926.5 1702.0L1921.6 1711.3L1921.0 1712.5L1925.3 1723.7L1933.6 1710.2L1942.7 1697.5L1952.5 1685.8L1962.8 1675.3L1973.6 1665.9L1984.7 1658.0L1996.0 1651.6L2007.2 1646.8L2018.3 1643.6L2029.2 1642.1L2039.5 1642.3L2049.3 1644.2L2058.4 1647.8L2066.7 1653.0L2071.0 1637.5L2070.4 1636.9L2065.5 1632.4L2060.8 1627.9L2056.3 1623.2L2052.0 1618.4L2047.9 1613.5L2044.1 1608.5L2040.6 1603.3L2037.5 1598.0L2034.6 1592.5L2032.2 1586.8L2030.1 1580.9L2028.4 1574.8L2027.2 1568.5L2026.4 1561.9L2026.4 1297.6Z" fill="#5a5b5d" stroke="#101112" stroke-width="1.3" stroke-linejoin="round" /><path d="M1925.3 1723.7L1933.6 1710.2L1942.7 1697.5L1952.5 1685.8L1962.8 1675.3L1973.6 1665.9L1984.7 1658.0L1996.0 1651.6L2007.2 1646.8L2018.3 1643.6L2029.2 1642.1L2039.5 1642.3L2049.3 1644.2L2058.4 1647.8L2066.7 1653.0" fill="none" stroke="#dfe8f8" stroke-width="3" stroke-linejoin="round" /><path d="M1927.4 1727.4L1935.7 1713.9L1944.8 1701.2L1954.6 1689.5L1965.0 1678.9L1975.8 1669.6L1986.9 1661.7L1998.1 1655.3L2009.4 1650.4L2020.5 1647.3L2031.3 1645.8L2041.7 1646.0L2051.5 1647.9L2060.6 1651.5L2068.8 1656.7" fill="none" stroke="#101112" stroke-width="1" stroke-linejoin="round" /><path d="M1979.0 1321.3L1979.0 1614.2L1991.8 1607.8L1991.8 1314.9Z" fill="#47484b" stroke="#101112" stroke-width="1" stroke-linejoin="round" /><path d="M1991.8 1314.9L1991.8 1625.2L2001.7 1635.8L2011.6 1615.3L2011.6 1305.0Z" fill="#55565a" stroke="#101112" stroke-width="1" stroke-linejoin="round" /><path d="M2011.6 1305.0L2011.6 1597.9L2016.5 1595.5L2016.5 1302.6Z" fill="#636467" stroke="#101112" stroke-width="1" stroke-linejoin="round" /><ellipse cx="1998.8" cy="1625.1" rx="14" ry="21" fill="url(#gPin)" stroke="#101112" stroke-width="1" transform="rotate(28 1998.8 1625.1)"/><path d="M1854.7 1710.9V1960.3A26.5 13.25 0 0 0 1907.7 1960.3V1710.9Z" fill="url(#gT)" stroke="#101112" stroke-width="1.2"/><path d="M1854.7 1710.9L1855.2 1708.2L1857.0 1705.5L1859.7 1703.1L1863.4 1701.1L1867.9 1699.4L1873.0 1698.3L1917.9 1692.5L1907.1 1713.7L1905.4 1716.3L1902.6 1718.7L1898.9 1720.8L1894.4 1722.4L1889.4 1723.5L1883.9 1724.1L1878.4 1724.1L1873.0 1723.5L1867.9 1722.4L1863.4 1720.8L1859.7 1718.7L1857.0 1716.3L1855.2 1713.7Z" fill="#8f9bb5" stroke="#101112" stroke-width="1.2" stroke-linejoin="round" /><ellipse cx="1881.2" cy="1710.9" rx="13.5" ry="7" fill="#55575c" stroke="#101112" stroke-width="1.1"/><path d="M1854.7 1807.9A26.5 13.25 0 0 0 1907.7 1807.9" fill="none" stroke="#101112" stroke-width="1.1"/><path d="M2191.0 1430.8L2177.9 1418.1L2163.2 1408.0L2147.1 1400.5L2129.8 1395.7L2111.5 1393.7L2092.3 1394.4L2072.5 1398.0L2052.2 1404.2L2031.8 1413.2L2011.3 1424.7L1991.1 1438.7L1971.3 1454.9L1952.1 1473.4L1933.8 1493.7L1916.5 1515.8L1900.4 1539.4L1885.7 1564.2L1872.5 1590.0L1872.5 1590.0L1944.7 1863.8L1944.7 1863.8L1947.8 1873.2L1951.7 1881.6L1956.5 1889.0L1962.1 1895.4L1968.4 1900.7L1975.4 1904.8L1983.0 1907.7L1991.2 1909.3L1999.7 1909.6L2008.6 1908.6L2017.8 1906.4L2027.1 1902.9L2036.5 1898.2L2045.8 1892.4L2054.9 1885.5L2063.8 1877.5L2072.4 1868.6L2080.5 1858.9L2088.1 1848.4L2095.2 1837.3L2101.5 1825.7L2107.1 1813.8L2111.9 1801.5L2115.8 1789.1L2118.8 1776.8L2118.8 1776.8L2191.0 1430.8Z" fill="none" stroke="#101112" stroke-width="1.3" stroke-linejoin="round" /><path d="M2157.9 1405.2L2141.7 1398.7L2124.5 1394.8L2106.3 1393.6L2087.3 1395.1L2067.8 1399.2L2047.9 1405.9L2027.9 1415.2L2007.9 1426.9L1988.1 1440.9L1968.8 1457.2L1950.1 1475.4L1932.2 1495.5L1915.4 1517.3L1899.7 1540.4L1885.4 1564.8L1872.5 1590.0L1908.6 1608.1L1921.4 1582.8L1935.8 1558.4L1951.5 1535.3L1968.3 1513.6L1986.2 1493.5L2004.9 1475.2L2024.2 1459.0L2043.9 1444.9L2063.9 1433.2L2084.0 1423.9L2103.9 1417.2L2123.4 1413.1L2142.3 1411.6L2160.5 1412.8L2177.8 1416.7L2194.0 1423.2Z" fill="url(#ag2)" stroke="#101112" stroke-width="1.1" stroke-linejoin="round" /><path d="M2031.8 1413.2L2067.8 1431.2" fill="none" stroke="#101112" stroke-width="1.1" stroke-linejoin="round" /><path d="M1872.5 1590.0L1944.7 1863.8L1980.8 1881.9L1908.6 1608.1Z" fill="#2a2b2b" stroke="#101112" stroke-width="1.2" stroke-linejoin="round" /><path d="M1944.7 1863.8L1947.7 1873.0L1951.5 1881.3L1956.2 1888.6L1961.6 1895.0L1967.7 1900.2L1974.5 1904.4L2010.6 1922.4L2003.8 1918.3L1997.7 1913.0L1992.2 1906.7L1987.6 1899.3L1983.8 1891.0L1980.8 1881.9Z" fill="url(#ag3)" stroke="#101112" stroke-width="1.1" stroke-linejoin="round" /><path d="M2227.1 1448.8L2213.9 1436.2L2199.2 1426.0L2183.2 1418.5L2165.9 1413.7L2147.5 1411.7L2128.4 1412.5L2108.5 1416.0L2088.3 1422.3L2067.8 1431.2L2047.4 1442.7L2027.1 1456.7L2007.3 1473.0L1988.2 1491.4L1969.8 1511.7L1952.5 1533.8L1936.4 1557.4L1921.7 1582.2L1908.6 1608.1L1908.6 1608.1L1980.8 1881.9L1980.8 1881.9L1983.8 1891.2L1987.8 1899.6L1992.5 1907.1L1998.1 1913.5L2004.5 1918.7L2011.5 1922.8L2019.1 1925.7L2027.2 1927.3L2035.8 1927.6L2044.7 1926.7L2053.9 1924.4L2063.2 1921.0L2072.5 1916.3L2081.8 1910.4L2091.0 1903.5L2099.9 1895.6L2108.5 1886.7L2116.6 1876.9L2124.2 1866.5L2131.2 1855.4L2137.5 1843.8L2143.1 1831.8L2147.9 1819.5L2151.8 1807.2L2154.9 1794.8L2154.9 1794.8L2227.1 1448.8Z" fill="#5a5b5d" stroke="#101112" stroke-width="1.3" stroke-linejoin="round" /><path d="M2127.8 1555.6L2119.8 1552.4L2111.2 1550.5L2102.2 1550.1L2092.7 1551.0L2083.0 1553.3L2073.2 1556.9L2063.3 1561.8L2053.4 1567.9L2043.7 1575.3L2034.2 1583.7L2025.2 1593.1L2016.6 1603.5L2008.5 1614.6L2001.1 1626.4L1994.4 1638.7L1988.6 1651.4L1983.6 1664.4L1979.5 1677.6L1976.4 1690.6L1974.3 1703.6L1973.2 1716.2L1973.2 1728.3L1974.2 1739.9L1976.2 1750.8L1979.2 1760.9L1983.2 1770.0L1988.2 1778.1L1994.0 1785.0L2000.6 1790.8L2007.9 1795.3L2012.5 1797.6L2020.5 1800.7L2029.1 1802.6L2038.1 1803.0L2047.5 1802.1L2057.2 1799.9L2067.1 1796.2L2077.0 1791.3L2086.9 1785.2L2096.6 1777.8L2106.0 1769.4L2115.1 1760.0L2123.7 1749.6L2131.8 1738.5L2139.2 1726.7L2145.8 1714.4L2151.7 1701.7L2156.7 1688.7L2160.8 1675.6L2163.9 1662.5L2166.0 1649.6L2167.0 1636.9L2167.1 1624.8L2166.1 1613.2L2164.1 1602.3L2161.0 1592.3L2157.0 1583.1L2152.1 1575.1L2146.3 1568.1L2139.7 1562.3L2132.4 1557.9Z" fill="url(#ag5)" stroke="#101112" stroke-width="1.3" stroke-linejoin="round" /><path d="M2067.8 1559.4L2072.4 1561.7" fill="none" stroke="#101112" stroke-width="1.1" stroke-linejoin="round" /><path d="M2167.2 1630.3L2166.7 1618.5L2165.1 1607.2L2162.6 1596.8L2159.0 1587.2L2154.5 1578.7L2149.1 1571.2L2142.9 1564.9L2135.8 1559.8L2128.1 1556.0L2119.8 1553.5L2111.0 1552.4L2101.7 1552.7L2092.1 1554.3L2082.3 1557.3L2072.4 1561.7L2062.5 1567.2L2052.7 1574.0L2043.2 1582.0L2033.9 1591.0L2025.1 1600.9L2016.7 1611.7L2009.0 1623.2L2002.0 1635.3L1995.8 1647.8L1990.4 1660.7L1985.9 1673.8L1982.3 1686.9L1979.8 1699.9L1978.2 1712.7L1977.7 1725.1L1978.2 1737.0L1979.8 1748.2L1982.3 1758.6L1985.9 1768.2L1990.4 1776.8L1995.8 1784.2L2002.0 1790.6L2009.0 1795.7L2016.7 1799.4L2025.1 1801.9L2033.9 1803.0L2043.2 1802.7L2052.7 1801.1L2062.5 1798.1L2072.4 1793.8L2082.3 1788.2L2092.1 1781.4L2101.7 1773.4L2111.0 1764.5L2119.8 1754.5L2128.1 1743.7L2135.8 1732.3L2142.9 1720.2L2149.1 1707.6L2154.5 1694.7L2159.0 1681.6L2162.6 1668.5L2165.1 1655.5L2166.7 1642.7Z" fill="#5a5b5d" stroke="#101112" stroke-width="1.3" stroke-linejoin="round" /><path d="M2122.0 1578.5L2115.4 1575.9L2108.3 1574.4L2100.8 1574.0L2093.0 1574.7L2085.0 1576.6L2076.9 1579.6L2068.6 1583.7L2060.5 1588.8L2052.4 1594.8L2044.6 1601.8L2037.1 1609.6L2030.0 1618.2L2023.3 1627.4L2017.2 1637.1L2011.7 1647.3L2006.8 1657.9L2002.7 1668.6L1999.3 1679.5L1996.8 1690.3L1995.0 1701.0L1994.1 1711.4L1994.1 1721.5L1994.9 1731.1L1996.6 1740.1L1999.1 1748.4L2002.4 1756.0L2006.5 1762.7L2011.3 1768.4L2016.8 1773.2L2022.8 1776.9L2111.3 1821.1L2117.9 1823.8L2125.0 1825.3L2132.5 1825.7L2140.3 1824.9L2148.3 1823.0L2156.5 1820.0L2164.7 1816.0L2172.9 1810.9L2180.9 1804.8L2188.7 1797.8L2196.2 1790.0L2203.3 1781.5L2210.0 1772.3L2216.1 1762.5L2221.6 1752.3L2226.5 1741.8L2230.6 1731.0L2234.0 1720.2L2236.6 1709.3L2238.3 1698.6L2239.2 1688.2L2239.2 1678.1L2238.4 1668.5L2236.7 1659.5L2234.2 1651.2L2230.9 1643.7L2226.8 1637.0L2222.0 1631.2L2216.6 1626.5L2210.5 1622.7Z" fill="url(#ag6)" stroke="#101112" stroke-width="1.3" stroke-linejoin="round" /><path d="M2072.4 1581.7L2160.9 1625.9" fill="none" stroke="#101112" stroke-width="1.1" stroke-linejoin="round" /><path d="M2239.3 1682.7L2238.9 1672.9L2237.6 1663.6L2235.5 1655.0L2232.5 1647.1L2228.8 1640.0L2224.3 1633.8L2219.2 1628.5L2213.4 1624.3L2207.0 1621.2L2200.1 1619.2L2192.8 1618.3L2185.1 1618.5L2177.2 1619.8L2169.1 1622.3L2160.9 1625.9L2152.7 1630.5L2144.6 1636.1L2136.7 1642.7L2129.0 1650.1L2121.7 1658.4L2114.8 1667.3L2108.4 1676.8L2102.6 1686.8L2097.5 1697.2L2093.0 1707.9L2089.3 1718.7L2086.3 1729.6L2084.2 1740.3L2082.9 1750.9L2082.5 1761.1L2082.9 1771.0L2084.2 1780.3L2086.3 1788.9L2089.3 1796.8L2093.0 1803.9L2097.5 1810.1L2102.6 1815.3L2108.4 1819.5L2114.8 1822.7L2121.7 1824.7L2129.0 1825.6L2136.7 1825.4L2144.6 1824.0L2152.7 1821.6L2160.9 1818.0L2169.1 1813.4L2177.2 1807.7L2185.1 1801.2L2192.8 1793.7L2200.1 1785.5L2207.0 1776.6L2213.4 1767.1L2219.2 1757.1L2224.3 1746.7L2228.8 1736.0L2232.5 1725.2L2235.5 1714.3L2237.6 1703.6L2238.9 1693.0Z" fill="#5a5b5d" stroke="#101112" stroke-width="1.3" stroke-linejoin="round" /><path d="M2186.3 1671.2L2182.9 1669.9L2179.2 1669.1L2175.4 1668.9L2171.4 1669.3L2167.3 1670.3L2163.2 1671.8L2159.0 1673.9L2154.8 1676.5L2150.7 1679.6L2146.7 1683.1L2142.8 1687.1L2139.2 1691.5L2135.8 1696.2L2132.7 1701.2L2129.8 1706.4L2127.4 1711.8L2125.2 1717.3L2123.5 1722.8L2122.2 1728.4L2121.3 1733.8L2120.9 1739.2L2120.8 1744.3L2121.3 1749.2L2122.1 1753.8L2123.4 1758.1L2125.1 1762.0L2127.2 1765.4L2129.6 1768.3L2132.4 1770.8L2135.5 1772.7L2405.2 1907.5L2408.5 1908.8L2412.2 1909.6L2416.0 1909.8L2420.0 1909.4L2424.1 1908.4L2428.3 1906.9L2432.5 1904.8L2436.6 1902.2L2440.7 1899.1L2444.7 1895.6L2448.6 1891.6L2452.2 1887.2L2455.6 1882.5L2458.8 1877.5L2461.6 1872.3L2464.1 1866.9L2466.2 1861.4L2467.9 1855.8L2469.2 1850.3L2470.1 1844.8L2470.5 1839.5L2470.6 1834.4L2470.1 1829.4L2469.3 1824.8L2468.0 1820.6L2466.3 1816.7L2464.2 1813.3L2461.8 1810.4L2459.0 1807.9L2455.9 1806.0Z" fill="url(#ag7)" stroke="#101112" stroke-width="1.3" stroke-linejoin="round" /><path d="M2160.9 1672.8L2430.5 1807.6" fill="none" stroke="#101112" stroke-width="1.1" stroke-linejoin="round" /><path d="M2470.6 1836.7L2470.4 1831.7L2469.7 1826.9L2468.6 1822.5L2467.1 1818.5L2465.2 1814.8L2463.0 1811.7L2460.3 1809.0L2457.3 1806.8L2454.1 1805.2L2450.6 1804.2L2446.8 1803.7L2442.9 1803.9L2438.9 1804.5L2434.7 1805.8L2430.5 1807.6L2426.3 1810.0L2422.2 1812.9L2418.1 1816.2L2414.2 1820.0L2410.5 1824.2L2407.0 1828.8L2403.7 1833.7L2400.7 1838.8L2398.1 1844.1L2395.8 1849.6L2393.9 1855.1L2392.4 1860.6L2391.3 1866.1L2390.6 1871.6L2390.4 1876.8L2390.6 1881.8L2391.3 1886.6L2392.4 1891.0L2393.9 1895.0L2395.8 1898.7L2398.1 1901.8L2400.7 1904.5L2403.7 1906.7L2407.0 1908.3L2410.5 1909.3L2414.2 1909.8L2418.1 1909.6L2422.2 1908.9L2426.3 1907.7L2430.5 1905.9L2434.7 1903.5L2438.9 1900.6L2442.9 1897.3L2446.8 1893.5L2450.6 1889.2L2454.1 1884.7L2457.3 1879.8L2460.3 1874.7L2463.0 1869.4L2465.2 1863.9L2467.1 1858.4L2468.6 1852.9L2469.7 1847.3L2470.4 1841.9Z" fill="#5a5b5d" stroke="#101112" stroke-width="1.3" stroke-linejoin="round" /><path d="M985.6 658.9V917.0A149.5 74.75 0 0 0 1284.6 917.0V658.9Z" fill="url(#gV)" stroke="#101112" stroke-width="1.3"/><path d="M1029.1 711.7V969.7" stroke="#101112" stroke-width="1.3"/><path d="M985.6 683.9A149.5 74.75 0 0 0 1284.6 683.9V690.9A149.5 74.75 0 0 1 985.6 690.9Z" fill="#98a7c5" stroke="#101112" stroke-width=".9"/><path d="M985.6 675.9A149.5 74.75 0 0 0 1284.6 675.9" fill="none" stroke="#101112" stroke-width="1"/><path d="M985.6 713.4A149.5 74.75 0 0 0 1284.6 713.4V720.4A149.5 74.75 0 0 1 985.6 720.4Z" fill="#98a7c5" stroke="#101112" stroke-width=".9"/><path d="M985.6 705.4A149.5 74.75 0 0 0 1284.6 705.4" fill="none" stroke="#101112" stroke-width="1"/><path d="M985.6 742.9A149.5 74.75 0 0 0 1284.6 742.9V749.9A149.5 74.75 0 0 1 985.6 749.9Z" fill="#98a7c5" stroke="#101112" stroke-width=".9"/><path d="M985.6 734.9A149.5 74.75 0 0 0 1284.6 734.9" fill="none" stroke="#101112" stroke-width="1"/><path d="M1271.0 857.0L1270.6 850.6L1269.5 844.6L1267.6 839.3L1265.1 834.7L1261.9 830.9L1258.1 828.0L1253.8 826.1L1249.1 825.1L1244.1 825.1L1238.8 826.2L1233.4 828.2L1228.0 831.1L1222.7 834.9L1217.5 839.6L1212.6 844.9L1208.1 850.9L1204.1 857.3L1200.6 864.2L1197.8 871.2L1195.5 878.4L1194.1 885.6L1193.3 892.5L1193.3 899.2L1194.1 905.4L1195.5 911.0L1197.8 916.0L1200.6 920.2L1204.1 923.5L1208.1 925.9L1212.6 927.4L1217.5 927.9L1222.7 927.4L1228.0 925.8L1233.4 923.4L1238.8 920.0L1244.1 915.7L1249.1 910.7L1253.8 905.1L1258.1 898.8L1261.9 892.2L1265.1 885.2L1267.6 878.1L1269.5 870.9L1270.6 863.8Z" fill="url(#gHoC)" stroke="#101112" stroke-width="1.3" stroke-linejoin="round" /><path d="M1264.2 856.4L1263.8 850.4L1262.8 844.9L1261.0 840.0L1258.7 835.7L1255.7 832.2L1252.2 829.6L1248.3 827.7L1243.9 826.8L1239.2 826.9L1234.4 827.8L1229.3 829.7L1224.3 832.4L1219.4 835.9L1214.6 840.2L1210.1 845.2L1205.9 850.7L1202.1 856.7L1198.9 863.1L1196.2 869.6L1194.2 876.3L1192.8 882.9L1192.1 889.3L1192.1 895.5L1192.8 901.3L1194.2 906.5L1196.2 911.1L1198.9 915.0L1202.1 918.1L1205.9 920.3L1210.1 921.7L1214.6 922.1L1219.4 921.7L1224.3 920.3L1229.3 918.0L1234.4 914.8L1239.2 910.9L1243.9 906.2L1248.3 901.0L1252.2 895.2L1255.7 889.0L1258.7 882.6L1261.0 875.9L1262.8 869.3L1263.8 862.7Z" fill="none" stroke="#101112" stroke-width="1" stroke-linejoin="round" /><path d="M1257.3 855.8L1257.0 850.3L1256.0 845.2L1254.5 840.7L1252.3 836.8L1249.6 833.5L1246.3 831.1L1242.7 829.4L1238.7 828.6L1234.4 828.6L1229.9 829.5L1225.3 831.2L1220.6 833.7L1216.1 837.0L1211.6 840.9L1207.5 845.5L1203.6 850.6L1200.2 856.1L1197.2 862.0L1194.7 868.0L1192.9 874.1L1191.6 880.2L1190.9 886.2L1190.9 891.9L1191.6 897.2L1192.9 902.0L1194.7 906.2L1197.2 909.8L1200.2 912.7L1203.6 914.7L1207.5 916.0L1211.6 916.4L1216.1 916.0L1220.6 914.7L1225.3 912.5L1229.9 909.6L1234.4 906.0L1238.7 901.7L1242.7 896.9L1246.3 891.6L1249.6 885.9L1252.3 879.9L1254.5 873.8L1256.0 867.7L1257.0 861.7Z" fill="url(#gHoB)" stroke="#101112" stroke-width="1.2" stroke-linejoin="round" /><path d="M1192.1 899.6L1193.7 904.2L1195.9 908.1L1198.6 911.3L1201.9 913.8L1205.5 915.5L1209.5 916.3L1213.8 916.3L1218.3 915.4L1222.9 913.7L1227.6 911.2L1232.1 907.9L1236.5 904.0L1240.7 899.4L1244.6 894.3Z" fill="#a9b8da" stroke="#101112" stroke-width="1" stroke-linejoin="round" /><ellipse cx="1135.1" cy="658.9" rx="149.5" ry="74.75" fill="#94a3bf" stroke="#101112" stroke-width="1.3"/><path d="M1265.4 533.7V791.8A149.5 74.75 0 0 0 1564.4 791.8V533.7Z" fill="url(#gV)" stroke="#101112" stroke-width="1.3"/><path d="M1308.9 586.5V844.5" stroke="#101112" stroke-width="1.3"/><path d="M1265.4 558.7A149.5 74.75 0 0 0 1564.4 558.7V565.7A149.5 74.75 0 0 1 1265.4 565.7Z" fill="#98a7c5" stroke="#101112" stroke-width=".9"/><path d="M1265.4 550.7A149.5 74.75 0 0 0 1564.4 550.7" fill="none" stroke="#101112" stroke-width="1"/><path d="M1265.4 588.2A149.5 74.75 0 0 0 1564.4 588.2V595.2A149.5 74.75 0 0 1 1265.4 595.2Z" fill="#98a7c5" stroke="#101112" stroke-width=".9"/><path d="M1265.4 580.2A149.5 74.75 0 0 0 1564.4 580.2" fill="none" stroke="#101112" stroke-width="1"/><path d="M1265.4 617.7A149.5 74.75 0 0 0 1564.4 617.7V624.7A149.5 74.75 0 0 1 1265.4 624.7Z" fill="#98a7c5" stroke="#101112" stroke-width=".9"/><path d="M1265.4 609.7A149.5 74.75 0 0 0 1564.4 609.7" fill="none" stroke="#101112" stroke-width="1"/><path d="M1550.8 731.8L1550.4 725.4L1549.3 719.4L1547.4 714.1L1544.9 709.5L1541.7 705.7L1537.9 702.8L1533.6 700.9L1528.9 699.9L1523.9 699.9L1518.6 701.0L1513.3 703.0L1507.8 705.9L1502.5 709.7L1497.3 714.4L1492.4 719.7L1488.0 725.7L1483.9 732.2L1480.4 739.0L1477.6 746.1L1475.3 753.2L1473.9 760.4L1473.1 767.3L1473.1 774.0L1473.9 780.2L1475.3 785.8L1477.6 790.8L1480.4 795.0L1483.9 798.3L1488.0 800.8L1492.4 802.2L1497.3 802.7L1502.5 802.2L1507.8 800.7L1513.3 798.2L1518.6 794.8L1523.9 790.5L1528.9 785.5L1533.6 779.9L1537.9 773.6L1541.7 767.0L1544.9 760.0L1547.4 752.9L1549.3 745.7L1550.4 738.6Z" fill="url(#gHoC)" stroke="#101112" stroke-width="1.3" stroke-linejoin="round" /><path d="M1544.0 731.2L1543.6 725.2L1542.6 719.7L1540.8 714.8L1538.5 710.6L1535.5 707.0L1532.0 704.4L1528.1 702.6L1523.7 701.6L1519.0 701.7L1514.2 702.6L1509.2 704.5L1504.1 707.2L1499.2 710.8L1494.4 715.1L1489.9 720.0L1485.7 725.5L1482.0 731.5L1478.7 737.9L1476.1 744.4L1474.0 751.1L1472.6 757.7L1471.9 764.2L1471.9 770.3L1472.6 776.1L1474.0 781.3L1476.1 785.9L1478.7 789.8L1482.0 792.9L1485.7 795.2L1489.9 796.5L1494.4 797.0L1499.2 796.5L1504.1 795.1L1509.2 792.8L1514.2 789.6L1519.0 785.7L1523.7 781.0L1528.1 775.8L1532.0 770.0L1535.5 763.8L1538.5 757.4L1540.8 750.7L1542.6 744.1L1543.6 737.5Z" fill="none" stroke="#101112" stroke-width="1" stroke-linejoin="round" /><path d="M1537.1 730.6L1536.8 725.1L1535.8 720.1L1534.3 715.5L1532.1 711.6L1529.4 708.4L1526.1 705.9L1522.5 704.2L1518.5 703.4L1514.2 703.4L1509.7 704.3L1505.1 706.0L1500.4 708.5L1495.9 711.8L1491.4 715.7L1487.3 720.3L1483.4 725.4L1480.0 730.9L1477.0 736.8L1474.6 742.8L1472.7 748.9L1471.4 755.0L1470.7 761.0L1470.7 766.7L1471.4 772.0L1472.7 776.8L1474.6 781.0L1477.0 784.6L1480.0 787.5L1483.4 789.6L1487.3 790.8L1491.4 791.2L1495.9 790.8L1500.4 789.5L1505.1 787.3L1509.7 784.4L1514.2 780.8L1518.5 776.5L1522.5 771.7L1526.1 766.4L1529.4 760.7L1532.1 754.7L1534.3 748.6L1535.8 742.5L1536.8 736.5Z" fill="url(#gHoB)" stroke="#101112" stroke-width="1.2" stroke-linejoin="round" /><path d="M1471.9 774.4L1473.5 779.0L1475.7 782.9L1478.4 786.1L1481.7 788.6L1485.3 790.3L1489.3 791.1L1493.6 791.1L1498.1 790.2L1502.7 788.5L1507.4 786.0L1511.9 782.7L1516.3 778.8L1520.5 774.2L1524.4 769.1Z" fill="#a9b8da" stroke="#101112" stroke-width="1" stroke-linejoin="round" /><ellipse cx="1414.9" cy="533.7" rx="149.5" ry="74.75" fill="#94a3bf" stroke="#101112" stroke-width="1.3"/><path d="M1542.6 672.3V930.4A149.5 74.75 0 0 0 1841.6 930.4V672.3Z" fill="url(#gV)" stroke="#101112" stroke-width="1.3"/><path d="M1586.1 725.1V983.1" stroke="#101112" stroke-width="1.3"/><path d="M1542.6 697.3A149.5 74.75 0 0 0 1841.6 697.3V704.3A149.5 74.75 0 0 1 1542.6 704.3Z" fill="#98a7c5" stroke="#101112" stroke-width=".9"/><path d="M1542.6 689.3A149.5 74.75 0 0 0 1841.6 689.3" fill="none" stroke="#101112" stroke-width="1"/><path d="M1542.6 726.8A149.5 74.75 0 0 0 1841.6 726.8V733.8A149.5 74.75 0 0 1 1542.6 733.8Z" fill="#98a7c5" stroke="#101112" stroke-width=".9"/><path d="M1542.6 718.8A149.5 74.75 0 0 0 1841.6 718.8" fill="none" stroke="#101112" stroke-width="1"/><path d="M1542.6 756.3A149.5 74.75 0 0 0 1841.6 756.3V763.3A149.5 74.75 0 0 1 1542.6 763.3Z" fill="#98a7c5" stroke="#101112" stroke-width=".9"/><path d="M1542.6 748.3A149.5 74.75 0 0 0 1841.6 748.3" fill="none" stroke="#101112" stroke-width="1"/><path d="M1828.0 870.4L1827.6 864.0L1826.5 858.0L1824.6 852.7L1822.1 848.1L1818.9 844.3L1815.1 841.4L1810.8 839.5L1806.1 838.5L1801.1 838.5L1795.8 839.6L1790.4 841.6L1785.0 844.5L1779.7 848.3L1774.5 853.0L1769.6 858.3L1765.1 864.3L1761.1 870.7L1757.6 877.6L1754.7 884.6L1752.5 891.8L1751.0 899.0L1750.3 905.9L1750.3 912.6L1751.0 918.8L1752.5 924.4L1754.7 929.4L1757.6 933.6L1761.1 936.9L1765.1 939.3L1769.6 940.8L1774.5 941.3L1779.7 940.8L1785.0 939.2L1790.4 936.8L1795.8 933.4L1801.1 929.1L1806.1 924.1L1810.8 918.5L1815.1 912.2L1818.9 905.6L1822.1 898.6L1824.6 891.5L1826.5 884.3L1827.6 877.2Z" fill="url(#gHoC)" stroke="#101112" stroke-width="1.3" stroke-linejoin="round" /><path d="M1821.1 869.8L1820.8 863.8L1819.7 858.3L1818.0 853.4L1815.7 849.1L1812.7 845.6L1809.2 843.0L1805.2 841.1L1800.9 840.2L1796.2 840.3L1791.3 841.2L1786.3 843.1L1781.3 845.8L1776.4 849.3L1771.6 853.6L1767.1 858.6L1762.9 864.1L1759.1 870.1L1755.9 876.5L1753.2 883.0L1751.2 889.7L1749.8 896.3L1749.1 902.7L1749.1 908.9L1749.8 914.7L1751.2 919.9L1753.2 924.5L1755.9 928.4L1759.1 931.5L1762.9 933.7L1767.1 935.1L1771.6 935.5L1776.4 935.1L1781.3 933.7L1786.3 931.4L1791.3 928.2L1796.2 924.3L1800.9 919.6L1805.2 914.4L1809.2 908.6L1812.7 902.4L1815.7 896.0L1818.0 889.3L1819.7 882.7L1820.8 876.1Z" fill="none" stroke="#101112" stroke-width="1" stroke-linejoin="round" /><path d="M1814.3 869.2L1814.0 863.7L1813.0 858.6L1811.4 854.1L1809.3 850.2L1806.5 846.9L1803.3 844.5L1799.7 842.8L1795.7 842.0L1791.4 842.0L1786.9 842.9L1782.2 844.6L1777.6 847.1L1773.0 850.4L1768.6 854.3L1764.5 858.9L1760.6 864.0L1757.2 869.5L1754.2 875.4L1751.7 881.4L1749.9 887.5L1748.6 893.6L1747.9 899.6L1747.9 905.3L1748.6 910.6L1749.9 915.4L1751.7 919.6L1754.2 923.2L1757.2 926.1L1760.6 928.1L1764.5 929.4L1768.6 929.8L1773.0 929.4L1777.6 928.1L1782.2 925.9L1786.9 923.0L1791.4 919.4L1795.7 915.1L1799.7 910.3L1803.3 905.0L1806.5 899.3L1809.3 893.3L1811.4 887.2L1813.0 881.1L1814.0 875.1Z" fill="url(#gHoB)" stroke="#101112" stroke-width="1.2" stroke-linejoin="round" /><path d="M1749.1 913.0L1750.7 917.6L1752.9 921.5L1755.6 924.7L1758.8 927.2L1762.5 928.9L1766.5 929.7L1770.8 929.7L1775.3 928.8L1779.9 927.1L1784.6 924.6L1789.1 921.3L1793.5 917.4L1797.7 912.8L1801.5 907.7Z" fill="#a9b8da" stroke="#101112" stroke-width="1" stroke-linejoin="round" /><ellipse cx="1692.1" cy="672.3" rx="149.5" ry="74.75" fill="#94a3bf" stroke="#101112" stroke-width="1.3"/><path d="M1825.0 1078.6V1336.7A149.5 74.75 0 0 0 2124.0 1336.7V1078.6Z" fill="url(#gV)" stroke="#101112" stroke-width="1.3"/><path d="M1868.5 1131.4V1389.4" stroke="#101112" stroke-width="1.3"/><path d="M1825.0 1103.6A149.5 74.75 0 0 0 2124.0 1103.6V1110.6A149.5 74.75 0 0 1 1825.0 1110.6Z" fill="#98a7c5" stroke="#101112" stroke-width=".9"/><path d="M1825.0 1095.6A149.5 74.75 0 0 0 2124.0 1095.6" fill="none" stroke="#101112" stroke-width="1"/><path d="M1825.0 1133.1A149.5 74.75 0 0 0 2124.0 1133.1V1140.1A149.5 74.75 0 0 1 1825.0 1140.1Z" fill="#98a7c5" stroke="#101112" stroke-width=".9"/><path d="M1825.0 1125.1A149.5 74.75 0 0 0 2124.0 1125.1" fill="none" stroke="#101112" stroke-width="1"/><path d="M1825.0 1162.6A149.5 74.75 0 0 0 2124.0 1162.6V1169.6A149.5 74.75 0 0 1 1825.0 1169.6Z" fill="#98a7c5" stroke="#101112" stroke-width=".9"/><path d="M1825.0 1154.6A149.5 74.75 0 0 0 2124.0 1154.6" fill="none" stroke="#101112" stroke-width="1"/><path d="M2110.4 1276.7L2110.0 1270.3L2108.9 1264.3L2107.0 1259.0L2104.5 1254.4L2101.3 1250.6L2097.5 1247.7L2093.2 1245.8L2088.6 1244.8L2083.5 1244.8L2078.3 1245.9L2072.9 1247.9L2067.4 1250.8L2062.1 1254.6L2056.9 1259.3L2052.1 1264.6L2047.6 1270.6L2043.5 1277.0L2040.0 1283.9L2037.2 1290.9L2035.0 1298.1L2033.5 1305.3L2032.7 1312.2L2032.7 1318.9L2033.5 1325.1L2035.0 1330.7L2037.2 1335.7L2040.0 1339.9L2043.5 1343.2L2047.6 1345.6L2052.1 1347.1L2056.9 1347.6L2062.1 1347.1L2067.4 1345.5L2072.9 1343.1L2078.3 1339.7L2083.5 1335.4L2088.6 1330.4L2093.2 1324.8L2097.5 1318.5L2101.3 1311.9L2104.5 1304.9L2107.0 1297.8L2108.9 1290.6L2110.0 1283.5Z" fill="url(#gHoC)" stroke="#101112" stroke-width="1.3" stroke-linejoin="round" /><path d="M2103.6 1276.1L2103.2 1270.1L2102.2 1264.6L2100.4 1259.7L2098.1 1255.4L2095.1 1251.9L2091.6 1249.3L2087.7 1247.4L2083.3 1246.5L2078.6 1246.6L2073.8 1247.5L2068.8 1249.4L2063.7 1252.1L2058.8 1255.6L2054.0 1259.9L2049.5 1264.9L2045.3 1270.4L2041.6 1276.4L2038.3 1282.8L2035.7 1289.3L2033.6 1296.0L2032.2 1302.6L2031.5 1309.0L2031.5 1315.2L2032.2 1321.0L2033.6 1326.2L2035.7 1330.8L2038.3 1334.7L2041.6 1337.8L2045.3 1340.0L2049.5 1341.4L2054.0 1341.8L2058.8 1341.4L2063.7 1340.0L2068.8 1337.7L2073.8 1334.5L2078.6 1330.6L2083.3 1325.9L2087.7 1320.7L2091.6 1314.9L2095.1 1308.7L2098.1 1302.3L2100.4 1295.6L2102.2 1289.0L2103.2 1282.4Z" fill="none" stroke="#101112" stroke-width="1" stroke-linejoin="round" /><path d="M2096.7 1275.5L2096.4 1270.0L2095.4 1264.9L2093.9 1260.4L2091.7 1256.5L2089.0 1253.2L2085.7 1250.8L2082.1 1249.1L2078.1 1248.3L2073.8 1248.3L2069.3 1249.2L2064.7 1250.9L2060.0 1253.4L2055.5 1256.7L2051.1 1260.6L2046.9 1265.2L2043.0 1270.3L2039.6 1275.8L2036.6 1281.7L2034.2 1287.7L2032.3 1293.8L2031.0 1299.9L2030.3 1305.9L2030.3 1311.6L2031.0 1316.9L2032.3 1321.7L2034.2 1325.9L2036.6 1329.5L2039.6 1332.4L2043.0 1334.4L2046.9 1335.7L2051.1 1336.1L2055.5 1335.7L2060.0 1334.4L2064.7 1332.2L2069.3 1329.3L2073.8 1325.7L2078.1 1321.4L2082.1 1316.6L2085.7 1311.3L2089.0 1305.6L2091.7 1299.6L2093.9 1293.5L2095.4 1287.4L2096.4 1281.4Z" fill="url(#gHoB)" stroke="#101112" stroke-width="1.2" stroke-linejoin="round" /><path d="M2031.6 1319.3L2033.1 1323.9L2035.3 1327.8L2038.0 1331.0L2041.3 1333.5L2044.9 1335.2L2048.9 1336.0L2053.2 1336.0L2057.7 1335.1L2062.3 1333.4L2067.0 1330.9L2071.5 1327.6L2076.0 1323.7L2080.1 1319.1L2084.0 1314.0Z" fill="#a9b8da" stroke="#101112" stroke-width="1" stroke-linejoin="round" /><ellipse cx="1974.5" cy="1078.6" rx="149.5" ry="74.75" fill="#94a3bf" stroke="#101112" stroke-width="1.3"/></g><g>
<path d="M682 1908L733 1884.500" stroke="#FF0000" stroke-width="8"/><path d="M720 1884L738 1882L727 1896Z" fill="#7A0000"/>
<path d="M682 1908L634 1885" stroke="#00EE00" stroke-width="8"/><path d="M644 1884L629.500 1882L637 1895Z" fill="#007000"/>
<rect x="678" y="1858" width="8" height="48" fill="#0000FF"/><path d="M676 1860L682 1844L688 1860Z" fill="#9A8CFF"/>
<circle cx="682" cy="1910.500" r="7.800" fill="#8C8C8C"/>
<text x="682" y="1854" font-family="Liberation Serif,serif" font-style="italic" font-weight="bold" font-size="34" fill="#1414F0" textLength="18" lengthAdjust="spacingAndGlyphs">Z</text>
<text x="614" y="1902" font-family="Liberation Serif,serif" font-weight="bold" font-size="36" fill="#00FF00" textLength="18" lengthAdjust="spacingAndGlyphs">Y</text>
<text x="749" y="1902" font-family="Liberation Serif,serif" font-weight="bold" font-size="36" fill="#FF0000" textLength="19" lengthAdjust="spacingAndGlyphs">X</text>
</g><path d="M2852.4 1677L2863.9 1665.5H2897.4L2885.9 1677Z" fill="#2B4C6A" opacity=".85"/><g fill="none" stroke="#2B4C6A" stroke-width="1.6" opacity=".8"><rect x="2852.4" y="1677" width="33.5" height="33.5"/><rect x="2863.9" y="1665.5" width="33.5" height="33.5"/><path d="M2852.4 1677l11.5 -11.5M2885.9 1677l11.5 -11.5M2852.4 1710.5l11.5 -11.5M2885.9 1710.5l11.5 -11.5"/></g><path d="M2722 1752L2733.5 1740.5V1774.0L2722 1785.5Z" fill="#2B4C6A" opacity=".85"/><g fill="none" stroke="#2B4C6A" stroke-width="1.6" opacity=".8"><rect x="2722" y="1752" width="33.5" height="33.5"/><rect x="2733.5" y="1740.5" width="33.5" height="33.5"/><path d="M2722 1752l11.5 -11.5M2755.5 1752l11.5 -11.5M2722 1785.5l11.5 -11.5M2755.5 1785.5l11.5 -11.5"/></g><path d="M3016.5 1752L3028.0 1740.5V1774.0L3016.5 1785.5Z" fill="#2B4C6A" opacity=".85"/><g fill="none" stroke="#2B4C6A" stroke-width="1.6" opacity=".8"><rect x="2983" y="1752" width="33.5" height="33.5"/><rect x="2994.5" y="1740.5" width="33.5" height="33.5"/><path d="M2983 1752l11.5 -11.5M3016.5 1752l11.5 -11.5M2983 1785.5l11.5 -11.5M3016.5 1785.5l11.5 -11.5"/></g><path d="M2722 1902H2755.5V1935.5H2722Z" fill="#2B4C6A" opacity=".85"/><g fill="none" stroke="#2B4C6A" stroke-width="1.6" opacity=".8"><rect x="2722" y="1902" width="33.5" height="33.5"/><rect x="2733.5" y="1890.5" width="33.5" height="33.5"/><path d="M2722 1902l11.5 -11.5M2755.5 1902l11.5 -11.5M2722 1935.5l11.5 -11.5M2755.5 1935.5l11.5 -11.5"/></g><path d="M2994.5 1890.5H3028.0V1924.0H2994.5Z" fill="#2B4C6A" opacity=".85"/><g fill="none" stroke="#2B4C6A" stroke-width="1.6" opacity=".8"><rect x="2983" y="1902" width="33.5" height="33.5"/><rect x="2994.5" y="1890.5" width="33.5" height="33.5"/><path d="M2983 1902l11.5 -11.5M3016.5 1902l11.5 -11.5M2983 1935.5l11.5 -11.5M3016.5 1935.5l11.5 -11.5"/></g><path d="M2852.4 2010.5L2863.9 1999.0H2897.4L2885.9 2010.5Z" fill="#2B4C6A" opacity=".85"/><g fill="none" stroke="#2B4C6A" stroke-width="1.6" opacity=".8"><rect x="2852.4" y="1977" width="33.5" height="33.5"/><rect x="2863.9" y="1965.5" width="33.5" height="33.5"/><path d="M2852.4 1977l11.5 -11.5M2885.9 1977l11.5 -11.5M2852.4 2010.5l11.5 -11.5M2885.9 2010.5l11.5 -11.5"/></g><circle cx="2873.700" cy="1838.200" r="99" fill="none" stroke="#0a0a0a" stroke-width="3"/><text x="2845.500" y="1837" font-family="Liberation Sans,sans-serif" font-weight="bold" font-size="44.5" fill="#0a0a0a" textLength="57.5" lengthAdjust="spacingAndGlyphs">3D</text><text x="2811.300" y="1877.400" font-family="Liberation Sans,sans-serif" font-size="29" fill="#0a0a0a" textLength="130.600" lengthAdjust="spacing">FastView</text></svg>
</body></html>
